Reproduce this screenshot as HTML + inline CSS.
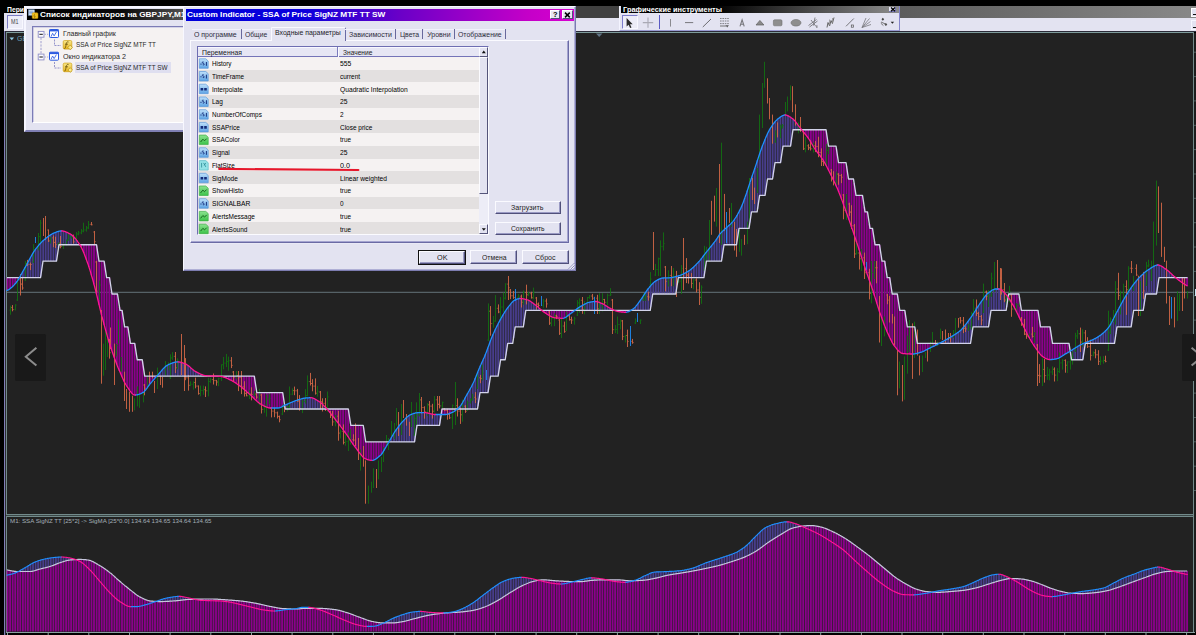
<!DOCTYPE html>
<html><head><meta charset="utf-8">
<style>
*{box-sizing:border-box;margin:0;padding:0}
html,body{width:1196px;height:635px;overflow:hidden;background:#000}
body{position:relative;font-family:"Liberation Sans",sans-serif;font-size:7.6px;color:#222}
.abs{position:absolute}
.t{position:absolute;white-space:nowrap;line-height:1;transform-origin:0 0}
#chart{position:absolute;left:0;top:0;width:1196px;height:635px}
.lav{background:#e3e3f1}
.btn{position:absolute;background:#e3e3f1;border:1px solid;border-color:#fafaff #55557a #55557a #fafaff;box-shadow:0.5px 0.5px 0 #9c9cc4 inset}
.row{position:absolute;left:0;width:281px;height:12.72px}
.row.a{background:#f5f2f2}.row.b{background:#e3e0e0}
</style></head><body>
<!-- chart background -->
<div class="abs" style="left:7px;top:33px;width:1187px;height:481.5px;background:#222222"></div>
<div class="abs" style="left:7px;top:517px;width:1187px;height:115px;background:#222222"></div>
<!-- frame lines -->
<div class="abs" style="left:3.8px;top:31px;width:1.6px;height:604px;background:#7f7fb6"></div>
<div class="abs" style="left:5.4px;top:31px;width:.8px;height:604px;background:#2a2a32"></div>
<div class="abs" style="left:6.2px;top:32px;width:1px;height:601px;background:#728a8a"></div>
<div class="abs" style="left:6px;top:32.4px;width:1188px;height:1px;background:#7e9c9c"></div>
<div class="abs" style="left:6px;top:31.2px;width:1190px;height:1px;background:#2c2c3a"></div>
<div class="abs" style="left:6px;top:514.3px;width:1189px;height:.9px;background:#728a8a"></div>
<div class="abs" style="left:6px;top:515.2px;width:1189px;height:1px;background:#3a4646"></div>
<div class="abs" style="left:6px;top:516.2px;width:1189px;height:.9px;background:#728a8a"></div>
<div class="abs" style="left:6px;top:631.6px;width:1189px;height:1px;background:#8aa0a0"></div>
<div class="abs" style="left:1193.2px;top:32px;width:1px;height:600px;background:#728a8a"></div>
<div class="abs" style="left:1194.2px;top:33px;width:1.8px;height:599px;background:#1c1c1c"></div>
<svg id="chart" viewBox="0 0 1196 635">
<line x1="7" y1="292.3" x2="1193" y2="292.3" stroke="#65747a" stroke-width="1"/>
<path d="M20.3 276.1V277.6M22.9 271.5V277.6M25.4 267V277.6M27.9 262.4V277.6M30.5 257.5V277.6M33 253V277.6M35.6 249.2V277.6M38.1 246V277.6M40.6 243.1V276.4M43.2 240.6V261.1M45.7 238.4V261.1M48.3 236.5V261.1M50.8 234.7V261.1M53.4 233.3V261.1M55.9 232.3V261.1M58.4 231.4V248.3M61 230.9V244.7M63.5 231.1V244.7M66.1 232V244.7M68.6 233.2V244.7M71.1 234.6V244.7M73.7 236.8V244.7M76.2 239.7V244.7M78.8 243.2V244.7M157.6 375.2V376.1M160.1 372.4V376.1M162.7 369.4V376.1M165.2 366.8V376.1M167.7 365V376.1M170.3 363.9V376.1M172.8 362.8V376.1M175.4 362.1V376.1M177.9 361.9V376.1M180.5 362.2V376.1M183 363V376.1M185.5 364V376.1M188.1 365.6V376.1M190.6 367.7V376.1M193.2 369.9V376.1M195.7 371.6V376.1M198.2 373V376.1M200.8 374.2V376.1M203.3 375.2V376.1M205.9 375.6V376.1M287.2 404.1V409M289.8 403V409M292.3 401.9V409M294.8 401V409M297.4 400.1V409M299.9 399.3V409M302.5 398.6V409M305 398.1V409M307.6 397.8V409M310.1 397.7V409M312.6 398V409M315.2 399.2V409M317.7 400.7V409M320.3 402.4V409M322.8 404.7V409M325.4 407.2V409M391.4 437.5V441.9M394 433.1V441.9M396.5 429.3V441.9M399.1 425.8V441.9M401.6 422.7V441.9M404.2 420V441.9M406.7 417.4V441.9M409.2 415.4V441.9M411.8 414.2V441.9M414.3 413.3V441.9M416.9 412.7V426.3M419.4 412.7V425.4M421.9 412.7V425.4M424.5 412.7V425.4M427 412.9V425.4M429.6 413.5V425.4M432.1 414.1V425.4M434.7 414.5V425.4M437.2 414.5V425.4M439.7 414.5V423.6M460.1 406.3V409M462.6 402.6V409M465.2 397.8V409M467.7 393.3V409M470.2 388.8V409M472.8 383.9V409M475.3 378.1V409M477.9 371.7V406.3M480.4 365.8V392.6M483 360.1V392.6M485.5 354.2V392.6M488 347.5V392.1M490.6 340.6V376.1M493.1 334.3V376.1M495.7 328.8V376.1M498.2 323.7V375.2M500.7 318.9V359.7M503.3 314.5V359.7M505.8 310.4V355.4M508.4 306.9V343.3M510.9 303.7V343.3M513.5 301V338.1M516 299.6V326.9M518.5 298.7V326.9M521.1 298.5V326.9M523.6 298.9V324.5M526.2 299.5V310.4M528.7 300.3V310.4M531.3 301.9V310.4M533.8 303.8V310.4M536.3 305.7V310.4M538.9 307.9V310.4M577 308.8V310.4M579.5 307.1V310.4M582.1 305.6V310.4M584.6 304.2V310.4M587.2 303V310.4M589.7 302.1V310.4M592.3 301.7V310.4M594.8 301.5V310.4M597.3 301.7V310.4M599.9 302.6V310.4M602.4 303.7V310.4M605 305V310.4M607.5 306.7V310.4M610.1 308.3V310.4M612.6 309.5V310.4M632.9 309V310.4M635.5 306.7V310.4M638 303.5V310.4M640.6 300.1V310.4M643.1 296.3V310.4M645.6 292.3V310.4M648.2 288.8V310.4M650.7 285.7V306.8M653.3 282.9V294M655.8 280.9V294M658.4 279.5V294M660.9 278.4V294M663.4 278V294M666 277.9V294M668.5 277.8V294M671.1 277.7V294M673.6 277.2V294M676.1 276.6V291.5M678.7 275.8V277.6M681.2 274.8V277.6M683.8 273.7V277.6M686.3 272.4V277.6M688.9 270.9V277.6M691.4 268.9V277.6M693.9 266.7V277.6M696.5 264.2V277.6M699 261.5V277.6M701.6 258.4V277.6M704.1 255V276M706.6 251.8V261.1M709.2 248.7V261.1M711.7 245.6V261.1M714.3 242.3V261.1M716.8 238.8V261.1M719.4 234.8V261.1M721.9 231.9V258.3M724.4 229.5V244.7M727 227.2V244.7M729.5 225V244.7M732.1 222.4V244.7M734.6 219.2V244.7M737.2 215.1V240.2M739.7 210.4V228.3M742.2 204.8V228.3M744.8 198.1V228.3M747.3 190.8V228.3M749.9 182.9V222.4M752.4 175.4V211.8M754.9 168V211.8M757.5 160.3V209.1M760 152.6V195.4M762.6 145.6V195.4M765.1 139.2V194.4M767.7 133.4V179M770.2 128.7V179M772.7 124.8V177.2M775.3 121.4V162.6M777.8 119V162.6M780.4 117V162.6M782.9 115.5V146.7M785.5 115V146.1M788 115.8V146.1M790.5 117.3V145.6M793.1 119.1V129.7M795.6 121.8V129.7M798.2 125.3V129.7M800.7 128.6V129.7M940.5 342.7V343.3M943.1 341.4V343.3M945.6 340V343.3M948.1 338.5V343.3M950.7 337V343.3M953.2 335.5V343.3M955.8 333.9V343.3M958.3 332.2V343.3M960.8 330.1V343.3M963.4 327.4V343.3M965.9 324.3V343.3M968.5 320.8V343.3M971 317.3V339.7M973.6 313.5V326.9M976.1 309.5V326.9M978.6 305.5V326.9M981.2 301.8V326.9M983.7 298.2V326.9M986.3 295V326.9M988.8 292.7V324.6M991.4 290.7V310.4M993.9 289.3V310.4M996.4 289V310.4M999 289V310.4M1001.5 290V310.4M1004.1 292.4V310.4M1006.6 295.1V306.9M1072.7 349.5V359.7M1075.2 347.9V359.7M1077.8 346.4V359.7M1080.3 344.9V359.7M1082.9 343.7V359M1085.4 342.6V343.3M1087.9 341.7V343.3M1090.5 340.7V343.3M1093 339.6V343.3M1095.6 338.3V343.3M1098.1 336.8V343.3M1100.7 335.1V343.3M1103.2 333V343.3M1105.7 330.6V343.3M1108.3 327.8V343.3M1110.8 323.9V343.3M1113.4 319V343.3M1115.9 313.9V333.9M1118.5 309.2V326.9M1121 304.5V326.9M1123.5 299.8V326.9M1126.1 295.4V326.9M1128.6 291.5V326.9M1131.2 287.7V326.2M1133.7 284.2V310.4M1136.2 281V310.4M1138.8 278.2V310.4M1141.3 275.6V310.4M1143.9 273.2V305.8M1146.4 271.1V294M1149 269.3V294M1151.5 267.7V294M1154 266.1V294M1156.6 265.1V293.2M1159.1 265.2V277.6M1161.7 266.3V277.6M1164.2 268.1V277.6M1166.8 269.9V277.6M1169.3 271.9V277.6M1171.8 274.3V277.6M1174.4 276.6V277.6" stroke="#483d8b" stroke-width="1.86" fill="none"/>
<path d="M7.6 290.2V277.6M10.1 288.6V277.6M12.7 286.4V277.6M15.2 283.7V277.6M17.8 280.3V277.6M81.3 247.3V244.7M83.9 253V244.7M86.4 259.7V244.7M88.9 266.9V244.7M91.5 275.3V244.7M94 284.4V244.7M96.6 294.3V245.4M99.1 304.9V261.1M101.7 315.3V261.1M104.2 324.9V262M106.7 334V277.6M109.3 342.6V277.6M111.8 350.4V292.8M114.4 357.7V294M116.9 364.6V294M119.4 370.8V306.9M122 376.7V310.4M124.5 382.2V326.4M127.1 386.5V326.9M129.6 390.2V338.2M132.2 393.4V343.3M134.7 395V343.6M137.2 394.8V359.7M139.8 394V359.7M142.3 392.9V360.8M144.9 390.9V376.1M147.4 387.5V376.1M150 384.1V376.1M152.5 381.1V376.1M155 378.1V376.1M223.7 377.1V376.1M226.2 378V376.1M228.8 379.2V376.1M231.3 380.4V376.1M233.8 381.8V376.1M236.4 383.5V376.1M238.9 385.2V376.1M241.5 387.1V376.1M244 389.2V376.1M246.5 391.5V376.1M249.1 393.8V376.1M251.6 396V376.1M254.2 398.5V376.1M256.7 401V392M259.3 403.1V392.6M261.8 404.7V392.6M264.3 406.1V392.6M266.9 407.2V392.6M269.4 407.9V392.6M272 408V392.6M274.5 408V392.6M277.1 408V392.6M279.6 407.7V392.6M282.1 406.6V392.6M327.9 410V409M330.4 413.1V409M333 416.3V409M335.5 419.6V409M338.1 422.9V409M340.6 426.3V409M343.1 429.7V409M345.7 433.2V409M348.2 436.9V409M350.8 440.7V425.2M353.3 444.5V425.4M355.9 447.9V425.4M358.4 451.3V425.4M360.9 454.7V425.4M363.5 457.4V427.5M366 459V441.9M368.6 459.9V441.9M371.1 460.4V441.9M373.6 460.1V441.9M376.2 458.8V441.9M378.7 456.9V441.9M381.3 454.5V441.9M383.8 450.7V441.9M386.4 446.3V441.9M442.3 414.5V409M444.8 414.5V409M447.4 414.2V409M449.9 413.4V409M452.4 412.3V409M455 410.9V409M544 312.1V310.4M546.5 313.8V310.4M549 315.4V310.4M551.6 316.8V310.4M554.1 317.7V310.4M556.7 318V310.4M559.2 318.2V310.4M561.8 318.3V310.4M564.3 318V310.4M566.8 316.5V310.4M569.4 314.4V310.4M571.9 312.7V310.4M617.7 311.4V310.4M620.2 311.9V310.4M622.8 312.2V310.4M625.3 312.3V310.4M627.8 311.9V310.4M803.2 131.6V129.7M805.8 134.7V129.7M808.3 138.2V129.7M810.9 142.2V129.7M813.4 146.5V129.7M816 150.4V129.7M818.5 153.8V129.7M821 157.1V129.7M823.6 160.9V129.7M826.1 165.4V130.8M828.7 170.4V146.1M831.2 175.4V146.1M833.8 180.6V146.1M836.3 186.1V148.3M838.8 192V162.6M841.4 198.6V162.6M843.9 205.6V162.6M846.5 212.6V165.8M849 219.8V179M851.5 227.1V179M854.1 234.5V183M856.6 242.1V195.4M859.2 249.8V195.4M861.7 257.7V195.4M864.3 265.5V207M866.8 273V211.8M869.3 280.2V224M871.9 287.6V228.3M874.4 295.4V241M877 303.6V244.7M879.5 311.5V245M882 318.7V261.1M884.6 325.5V261.1M887.1 331.7V277.1M889.7 337.3V277.7M892.2 342.4V294M894.8 346.4V294M897.3 349.4V294.3M899.8 352V310.4M902.4 353.4V310.4M904.9 353.7V311.5M907.5 353.9V326.9M910 354V326.9M912.6 354V326.9M915.1 353.8V329M917.6 353.2V343.3M920.2 352.4V343.3M922.7 351.5V343.3M925.3 350.4V343.3M927.8 349.1V343.3M930.3 347.8V343.3M932.9 346.6V343.3M935.4 345.4V343.3M938 344.1V343.3M1009.1 298.6V294M1011.7 302.8V294M1014.2 307.2V294M1016.8 312.1V294M1019.3 317.4V297M1021.9 322.6V310.4M1024.4 328.1V310.4M1026.9 333.4V310.4M1029.5 338.1V310.4M1032 342.4V310.4M1034.6 346.4V310.4M1037.1 350V310.4M1039.7 353.4V321.4M1042.2 356.2V326.9M1044.7 357.8V326.9M1047.3 359V326.9M1049.8 359.6V326.9M1052.4 359.5V342.4M1054.9 359.1V343.3M1057.4 358.6V343.3M1060 357.3V343.3M1062.5 355.8V343.3M1065.1 354.1V343.3M1067.6 352.7V343.3M1176.9 278.7V277.6M1179.5 280.7V277.6M1182 282.5V277.6M1184.5 284.3V277.6M1187.1 285.8V277.6" stroke="#8b008b" stroke-width="1.86" fill="none"/>
<path d="M10.5 305.7V314.7M9.4 310.1h.8M10.8 307.6h.8M15.5 304.2V310.5M14.4 309.6h.8M15.8 305.1h.8M17.5 278.8V301.0M16.4 300.0h.8M17.8 279.8h.8M25.5 260.9V281.0M24.4 280.0h.8M25.8 263.3h.8M33.5 244.1V263.0M32.4 262.0h.8M33.8 247.8h.8M38.5 233.0V250.4M37.4 247.8h.8M38.8 236.7h.8M40.5 219.9V243.0M39.4 236.7h.8M40.8 223.0h.8M50.5 237.2V243.6M49.4 240.9h.8M50.8 237.9h.8M58.5 242.6V246.6M57.4 244.6h.8M58.8 243.1h.8M63.5 243.2V249.0M62.4 246.5h.8M63.8 244.2h.8M66.5 239.5V245.7M65.4 244.2h.8M66.8 240.2h.8M68.5 232.0V240.7M67.4 240.2h.8M68.8 237.1h.8M71.5 236.2V238.7M70.4 237.1h.8M71.8 236.7h.8M76.5 232.0V239.0M75.4 238.0h.8M76.8 234.0h.8M78.5 231.0V235.3M77.4 234.0h.8M78.8 232.9h.8M81.5 229.1V234.2M80.4 232.9h.8M81.8 231.1h.8M83.5 222.7V232.3M82.4 231.1h.8M83.8 230.0h.8M86.5 226.0V231.6M85.4 230.0h.8M86.8 227.9h.8M88.5 221.0V229.1M87.4 227.9h.8M88.8 224.3h.8M99.5 280.5V300.0M98.4 291.1h.8M99.8 285.0h.8M116.5 344.1V356.4M115.4 352.8h.8M116.8 345.6h.8M170.5 354.3V379.0M169.4 378.0h.8M170.8 357.9h.8M172.5 352.1V359.9M171.4 357.9h.8M172.8 356.3h.8M177.5 358.3V369.4M176.4 367.8h.8M177.8 360.2h.8M190.5 381.3V386.1M189.4 385.3h.8M190.8 384.2h.8M193.5 381.3V389.7M192.4 384.2h.8M193.8 382.5h.8M200.5 385.6V396.3M199.4 393.5h.8M200.8 390.5h.8M203.5 385.6V394.8M202.4 390.5h.8M203.8 389.7h.8M208.5 377.7V396.4M207.4 390.8h.8M208.8 381.6h.8M210.5 377.9V382.9M209.4 381.6h.8M210.8 379.5h.8M218.5 377.6V386.2M217.4 382.0h.8M218.8 378.6h.8M221.5 364.3V381.0M220.4 378.6h.8M221.8 364.8h.8M223.5 356.9V369.4M222.4 364.8h.8M223.8 363.1h.8M226.5 353.9V367.1M225.4 363.1h.8M226.8 361.7h.8M228.5 356.6V370.7M227.4 361.7h.8M228.8 360.8h.8M236.5 371.0V379.4M235.4 377.1h.8M236.8 375.4h.8M249.5 389.8V399.0M248.4 395.8h.8M249.8 393.9h.8M254.5 390.8V396.3M253.4 394.4h.8M254.8 394.0h.8M259.5 388.8V405.2M258.4 397.1h.8M259.8 393.5h.8M264.5 404.5V412.8M263.4 409.3h.8M264.8 406.8h.8M266.5 394.5V416.6M265.4 406.8h.8M266.8 399.0h.8M269.5 394.0V404.2M268.4 399.0h.8M269.8 398.3h.8M282.5 404.8V415.0M281.4 414.0h.8M282.8 406.7h.8M287.5 405.8V411.4M286.4 407.1h.8M287.8 406.5h.8M289.5 386.5V409.0M288.4 406.5h.8M289.8 394.2h.8M292.5 388.3V395.0M291.4 394.2h.8M292.8 390.6h.8M302.5 399.2V413.1M301.4 408.5h.8M302.8 401.5h.8M305.5 389.2V403.6M304.4 401.5h.8M305.8 395.6h.8M307.5 375.4V396.4M306.4 395.6h.8M307.8 381.6h.8M317.5 385.9V396.7M316.4 393.2h.8M317.8 391.7h.8M327.5 391.5V411.9M326.4 407.4h.8M327.8 396.9h.8M335.5 414.9V426.3M334.4 421.9h.8M335.8 416.2h.8M340.5 429.5V438.5M339.4 433.1h.8M340.8 431.3h.8M345.5 434.0V445.7M344.4 442.4h.8M345.8 441.7h.8M348.5 432.4V451.0M347.4 441.7h.8M348.8 439.9h.8M350.5 429.1V444.6M349.4 439.9h.8M350.8 439.7h.8M414.5 413.1V436.0M413.4 435.0h.8M414.8 418.3h.8M416.5 402.3V424.7M415.4 418.3h.8M416.8 415.2h.8M419.5 393.0V416.4M418.4 415.2h.8M419.8 399.9h.8M427.5 403.1V415.9M426.4 411.8h.8M427.8 404.8h.8M434.5 396.0V412.5M433.4 411.2h.8M434.8 399.8h.8M442.5 401.6V408.2M441.4 405.9h.8M442.8 402.5h.8M452.5 404.4V429.0M451.4 417.8h.8M452.8 405.6h.8M462.5 399.6V421.7M461.4 414.8h.8M462.8 406.2h.8M467.5 400.6V411.0M466.4 410.0h.8M467.8 402.7h.8M470.5 398.2V403.5M469.4 402.7h.8M470.8 400.0h.8M472.5 393.8V400.7M471.4 400.0h.8M472.8 397.3h.8M477.5 372.9V389.0M476.4 388.0h.8M477.8 377.8h.8M482.5 364.7V380.6M481.4 378.6h.8M482.8 373.2h.8M488.5 303.4V341.0M487.4 340.0h.8M488.8 311.2h.8M493.5 316.0V327.7M492.4 323.6h.8M493.8 321.1h.8M495.5 295.1V321.8M494.4 321.1h.8M495.8 308.3h.8M500.5 297.1V319.1M499.4 312.0h.8M500.8 307.0h.8M503.5 292.6V311.8M502.4 307.0h.8M503.8 298.2h.8M505.5 283.2V299.6M504.4 298.2h.8M505.8 284.1h.8M518.5 294.1V298.7M517.4 297.5h.8M518.8 296.2h.8M523.5 290.5V304.7M522.4 302.2h.8M523.8 292.6h.8M528.5 292.0V296.1M527.4 294.8h.8M528.8 293.7h.8M533.5 287.6V299.2M532.4 297.8h.8M533.8 292.8h.8M543.5 299.0V307.8M542.4 305.5h.8M543.8 301.0h.8M551.5 315.6V326.4M550.4 323.1h.8M551.8 318.4h.8M554.5 313.4V326.2M553.4 318.4h.8M554.8 315.9h.8M561.5 319.0V338.1M560.4 333.3h.8M561.8 326.0h.8M566.5 311.7V331.0M565.4 330.0h.8M566.8 316.0h.8M574.5 316.8V324.6M573.4 320.1h.8M574.8 318.8h.8M577.5 300.1V316.0M576.4 315.0h.8M577.8 302.9h.8M579.5 298.3V312.8M578.4 302.9h.8M579.8 300.3h.8M584.5 301.0V314.3M583.4 309.8h.8M584.8 309.5h.8M587.5 296.9V304.0M586.4 303.0h.8M587.8 297.5h.8M589.5 295.0V298.9M588.4 297.5h.8M589.8 296.0h.8M599.5 293.2V314.0M598.4 308.8h.8M599.8 306.0h.8M602.5 293.2V311.5M601.4 306.0h.8M602.8 299.5h.8M607.5 293.7V305.4M606.4 302.3h.8M607.8 295.3h.8M610.5 288.1V296.0M609.4 295.3h.8M610.8 294.7h.8M615.5 325.0V333.1M614.4 329.7h.8M615.8 329.6h.8M617.5 316.5V334.0M616.4 329.6h.8M617.8 324.5h.8M620.5 319.5V329.4M619.4 324.5h.8M620.8 320.9h.8M625.5 334.9V342.5M624.4 336.6h.8M625.8 335.5h.8M635.5 318.4V324.0M634.4 323.0h.8M635.8 320.9h.8M640.5 319.4V324.0M639.4 320.9h.8M640.8 320.1h.8M643.5 293.5V301.0M642.4 300.0h.8M643.8 297.0h.8M645.5 293.6V301.0M644.4 297.0h.8M645.8 296.7h.8M650.5 272.1V286.0M649.4 285.0h.8M650.8 279.1h.8M655.5 263.9V276.0M654.4 275.0h.8M655.8 269.6h.8M658.5 257.6V276.0M657.4 269.6h.8M658.8 258.8h.8M660.5 240.4V276.0M659.4 258.8h.8M660.8 246.7h.8M663.5 232.4V250.5M662.4 246.7h.8M663.8 243.7h.8M668.5 270.3V286.5M667.4 281.4h.8M668.8 275.4h.8M673.5 268.1V286.3M672.4 277.2h.8M673.8 276.3h.8M678.5 279.2V283.2M677.4 281.3h.8M678.8 281.1h.8M681.5 265.1V294.0M680.4 281.1h.8M681.8 268.5h.8M693.5 279.0V289.3M692.4 283.4h.8M693.8 280.0h.8M701.5 285.3V303.8M700.4 297.3h.8M701.8 287.2h.8M704.5 245.8V271.0M703.4 270.0h.8M704.8 255.0h.8M775.5 130.3V142.7M774.4 142.0h.8M775.8 134.2h.8M780.5 124.5V138.3M779.4 134.2h.8M780.8 126.9h.8M782.5 124.0V128.7M781.4 126.9h.8M782.8 125.7h.8M798.5 122.2V133.3M797.4 125.7h.8M798.8 124.5h.8M805.5 137.1V152.3M804.4 148.8h.8M805.8 145.8h.8M813.5 142.7V152.6M812.4 148.8h.8M813.8 145.8h.8M826.5 143.9V165.3M825.4 162.1h.8M826.8 150.6h.8M828.5 145.3V154.4M827.4 150.6h.8M828.8 148.6h.8M836.5 171.5V184.9M835.4 181.9h.8M836.8 174.1h.8M846.5 194.0V220.0M845.4 210.3h.8M846.8 204.0h.8M856.5 240.2V254.6M855.4 253.9h.8M856.8 253.0h.8M861.5 248.8V271.0M860.4 258.8h.8M861.8 257.8h.8M871.5 261.0V303.3M870.4 293.5h.8M871.8 272.4h.8M874.5 261.0V278.9M873.4 272.4h.8M874.8 267.8h.8M968.5 324.1V330.9M967.4 328.9h.8M968.8 326.3h.8M971.5 311.8V329.7M970.4 326.3h.8M971.8 313.4h.8M973.5 299.0V314.9M972.4 313.4h.8M973.8 308.2h.8M983.5 283.6V313.0M982.4 312.0h.8M983.8 291.8h.8M988.5 290.1V307.0M987.4 296.1h.8M988.8 295.7h.8M991.5 272.7V296.8M990.4 295.7h.8M991.8 278.2h.8M1006.5 294.9V306.0M1005.4 300.0h.8M1006.8 297.2h.8M1009.5 285.8V302.2M1008.4 297.2h.8M1009.8 291.4h.8M1014.5 308.4V310.2M1013.4 309.0h.8M1014.8 308.9h.8M1016.5 303.1V311.7M1015.4 308.9h.8M1016.8 304.5h.8M1019.5 295.5V306.8M1018.4 304.5h.8M1019.8 298.2h.8M1029.5 333.6V336.9M1028.4 336.2h.8M1029.8 334.1h.8M1034.5 332.1V343.0M1033.4 336.4h.8M1034.8 333.3h.8M1042.5 358.2V386.0M1041.4 376.0h.8M1042.8 369.4h.8M1047.5 366.9V379.8M1046.4 375.6h.8M1047.8 375.1h.8M1049.5 368.7V380.4M1048.4 375.1h.8M1049.8 372.0h.8M1052.5 366.4V374.9M1051.4 372.0h.8M1052.8 369.2h.8M1057.5 368.1V381.2M1056.4 375.1h.8M1057.8 371.4h.8M1059.5 352.4V373.0M1058.4 371.4h.8M1059.8 362.9h.8M1062.5 359.2V369.6M1061.4 362.9h.8M1062.8 360.4h.8M1067.5 361.2V373.0M1066.4 365.2h.8M1067.8 361.9h.8M1070.5 357.1V369.6M1069.4 361.9h.8M1070.8 359.6h.8M1072.5 351.5V364.6M1071.4 359.6h.8M1072.8 357.1h.8M1075.5 332.8V352.0M1074.4 351.0h.8M1075.8 335.9h.8M1077.5 330.0V338.9M1076.4 335.9h.8M1077.8 333.8h.8M1082.5 329.3V347.2M1081.4 342.1h.8M1082.8 332.9h.8M1093.5 351.3V356.3M1092.4 355.4h.8M1093.8 352.8h.8M1100.5 356.3V365.0M1099.4 361.4h.8M1100.8 361.1h.8M1103.5 356.2V363.7M1102.4 361.1h.8M1103.8 360.4h.8M1108.5 310.7V351.0M1107.4 350.0h.8M1108.8 332.8h.8M1110.5 317.4V334.2M1109.4 332.8h.8M1110.8 319.1h.8M1113.5 310.0V321.8M1112.4 319.1h.8M1113.8 316.9h.8M1115.5 281.1V324.5M1114.4 316.9h.8M1115.8 289.0h.8M1120.5 290.6V314.5M1119.4 295.5h.8M1120.8 293.0h.8M1123.5 283.7V298.3M1122.4 293.0h.8M1123.8 286.6h.8M1128.5 266.2V293.2M1127.4 289.7h.8M1128.8 268.2h.8M1146.5 261.8V286.0M1145.4 285.0h.8M1146.8 265.9h.8M1148.5 259.7V267.2M1147.4 265.9h.8M1148.8 264.9h.8M759.5 114.6V160.0M762.5 83.0V128.0M764.5 61.8V87.8M785.5 102.0V116.0M787.5 96.5V111.4M790.5 85.4V100.4M1153.5 221.6V267.0M1156.5 180.6V245.6M1177.5 291.0V321.0M1179.5 293.4V311.0M1187.5 291.0V298.5M1133.5 275.8V291.0M1140.5 281.0V316.0M1151.5 260.7V281.0M360.5 449.4V470.6M368.5 485.6V503.7M371.5 481.7V492.7M373.5 468.3V488.0M378.5 460.4V479.3M381.5 457.0V472.0M383.5 447.0V462.0M386.5 435.0V444.6M388.5 438.0V450.0M391.5 421.0V436.0M394.5 423.0V439.0M396.5 408.0V425.7M401.5 404.0V435.0M411.5 402.0V427.0M881.5 317.0V346.0M884.5 316.5V336.4M899.5 361.5V388.4M904.5 356.3V399.7M907.5 335.5V373.7M909.5 320.0V352.0M914.5 321.7V358.0M922.5 355.5V372.0M925.5 352.0V358.0M930.5 341.6V352.0M932.5 332.0V346.0M937.5 341.6V346.0M940.5 328.6V339.0M953.5 330.0V338.0M955.5 318.0V333.0M706.5 246.8V262.0M709.5 220.0V262.0M716.5 188.0V226.6M721.5 142.7V244.9M731.5 203.0V227.0M739.5 230.0V251.8M741.5 239.0V255.6M747.5 221.6V244.2M749.5 178.0V227.9M757.5 168.0V193.0M103.5 343.6V375.7M105.5 330.0V370.0M107.5 333.0V357.0M118.5 319.5V343.6M121.5 357.0V371.7M134.5 398.4V410.4M137.5 386.4V406.4M139.5 394.4V407.8M143.5 391.7V402.4M147.5 375.7V389.0M157.5 367.6V389.0M165.5 361.0V375.7M168.5 362.3V370.3M994.5 262.0V292.0M455.5 382.0V425.0" stroke="#117511" stroke-width="0.85" fill="none"/><path d="M12.5 305.1V311.3M11.4 307.6h.8M12.8 309.6h.8M20.5 274.0V295.5M19.4 279.8h.8M20.8 284.1h.8M22.5 277.9V289.8M21.4 284.1h.8M22.8 288.0h.8M27.5 259.9V265.9M26.4 263.3h.8M27.8 264.3h.8M30.5 262.6V270.1M29.4 264.3h.8M30.8 264.5h.8M48.5 229.4V242.0M47.4 230.0h.8M48.8 240.9h.8M53.5 235.5V247.2M52.4 237.9h.8M53.8 242.4h.8M55.5 236.7V248.0M54.4 242.4h.8M55.8 244.6h.8M60.5 236.0V248.3M59.4 243.1h.8M60.8 246.5h.8M73.5 234.6V243.6M72.4 236.7h.8M73.8 241.8h.8M91.5 222.0V225.4M90.4 224.3h.8M91.8 224.8h.8M94.5 231.0V244.7M93.4 232.0h.8M94.8 241.6h.8M96.5 261.0V293.7M95.4 262.0h.8M96.8 291.1h.8M109.5 339.0V358.6M108.4 340.0h.8M109.8 352.8h.8M144.5 384.0V395.3M143.4 385.0h.8M144.8 388.2h.8M175.5 352.0V373.0M174.4 356.3h.8M175.8 367.8h.8M185.5 358.1V380.2M184.4 360.2h.8M185.8 377.8h.8M188.5 374.9V390.6M187.4 377.8h.8M188.8 385.3h.8M195.5 377.6V388.3M194.4 382.5h.8M195.8 386.1h.8M198.5 385.4V394.7M197.4 386.1h.8M198.8 393.5h.8M205.5 386.4V397.0M204.4 389.7h.8M205.8 390.8h.8M213.5 373.5V384.5M212.4 379.5h.8M213.8 380.6h.8M216.5 379.9V385.7M215.4 380.6h.8M216.8 382.0h.8M231.5 357.1V368.1M230.4 360.8h.8M231.8 365.4h.8M233.5 371.0V381.0M232.4 372.0h.8M233.8 377.1h.8M238.5 371.0V391.1M237.4 375.4h.8M238.8 377.4h.8M241.5 371.0V394.1M240.4 377.4h.8M241.8 386.9h.8M244.5 381.2V396.6M243.4 386.9h.8M244.8 393.3h.8M246.5 391.4V396.3M245.4 393.3h.8M246.8 395.8h.8M251.5 387.3V400.4M250.4 393.9h.8M251.8 394.4h.8M256.5 393.3V398.8M255.4 394.0h.8M256.8 397.1h.8M261.5 394.0V413.5M260.4 395.0h.8M261.8 409.3h.8M271.5 407.0V417.4M270.4 408.0h.8M271.8 411.1h.8M274.5 407.8V417.2M273.4 411.1h.8M274.8 412.8h.8M277.5 411.6V418.5M276.4 412.8h.8M277.8 416.4h.8M279.5 415.6V422.3M278.4 416.4h.8M279.8 419.7h.8M284.5 403.3V412.2M283.4 406.7h.8M284.8 407.1h.8M294.5 386.6V395.2M293.4 390.6h.8M294.8 390.8h.8M297.5 388.9V401.7M296.4 390.8h.8M297.8 401.0h.8M299.5 395.1V410.7M298.4 401.0h.8M299.8 408.5h.8M310.5 372.9V385.5M309.4 381.6h.8M310.8 383.5h.8M312.5 379.2V391.3M311.4 383.5h.8M312.8 386.1h.8M315.5 378.4V394.6M314.4 386.1h.8M315.8 393.2h.8M320.5 391.0V409.3M319.4 392.0h.8M320.8 401.8h.8M322.5 398.3V411.5M321.4 401.8h.8M322.8 403.3h.8M325.5 398.1V410.9M324.4 403.3h.8M325.8 407.4h.8M330.5 411.0V418.0M329.4 412.0h.8M330.8 415.6h.8M332.5 411.0V425.8M331.4 415.6h.8M332.8 421.9h.8M338.5 411.0V440.7M337.4 416.2h.8M338.8 433.1h.8M343.5 424.4V444.4M342.4 431.3h.8M343.8 442.4h.8M353.5 434.3V441.4M352.4 439.7h.8M353.8 440.1h.8M421.5 397.0V413.5M420.4 399.9h.8M421.8 407.6h.8M424.5 406.3V418.7M423.4 407.6h.8M424.8 411.8h.8M429.5 401.0V412.5M428.4 404.8h.8M429.8 406.1h.8M432.5 403.8V418.6M431.4 406.1h.8M432.8 411.2h.8M437.5 396.0V410.9M436.4 399.8h.8M437.8 404.3h.8M439.5 396.0V408.4M438.4 404.3h.8M439.8 405.9h.8M444.5 408.0V411.1M443.4 409.0h.8M444.8 410.4h.8M447.5 408.8V419.7M446.4 410.4h.8M447.8 414.4h.8M449.5 412.4V419.1M448.4 414.4h.8M449.8 417.8h.8M457.5 398.3V416.5M456.4 405.6h.8M457.8 411.1h.8M460.5 407.5V423.9M459.4 411.1h.8M460.8 414.8h.8M465.5 405.2V412.9M464.4 406.2h.8M465.8 411.3h.8M475.5 392.1V403.1M474.4 397.3h.8M475.8 399.0h.8M480.5 374.9V383.2M479.4 377.8h.8M480.8 378.6h.8M490.5 306.1V335.7M489.4 311.2h.8M490.8 323.6h.8M498.5 304.4V313.2M497.4 308.3h.8M498.8 312.0h.8M508.5 276.0V300.0M507.4 284.1h.8M508.8 287.7h.8M510.5 289.0V299.2M509.4 290.0h.8M510.8 295.8h.8M513.5 291.0V298.9M512.4 295.8h.8M513.8 297.5h.8M521.5 294.6V307.5M520.4 296.2h.8M521.8 302.2h.8M526.5 284.7V304.4M525.4 292.6h.8M526.8 294.8h.8M531.5 291.8V298.6M530.4 293.7h.8M531.8 297.8h.8M536.5 297.0V309.6M535.4 298.0h.8M536.8 304.1h.8M538.5 302.5V307.7M537.4 304.1h.8M538.8 305.5h.8M546.5 298.5V307.7M545.4 301.0h.8M546.8 303.9h.8M549.5 311.0V324.9M548.4 312.0h.8M549.8 323.1h.8M556.5 314.7V319.1M555.4 315.9h.8M556.8 316.7h.8M559.5 319.0V334.9M558.4 320.0h.8M559.8 333.3h.8M564.5 321.6V332.8M563.4 326.0h.8M564.8 331.6h.8M569.5 314.4V320.6M568.4 316.0h.8M569.8 319.7h.8M571.5 316.7V323.9M570.4 319.7h.8M571.8 320.1h.8M582.5 297.0V313.8M581.4 300.3h.8M582.8 309.8h.8M592.5 293.9V299.9M591.4 296.0h.8M592.8 298.2h.8M597.5 294.8V314.0M596.4 298.2h.8M597.8 308.8h.8M604.5 298.9V304.0M603.4 299.5h.8M604.8 302.3h.8M612.5 299.0V334.0M611.4 300.0h.8M612.8 329.7h.8M622.5 320.0V340.1M621.4 320.9h.8M622.8 336.6h.8M627.5 329.6V347.0M626.4 335.5h.8M627.8 341.4h.8M632.5 338.9V343.8M631.4 341.4h.8M632.8 342.6h.8M648.5 291.8V300.6M647.4 296.7h.8M648.8 297.0h.8M665.5 266.0V291.3M664.4 267.0h.8M665.8 281.4h.8M671.5 266.0V286.2M670.4 275.4h.8M671.8 277.2h.8M676.5 270.9V297.0M675.4 276.3h.8M676.8 281.3h.8M686.5 258.1V283.1M685.4 268.5h.8M686.8 275.1h.8M688.5 272.8V283.6M687.4 275.1h.8M688.8 277.5h.8M691.5 273.1V288.1M690.4 277.5h.8M691.8 283.4h.8M696.5 278.3V292.5M695.4 280.0h.8M696.8 290.0h.8M699.5 282.2V305.0M698.4 290.0h.8M699.8 297.3h.8M803.5 131.0V150.0M802.4 132.0h.8M803.8 148.8h.8M808.5 144.2V150.1M807.4 145.8h.8M808.8 147.8h.8M810.5 140.5V150.5M809.4 147.8h.8M810.8 148.8h.8M815.5 141.1V152.1M814.4 145.8h.8M815.8 146.4h.8M818.5 136.8V157.2M817.4 146.4h.8M818.8 152.5h.8M821.5 148.3V166.0M820.4 152.5h.8M821.8 161.6h.8M823.5 159.8V166.0M822.4 161.6h.8M823.8 162.1h.8M831.5 169.0V181.5M830.4 170.0h.8M831.8 178.8h.8M833.5 171.2V185.4M832.4 178.8h.8M833.8 181.9h.8M838.5 173.1V184.8M837.4 174.1h.8M838.8 175.4h.8M841.5 174.0V183.1M840.4 175.4h.8M841.8 177.2h.8M843.5 194.0V219.3M842.4 195.0h.8M843.8 210.3h.8M849.5 202.7V215.8M848.4 204.0h.8M849.8 212.1h.8M851.5 205.2V229.0M850.4 212.1h.8M851.8 225.8h.8M854.5 224.0V258.0M853.4 225.8h.8M854.8 253.9h.8M859.5 251.5V269.5M858.4 253.0h.8M859.8 258.8h.8M864.5 252.6V279.0M863.4 257.8h.8M864.8 272.7h.8M869.5 268.8V299.4M868.4 272.7h.8M869.8 293.5h.8M876.5 261.0V283.3M875.4 267.8h.8M876.8 267.8h.8M887.5 294.0V304.2M886.4 295.0h.8M887.8 300.1h.8M960.5 317.0V323.5M959.4 318.0h.8M960.8 320.8h.8M963.5 317.0V333.1M962.4 320.8h.8M963.8 328.2h.8M965.5 326.2V332.0M964.4 328.2h.8M965.8 328.9h.8M976.5 299.5V316.0M975.4 308.2h.8M976.8 313.3h.8M978.5 311.9V320.2M977.4 313.3h.8M978.8 316.5h.8M981.5 315.0V325.1M980.4 316.5h.8M981.8 320.0h.8M986.5 290.6V300.2M985.4 291.8h.8M986.8 296.1h.8M1001.5 268.4V294.6M1000.4 278.2h.8M1001.8 289.7h.8M1004.5 283.0V302.2M1003.4 289.7h.8M1004.8 300.0h.8M1011.5 294.1V316.8M1010.4 295.0h.8M1011.8 309.0h.8M1021.5 317.0V325.8M1020.4 318.0h.8M1021.8 324.8h.8M1024.5 318.9V335.1M1023.4 324.8h.8M1024.8 334.1h.8M1026.5 333.4V338.8M1025.4 334.1h.8M1026.8 336.2h.8M1032.5 326.9V337.6M1031.4 334.1h.8M1032.8 336.4h.8M1037.5 344.0V386.0M1036.4 345.0h.8M1037.8 375.4h.8M1039.5 364.1V383.0M1038.4 375.4h.8M1039.8 376.0h.8M1044.5 358.8V382.6M1043.4 369.4h.8M1044.8 375.6h.8M1054.5 367.4V381.5M1053.4 369.2h.8M1054.8 375.1h.8M1065.5 359.4V372.7M1064.4 360.4h.8M1065.8 365.2h.8M1080.5 327.6V352.0M1079.4 333.8h.8M1080.8 342.1h.8M1085.5 330.1V343.9M1084.4 332.9h.8M1085.8 341.9h.8M1087.5 337.2V348.0M1086.4 341.9h.8M1087.8 346.7h.8M1090.5 339.7V360.5M1089.4 346.7h.8M1090.8 355.4h.8M1095.5 349.2V358.3M1094.4 352.8h.8M1095.8 354.8h.8M1098.5 350.2V365.0M1097.4 354.8h.8M1098.8 361.4h.8M1105.5 355.7V362.3M1104.4 360.4h.8M1105.8 361.4h.8M1118.5 272.8V299.9M1117.4 289.0h.8M1118.8 295.5h.8M1126.5 280.3V314.9M1125.4 286.6h.8M1126.8 289.7h.8M1131.5 261.0V273.1M1130.4 268.2h.8M1131.8 268.4h.8M1136.5 264.3V275.9M1135.4 268.4h.8M1136.8 275.0h.8M1143.5 271.9V298.9M1142.4 275.0h.8M1143.8 290.9h.8M767.5 78.3V103.5M769.5 98.0V119.3M772.5 114.6V143.7M777.5 122.4V137.4M792.5 86.2V112.2M795.5 104.3V125.6M800.5 117.0V131.9M1158.5 186.4V233.0M1161.5 202.7V256.9M1164.5 246.8V262.0M1166.5 260.7V303.5M1169.5 296.0V325.0M1174.5 297.2V327.4M1182.5 278.0V311.0M1184.5 277.0V298.5M1138.5 275.8V316.0M355.5 423.4V446.0M358.5 438.0V460.0M363.5 446.0V466.7M365.5 460.4V503.7M376.5 469.0V488.0M398.5 412.0V436.0M403.5 400.0V418.0M406.5 414.0V425.7M409.5 421.8V436.0M879.5 296.0V342.5M889.5 296.0V322.5M892.5 314.0V323.5M894.5 316.5V345.0M897.5 350.0V395.3M902.5 365.0V401.4M912.5 323.4V378.9M917.5 329.5V355.5M919.5 355.5V375.4M927.5 348.5V361.5M935.5 340.0V346.0M942.5 331.0V340.0M945.5 329.5V342.5M948.5 333.0V340.0M950.5 333.0V342.5M958.5 318.0V327.7M711.5 200.8V234.8M714.5 195.7V221.6M719.5 164.0V243.0M724.5 193.9V231.0M729.5 208.0V222.8M734.5 222.0V250.5M736.5 229.0V256.8M744.5 234.8V244.9M752.5 178.0V200.0M754.5 187.6V204.0M101.5 310.0V383.7M110.5 327.5V349.0M114.5 343.6V385.0M124.5 371.7V401.0M126.5 389.0V409.0M129.5 391.7V411.8M132.5 395.7V411.8M149.5 371.7V383.7M152.5 371.7V378.3M154.5 381.0V393.0M160.5 375.7V385.0M162.5 377.0V387.7M43.5 218.0V236.0M45.5 216.0V240.0M997.5 260.0V290.0M1000.5 268.0V300.0M181.5 334.0V375.0M184.5 345.0V391.0M653.5 232.0V270.0M683.5 238.0V290.0" stroke="#de6c48" stroke-width="0.85" fill="none"/><path d="M1171.5 297.0V318.6M726.5 212.0V243.0M515.5 289.0V301.0M541.5 296.0V306.0M594.5 296.8V314.0M630.5 326.0V346.0M637.5 313.0V322.0M866.5 262.0V270.0M35.5 237.0V243.0M486.5 370.0V380.0" stroke="#1e90ff" stroke-width="0.85" fill="none"/>
<polyline points="7,277.6 40.5,277.6 43,261.1 56.5,261.1 59,244.7 96.5,244.7 99,261.1 104.1,261.1 106.6,277.6 109.5,277.6 112,294 117.5,294 120,310.4 122.1,310.4 124.6,326.9 127.9,326.9 130.4,343.3 134.7,343.3 137.2,359.7 142.2,359.7 144.7,376.1 254.3,376.1 256.8,392.6 282.7,392.6 285.2,409 348.3,409 350.8,425.4 363.2,425.4 365.7,441.9 414.5,441.9 417,425.4 439.5,425.4 442,409 477.5,409 480,392.6 488,392.6 490.5,376.1 498.1,376.1 500.6,359.7 505.2,359.7 507.7,343.3 512.7,343.3 515.2,326.9 523.3,326.9 525.8,310.4 650.2,310.4 652.7,294 675.8,294 678.3,277.6 703.9,277.6 706.4,261.1 721.5,261.1 724,244.7 736.5,244.7 739,228.3 749,228.3 751.5,211.8 757.1,211.8 759.6,195.4 765,195.4 767.5,179 772.5,179 775,162.6 780.5,162.6 783,146.1 790.5,146.1 793,129.7 826,129.7 828.5,146.1 836,146.1 838.5,162.6 846,162.6 848.5,179 853.5,179 856,195.4 862.5,195.4 865,211.8 867.5,211.8 870,228.3 872.5,228.3 875,244.7 879.5,244.7 882,261.1 884.7,261.1 887.2,277.6 889.7,277.6 892.2,294 897.3,294 899.8,310.4 904.8,310.4 907.3,326.9 914.8,326.9 917.3,343.3 970.5,343.3 973,326.9 988.5,326.9 991,310.4 1006.1,310.4 1008.6,294 1018.9,294 1021.4,310.4 1038,310.4 1040.5,326.9 1050,326.9 1052.5,343.3 1069,343.3 1071.5,359.7 1082.8,359.7 1085.3,343.3 1114.5,343.3 1117,326.9 1131.1,326.9 1133.6,310.4 1143.2,310.4 1145.7,294 1156.5,294 1159,277.6 1187.6,277.6" fill="none" stroke="#d2d3ea" stroke-width="1.35" stroke-linejoin="round"/>
<path d="M7 290.5L7.6 290.2L8.2 289.9L8.8 289.6L9.4 289.2L10 288.7L10.6 288.2L11.2 287.7L11.8 287.2L12.4 286.7L13 286.1L13.6 285.5L14.2 284.9L14.8 284.2L15.4 283.5L16 282.8L16.6 282L17.2 281.2L17.8 280.3L18.4 279.3L19 278.3L19.6 277.3L20.2 276.3L20.8 275.2L21.4 274.1L22 273L22.6 271.9L23.2 270.9L23.8 269.8L24.4 268.7L25 267.7L25.6 266.7L26.2 265.6L26.8 264.5L27.4 263.4L28 262.2L28.6 261.1L29.2 259.9L29.8 258.8L30.4 257.7L31 256.6L31.6 255.5L32.2 254.4L32.8 253.4L33.4 252.4L34 251.4L34.6 250.6L35.2 249.7L35.8 248.9L36.4 248.1L37 247.4L37.6 246.6L38.2 245.9L38.8 245.2L39.4 244.5L40 243.8L40.6 243.2L41.2 242.5L41.8 241.9L42.4 241.3L43 240.7L43.6 240.2L44.2 239.7L44.8 239.2L45.4 238.7L46 238.2L46.6 237.7L47.2 237.3L47.8 236.8L48.4 236.4L49 235.9L49.6 235.5L50.2 235.1L50.8 234.7L51.4 234.4L52 234L52.6 233.7L53.2 233.4L53.8 233.1L54.4 232.8L55 232.6L55.6 232.4L56.2 232.2L56.8 231.9L57.4 231.7L58 231.5L58.6 231.4L59.2 231.2L59.8 231.1L60.4 231L61 230.9L61.6 230.9M135.4 395L136 394.9L136.6 394.9L137.2 394.8L137.8 394.6L138.4 394.5L139 394.3L139.6 394L140.2 393.8L140.8 393.6L141.4 393.3L142 393L142.6 392.7L143.2 392.4L143.8 392L144.4 391.4L145 390.7L145.6 390L146.2 389.2L146.8 388.4L147.4 387.5L148 386.6L148.6 385.8L149.2 385L149.8 384.2L150.4 383.5L151 382.8L151.6 382.1L152.2 381.4L152.8 380.7L153.4 380L154 379.3L154.6 378.6L155.2 377.9L155.8 377.2L156.4 376.5L157 375.9L157.6 375.2L158.2 374.6L158.8 373.9L159.4 373.2L160 372.5L160.6 371.8L161.2 371.1L161.8 370.4L162.4 369.7L163 369L163.6 368.4L164.2 367.8L164.8 367.2L165.4 366.6L166 366.1L166.6 365.7L167.2 365.3L167.8 365L168.4 364.7L169 364.4L169.6 364.2L170.2 363.9L170.8 363.6L171.4 363.4L172 363.2L172.6 362.9L173.2 362.7L173.8 362.5L174.4 362.4L175 362.2L175.6 362.1L176.2 362L176.8 361.9L177.4 361.9L178 361.9M271 408L271.6 408L272.2 408L272.8 408L273.4 408L274 408L274.6 408L275.2 408L275.8 408L276.4 408L277 408L277.6 408L278.2 408L278.8 407.9L279.4 407.8L280 407.6L280.6 407.4L281.2 407.1L281.8 406.8L282.4 406.4L283 406.1L283.6 405.8L284.2 405.4L284.8 405.1L285.4 404.8L286 404.6L286.6 404.3L287.2 404.1L287.8 403.8L288.4 403.6L289 403.3L289.6 403L290.2 402.8L290.8 402.5L291.4 402.3L292 402.1L292.6 401.8L293.2 401.6L293.8 401.4L294.4 401.1L295 400.9L295.6 400.7L296.2 400.5L296.8 400.3L297.4 400.1L298 399.9L298.6 399.7L299.2 399.5L299.8 399.3L300.4 399.2L301 399L301.6 398.8L302.2 398.6L302.8 398.5L303.4 398.4L304 398.2L304.6 398.1L305.2 398.1L305.8 398L306.4 397.9L307 397.9L307.6 397.8L308.2 397.8L308.8 397.8L309.4 397.7L310 397.7L310.6 397.7M371.8 460.4L372.4 460.4L373 460.3L373.6 460.1L374.2 459.9L374.8 459.6L375.4 459.3L376 458.9L376.6 458.5L377.2 458.1L377.8 457.6L378.4 457.1L379 456.6L379.6 456.1L380.2 455.6L380.8 455L381.4 454.3L382 453.5L382.6 452.7L383.2 451.7L383.8 450.7L384.4 449.7L385 448.7L385.6 447.6L386.2 446.5L386.8 445.5L387.4 444.5L388 443.5L388.6 442.5L389.2 441.5L389.8 440.4L390.4 439.3L391 438.3L391.6 437.2L392.2 436.1L392.8 435.1L393.4 434L394 433L394.6 432.1L395.2 431.2L395.8 430.3L396.4 429.5L397 428.6L397.6 427.8L398.2 427L398.8 426.2L399.4 425.4L400 424.6L400.6 423.9L401.2 423.2L401.8 422.5L402.4 421.8L403 421.2L403.6 420.5L404.2 419.9L404.8 419.3L405.4 418.6L406 418L406.6 417.5L407.2 416.9L407.8 416.4L408.4 415.9L409 415.5L409.6 415.2L410.2 414.9L410.8 414.6L411.4 414.4L412 414.1L412.6 413.9L413.2 413.7L413.8 413.4L414.4 413.3L415 413.1L415.6 412.9L416.2 412.8L416.8 412.8L417.4 412.7L418 412.7L418.6 412.7L419.2 412.7L419.8 412.7L420.4 412.7L421 412.7L421.6 412.7L422.2 412.7L422.8 412.7L423.4 412.7L424 412.7L424.6 412.7M435.4 414.5L436 414.5L436.6 414.5L437.2 414.5L437.8 414.5L438.4 414.5L439 414.5L439.6 414.5L440.2 414.5L440.8 414.5L441.4 414.5L442 414.5L442.6 414.5L443.2 414.5L443.8 414.5L444.4 414.5L445 414.5L445.6 414.5L446.2 414.4L446.8 414.3L447.4 414.2L448 414L448.6 413.8L449.2 413.6L449.8 413.4L450.4 413.2L451 412.9L451.6 412.6L452.2 412.4L452.8 412.1L453.4 411.8L454 411.5L454.6 411.1L455.2 410.7L455.8 410.3L456.4 409.8L457 409.3L457.6 408.8L458.2 408.2L458.8 407.7L459.4 407L460 406.4L460.6 405.7L461.2 404.9L461.8 403.9L462.4 403L463 401.9L463.6 400.8L464.2 399.7L464.8 398.5L465.4 397.4L466 396.3L466.6 395.2L467.2 394.1L467.8 393.1L468.4 392L469 391L469.6 389.9L470.2 388.9L470.8 387.8L471.4 386.7L472 385.5L472.6 384.3L473.2 383.1L473.8 381.8L474.4 380.4L475 378.9L475.6 377.4L476.2 375.9L476.8 374.4L477.4 372.9L478 371.4L478.6 369.9L479.2 368.5L479.8 367.2L480.4 365.8L481 364.5L481.6 363.1L482.2 361.8L482.8 360.5L483.4 359.1L484 357.8L484.6 356.4L485.2 354.9L485.8 353.4L486.4 351.9L487 350.3L487.6 348.6L488.2 347L488.8 345.4L489.4 343.7L490 342.1L490.6 340.5L491.2 339L491.8 337.4L492.4 336L493 334.6L493.6 333.3L494.2 331.9L494.8 330.6L495.4 329.3L496 328.1L496.6 326.8L497.2 325.6L497.8 324.5L498.4 323.3L499 322.1L499.6 321L500.2 319.9L500.8 318.9L501.4 317.8L502 316.7L502.6 315.7L503.2 314.6L503.8 313.6L504.4 312.6L505 311.7L505.6 310.8L506.2 309.9L506.8 309L507.4 308.2L508 307.4L508.6 306.6L509.2 305.8L509.8 305.1L510.4 304.3L511 303.6L511.6 302.9L512.2 302.2L512.8 301.6L513.4 301L514 300.6L514.6 300.2L515.2 299.9L515.8 299.6L516.4 299.4L517 299.1L517.6 298.9L518.2 298.8L518.8 298.6L519.4 298.5L520 298.5M562.6 318.3L563.2 318.3L563.8 318.2L564.4 318L565 317.7L565.6 317.4L566.2 316.9L566.8 316.5L567.4 316L568 315.5L568.6 315L569.2 314.6L569.8 314.1L570.4 313.7L571 313.3L571.6 312.9L572.2 312.4L572.8 312L573.4 311.5L574 311.1L574.6 310.6L575.2 310.1L575.8 309.7L576.4 309.2L577 308.8L577.6 308.4L578.2 307.9L578.8 307.5L579.4 307.1L580 306.8L580.6 306.4L581.2 306.1L581.8 305.8L582.4 305.4L583 305.1L583.6 304.8L584.2 304.4L584.8 304.1L585.4 303.8L586 303.5L586.6 303.2L587.2 303L587.8 302.7L588.4 302.5L589 302.3L589.6 302.2L590.2 302.1L590.8 302L591.4 301.9L592 301.8L592.6 301.7L593.2 301.6L593.8 301.6L594.4 301.5L595 301.5L595.6 301.5M625.6 312.3L626.2 312.3L626.8 312.2L627.4 312L628 311.8L628.6 311.6L629.2 311.3L629.8 311L630.4 310.6L631 310.3L631.6 309.9L632.2 309.5L632.8 309.1L633.4 308.7L634 308.2L634.6 307.7L635.2 307.1L635.8 306.4L636.4 305.6L637 304.9L637.6 304.1L638.2 303.3L638.8 302.4L639.4 301.6L640 300.8L640.6 300L641.2 299.2L641.8 298.3L642.4 297.4L643 296.5L643.6 295.5L644.2 294.6L644.8 293.6L645.4 292.7L646 291.8L646.6 290.9L647.2 290L647.8 289.2L648.4 288.5L649 287.8L649.6 287L650.2 286.3L650.8 285.6L651.4 284.9L652 284.2L652.6 283.6L653.2 283L653.8 282.4L654.4 281.9L655 281.5L655.6 281.1L656.2 280.7L656.8 280.4L657.4 280L658 279.7L658.6 279.4L659.2 279.1L659.8 278.8L660.4 278.6L661 278.4L661.6 278.2L662.2 278.1L662.8 278L663.4 278L664 277.9L664.6 277.9L665.2 277.9L665.8 277.9L666.4 277.9L667 277.8L667.6 277.8L668.2 277.8L668.8 277.8L669.4 277.8L670 277.7L670.6 277.7L671.2 277.7L671.8 277.6L672.4 277.5L673 277.4L673.6 277.2L674.2 277.1L674.8 276.9L675.4 276.8L676 276.6L676.6 276.4L677.2 276.2L677.8 276.1L678.4 275.9L679 275.7L679.6 275.5L680.2 275.3L680.8 275L681.4 274.8L682 274.5L682.6 274.3L683.2 274L683.8 273.7L684.4 273.4L685 273.1L685.6 272.8L686.2 272.4L686.8 272.1L687.4 271.8L688 271.4L688.6 271L689.2 270.6L689.8 270.2L690.4 269.7L691 269.3L691.6 268.8L692.2 268.3L692.8 267.7L693.4 267.2L694 266.6L694.6 266L695.2 265.5L695.8 264.9L696.4 264.2L697 263.6L697.6 263L698.2 262.4L698.8 261.7L699.4 261.1L700 260.3L700.6 259.6L701.2 258.8L701.8 258.1L702.4 257.3L703 256.5L703.6 255.7L704.2 254.9L704.8 254.1L705.4 253.4L706 252.6L706.6 251.9L707.2 251.1L707.8 250.4L708.4 249.6L709 248.9L709.6 248.2L710.2 247.4L710.8 246.7L711.4 246L712 245.2L712.6 244.5L713.2 243.7L713.8 242.9L714.4 242.2L715 241.4L715.6 240.6L716.2 239.7L716.8 238.8L717.4 237.9L718 236.9L718.6 236L719.2 235.1L719.8 234.2L720.4 233.5L721 232.9L721.6 232.2L722.2 231.6L722.8 231.1L723.4 230.5L724 230L724.6 229.4L725.2 228.8L725.8 228.2L726.4 227.7L727 227.2L727.6 226.7L728.2 226.1L728.8 225.6L729.4 225.1L730 224.5L730.6 224L731.2 223.4L731.8 222.7L732.4 222.1L733 221.4L733.6 220.6L734.2 219.8L734.8 218.9L735.4 218L736 217.1L736.6 216.1L737.2 215.1L737.8 214L738.4 212.9L739 211.8L739.6 210.6L740.2 209.4L740.8 208.2L741.4 206.8L742 205.4L742.6 203.9L743.2 202.4L743.8 200.8L744.4 199.1L745 197.5L745.6 195.8L746.2 194.1L746.8 192.4L747.4 190.5L748 188.7L748.6 186.8L749.2 185L749.8 183.1L750.4 181.3L751 179.5L751.6 177.7L752.2 176L752.8 174.2L753.4 172.5L754 170.7L754.6 169L755.2 167.2L755.8 165.4L756.4 163.6L757 161.8L757.6 160L758.2 158.1L758.8 156.3L759.4 154.5L760 152.7L760.6 151L761.2 149.3L761.8 147.6L762.4 146L763 144.5L763.6 143L764.2 141.5L764.8 140L765.4 138.6L766 137.1L766.6 135.7L767.2 134.4L767.8 133.1L768.4 131.9L769 130.7L769.6 129.7L770.2 128.7L770.8 127.7L771.4 126.8L772 125.9L772.6 125L773.2 124.1L773.8 123.3L774.4 122.5L775 121.8L775.6 121.1L776.2 120.4L776.8 119.9L777.4 119.3L778 118.8L778.6 118.4L779.2 117.9L779.8 117.4L780.4 117L781 116.6L781.6 116.2L782.2 115.8L782.8 115.5L783.4 115.3L784 115.1L784.6 115L785.2 115M912.4 354L913 354L913.6 354L914.2 353.9L914.8 353.8L915.4 353.7L916 353.6L916.6 353.5L917.2 353.3L917.8 353.1L918.4 353L919 352.8L919.6 352.6L920.2 352.4L920.8 352.3L921.4 352.1L922 351.8L922.6 351.6L923.2 351.3L923.8 351.1L924.4 350.8L925 350.5L925.6 350.2L926.2 349.9L926.8 349.6L927.4 349.3L928 349L928.6 348.7L929.2 348.4L929.8 348.1L930.4 347.8L931 347.5L931.6 347.2L932.2 346.9L932.8 346.7L933.4 346.4L934 346.1L934.6 345.8L935.2 345.5L935.8 345.2L936.4 344.9L937 344.6L937.6 344.3L938.2 343.9L938.8 343.6L939.4 343.3L940 343L940.6 342.7L941.2 342.4L941.8 342L942.4 341.7L943 341.4L943.6 341.1L944.2 340.7L944.8 340.4L945.4 340.1L946 339.7L946.6 339.4L947.2 339.1L947.8 338.7L948.4 338.4L949 338L949.6 337.6L950.2 337.3L950.8 336.9L951.4 336.6L952 336.2L952.6 335.9L953.2 335.5L953.8 335.1L954.4 334.8L955 334.4L955.6 334L956.2 333.6L956.8 333.2L957.4 332.8L958 332.4L958.6 331.9L959.2 331.5L959.8 331L960.4 330.5L961 330L961.6 329.4L962.2 328.8L962.8 328.1L963.4 327.4L964 326.7L964.6 326L965.2 325.2L965.8 324.4L966.4 323.6L967 322.8L967.6 322L968.2 321.2L968.8 320.3L969.4 319.5L970 318.7L970.6 317.9L971.2 317L971.8 316.2L972.4 315.3L973 314.3L973.6 313.4L974.2 312.5L974.8 311.5L975.4 310.6L976 309.6L976.6 308.7L977.2 307.7L977.8 306.8L978.4 305.9L979 305L979.6 304.1L980.2 303.2L980.8 302.4L981.4 301.5L982 300.7L982.6 299.8L983.2 299L983.8 298.1L984.4 297.3L985 296.5L985.6 295.7L986.2 295L986.8 294.4L987.4 293.8L988 293.3L988.6 292.8L989.2 292.3L989.8 291.9L990.4 291.4L991 291L991.6 290.5L992.2 290.2L992.8 289.8L993.4 289.5L994 289.3L994.6 289.1L995.2 289L995.8 289L996.4 289L997 289L997.6 289L998.2 289L998.8 289M1049.8 359.6L1050.4 359.6L1051 359.6L1051.6 359.5L1052.2 359.5L1052.8 359.4L1053.4 359.4L1054 359.3L1054.6 359.2L1055.2 359.1L1055.8 359L1056.4 358.9L1057 358.7L1057.6 358.5L1058.2 358.3L1058.8 358L1059.4 357.7L1060 357.3L1060.6 357L1061.2 356.6L1061.8 356.2L1062.4 355.9L1063 355.5L1063.6 355.1L1064.2 354.7L1064.8 354.3L1065.4 353.9L1066 353.6L1066.6 353.3L1067.2 352.9L1067.8 352.6L1068.4 352.2L1069 351.8L1069.6 351.5L1070.2 351.1L1070.8 350.7L1071.4 350.3L1072 350L1072.6 349.6L1073.2 349.2L1073.8 348.8L1074.4 348.4L1075 348.1L1075.6 347.7L1076.2 347.3L1076.8 347L1077.4 346.6L1078 346.2L1078.6 345.9L1079.2 345.6L1079.8 345.2L1080.4 344.9L1081 344.6L1081.6 344.3L1082.2 344L1082.8 343.7L1083.4 343.5L1084 343.2L1084.6 343L1085.2 342.7L1085.8 342.5L1086.4 342.3L1087 342L1087.6 341.8L1088.2 341.6L1088.8 341.3L1089.4 341.1L1090 340.9L1090.6 340.6L1091.2 340.4L1091.8 340.1L1092.4 339.9L1093 339.6L1093.6 339.3L1094.2 339L1094.8 338.7L1095.4 338.4L1096 338.1L1096.6 337.7L1097.2 337.4L1097.8 337L1098.4 336.6L1099 336.2L1099.6 335.8L1100.2 335.4L1100.8 335L1101.4 334.5L1102 334L1102.6 333.5L1103.2 333L1103.8 332.5L1104.4 331.9L1105 331.4L1105.6 330.8L1106.2 330.2L1106.8 329.5L1107.4 328.9L1108 328.2L1108.6 327.4L1109.2 326.6L1109.8 325.7L1110.4 324.7L1111 323.6L1111.6 322.5L1112.2 321.3L1112.8 320.2L1113.4 319L1114 317.7L1114.6 316.5L1115.2 315.3L1115.8 314.1L1116.4 313L1117 311.8L1117.6 310.8L1118.2 309.7L1118.8 308.6L1119.4 307.4L1120 306.3L1120.6 305.2L1121.2 304.1L1121.8 303L1122.4 301.9L1123 300.8L1123.6 299.7L1124.2 298.6L1124.8 297.6L1125.4 296.6L1126 295.6L1126.6 294.6L1127.2 293.7L1127.8 292.8L1128.4 291.8L1129 290.9L1129.6 290L1130.2 289.1L1130.8 288.2L1131.4 287.4L1132 286.5L1132.6 285.7L1133.2 284.9L1133.8 284.1L1134.4 283.3L1135 282.5L1135.6 281.8L1136.2 281L1136.8 280.3L1137.4 279.7L1138 279L1138.6 278.4L1139.2 277.7L1139.8 277.1L1140.4 276.5L1141 275.9L1141.6 275.3L1142.2 274.8L1142.8 274.2L1143.4 273.7L1144 273.1L1144.6 272.6L1145.2 272.1L1145.8 271.6L1146.4 271.1L1147 270.7L1147.6 270.3L1148.2 269.8L1148.8 269.4L1149.4 269.1L1150 268.7L1150.6 268.3L1151.2 267.9L1151.8 267.5L1152.4 267.1L1153 266.8L1153.6 266.4L1154.2 266.1L1154.8 265.8L1155.4 265.5L1156 265.3L1156.6 265.1L1157.2 265L1157.8 265" stroke="#1e90ff" fill="none" stroke-width="1.3" stroke-linejoin="round" stroke-linecap="round"/>
<path d="M61.6 230.9L62.2 230.9L62.8 231L63.4 231.1L64 231.3L64.6 231.4L65.2 231.6L65.8 231.9L66.4 232.1L67 232.4L67.6 232.7L68.2 233L68.8 233.3L69.4 233.6L70 233.9L70.6 234.2L71.2 234.6L71.8 235.1L72.4 235.6L73 236.1L73.6 236.7L74.2 237.3L74.8 238L75.4 238.7L76 239.4L76.6 240.2L77.2 240.9L77.8 241.8L78.4 242.6L79 243.5L79.6 244.4L80.2 245.3L80.8 246.3L81.4 247.5L82 248.7L82.6 250L83.2 251.4L83.8 252.8L84.4 254.3L85 255.9L85.6 257.5L86.2 259.1L86.8 260.8L87.4 262.4L88 264.1L88.6 265.9L89.2 267.7L89.8 269.6L90.4 271.6L91 273.6L91.6 275.7L92.2 277.8L92.8 279.9L93.4 282.1L94 284.3L94.6 286.5L95.2 288.8L95.8 291.1L96.4 293.6L97 296L97.6 298.5L98.2 301.1L98.8 303.6L99.4 306.1L100 308.6L100.6 311.1L101.2 313.5L101.8 315.9L102.4 318.1L103 320.4L103.6 322.6L104.2 324.9L104.8 327.1L105.4 329.3L106 331.4L106.6 333.5L107.2 335.6L107.8 337.7L108.4 339.7L109 341.7L109.6 343.6L110.2 345.5L110.8 347.4L111.4 349.2L112 351L112.6 352.7L113.2 354.5L113.8 356.2L114.4 357.8L115 359.5L115.6 361.1L116.2 362.7L116.8 364.3L117.4 365.9L118 367.4L118.6 368.8L119.2 370.2L119.8 371.6L120.4 373L121 374.4L121.6 375.8L122.2 377.2L122.8 378.6L123.4 379.9L124 381.1L124.6 382.3L125.2 383.4L125.8 384.5L126.4 385.5L127 386.4L127.6 387.3L128.2 388.2L128.8 389L129.4 389.9L130 390.8L130.6 391.6L131.2 392.4L131.8 393.1L132.4 393.7L133 394.2L133.6 394.6L134.2 394.9L134.8 395L135.4 395M178 361.9L178.6 361.9L179.2 362L179.8 362.1L180.4 362.2L181 362.4L181.6 362.6L182.2 362.7L182.8 363L183.4 363.2L184 363.4L184.6 363.6L185.2 363.9L185.8 364.1L186.4 364.4L187 364.8L187.6 365.2L188.2 365.6L188.8 366.1L189.4 366.6L190 367.1L190.6 367.7L191.2 368.2L191.8 368.7L192.4 369.3L193 369.7L193.6 370.2L194.2 370.7L194.8 371.1L195.4 371.4L196 371.7L196.6 372.1L197.2 372.4L197.8 372.7L198.4 373L199 373.3L199.6 373.7L200.2 374L200.8 374.2L201.4 374.5L202 374.7L202.6 375L203.2 375.1L203.8 375.3L204.4 375.5L205 375.6L205.6 375.6L206.2 375.7L206.8 375.7L207.4 375.8L208 375.8L208.6 375.8L209.2 375.9L209.8 375.9L210.4 375.9L211 375.9L211.6 376L212.2 376L212.8 376L213.4 376L214 376L214.6 376.1L215.2 376.1L215.8 376.1L216.4 376.1L217 376.2L217.6 376.2L218.2 376.2L218.8 376.3L219.4 376.3L220 376.4L220.6 376.4L221.2 376.5L221.8 376.6L222.4 376.7L223 376.9L223.6 377.1L224.2 377.3L224.8 377.5L225.4 377.7L226 378L226.6 378.2L227.2 378.5L227.8 378.7L228.4 379L229 379.3L229.6 379.6L230.2 379.9L230.8 380.1L231.4 380.4L232 380.7L232.6 381.1L233.2 381.4L233.8 381.8L234.4 382.1L235 382.5L235.6 382.9L236.2 383.3L236.8 383.7L237.4 384.2L238 384.6L238.6 385L239.2 385.4L239.8 385.9L240.4 386.3L241 386.8L241.6 387.2L242.2 387.7L242.8 388.2L243.4 388.7L244 389.2L244.6 389.7L245.2 390.3L245.8 390.8L246.4 391.3L247 391.9L247.6 392.4L248.2 392.9L248.8 393.5L249.4 394L250 394.6L250.6 395.1L251.2 395.6L251.8 396.2L252.4 396.8L253 397.4L253.6 398L254.2 398.6L254.8 399.2L255.4 399.8L256 400.3L256.6 400.9L257.2 401.5L257.8 402L258.4 402.5L259 403L259.6 403.4L260.2 403.8L260.8 404.1L261.4 404.4L262 404.8L262.6 405.1L263.2 405.5L263.8 405.8L264.4 406.1L265 406.4L265.6 406.7L266.2 407L266.8 407.2L267.4 407.4L268 407.6L268.6 407.8L269.2 407.9L269.8 408L270.4 408L271 408M310.6 397.7L311.2 397.7L311.8 397.8L312.4 397.9L313 398.1L313.6 398.4L314.2 398.6L314.8 398.9L315.4 399.3L316 399.6L316.6 400L317.2 400.3L317.8 400.7L318.4 401.1L319 401.4L319.6 401.9L320.2 402.3L320.8 402.8L321.4 403.3L322 403.9L322.6 404.5L323.2 405L323.8 405.6L324.4 406.3L325 406.9L325.6 407.5L326.2 408.1L326.8 408.8L327.4 409.4L328 410.1L328.6 410.8L329.2 411.5L329.8 412.3L330.4 413L331 413.8L331.6 414.6L332.2 415.3L332.8 416.1L333.4 416.9L334 417.7L334.6 418.5L335.2 419.2L335.8 420L336.4 420.8L337 421.5L337.6 422.3L338.2 423.1L338.8 423.9L339.4 424.7L340 425.5L340.6 426.3L341.2 427.1L341.8 427.9L342.4 428.7L343 429.5L343.6 430.3L344.2 431.2L344.8 432L345.4 432.8L346 433.6L346.6 434.5L347.2 435.4L347.8 436.2L348.4 437.1L349 438L349.6 439L350.2 439.9L350.8 440.8L351.4 441.7L352 442.6L352.6 443.5L353.2 444.3L353.8 445.2L354.4 446L355 446.8L355.6 447.6L356.2 448.4L356.8 449.2L357.4 450L358 450.8L358.6 451.6L359.2 452.4L359.8 453.2L360.4 454L361 454.7L361.6 455.5L362.2 456.1L362.8 456.8L363.4 457.4L364 457.9L364.6 458.3L365.2 458.7L365.8 459L366.4 459.2L367 459.4L367.6 459.6L368.2 459.8L368.8 459.9L369.4 460.1L370 460.2L370.6 460.3L371.2 460.4L371.8 460.4M424.6 412.7L425.2 412.7L425.8 412.7L426.4 412.8L427 412.9L427.6 413L428.2 413.1L428.8 413.3L429.4 413.4L430 413.6L430.6 413.8L431.2 413.9L431.8 414.1L432.4 414.2L433 414.3L433.6 414.4L434.2 414.5L434.8 414.5L435.4 414.5M520 298.5L520.6 298.5L521.2 298.5L521.8 298.6L522.4 298.7L523 298.8L523.6 298.9L524.2 299L524.8 299.2L525.4 299.3L526 299.5L526.6 299.6L527.2 299.8L527.8 300L528.4 300.2L529 300.5L529.6 300.8L530.2 301.2L530.8 301.5L531.4 302L532 302.4L532.6 302.9L533.2 303.3L533.8 303.8L534.4 304.3L535 304.7L535.6 305.1L536.2 305.6L536.8 306.1L537.4 306.6L538 307.1L538.6 307.6L539.2 308.2L539.8 308.7L540.4 309.2L541 309.7L541.6 310.3L542.2 310.8L542.8 311.2L543.4 311.7L544 312.1L544.6 312.5L545.2 312.9L545.8 313.3L546.4 313.7L547 314.1L547.6 314.5L548.2 314.8L548.8 315.2L549.4 315.6L550 315.9L550.6 316.3L551.2 316.6L551.8 316.9L552.4 317.1L553 317.3L553.6 317.5L554.2 317.7L554.8 317.8L555.4 317.8L556 317.9L556.6 318L557.2 318L557.8 318.1L558.4 318.1L559 318.2L559.6 318.2L560.2 318.2L560.8 318.3L561.4 318.3L562 318.3L562.6 318.3M595.6 301.5L596.2 301.5L596.8 301.6L597.4 301.7L598 301.9L598.6 302.1L599.2 302.3L599.8 302.6L600.4 302.8L601 303.1L601.6 303.4L602.2 303.6L602.8 303.9L603.4 304.2L604 304.5L604.6 304.8L605.2 305.2L605.8 305.6L606.4 306L607 306.4L607.6 306.8L608.2 307.2L608.8 307.6L609.4 307.9L610 308.2L610.6 308.5L611.2 308.8L611.8 309.1L612.4 309.4L613 309.7L613.6 310L614.2 310.3L614.8 310.5L615.4 310.8L616 311L616.6 311.2L617.2 311.3L617.8 311.5L618.4 311.6L619 311.7L619.6 311.8L620.2 311.8L620.8 311.9L621.4 312L622 312.1L622.6 312.1L623.2 312.2L623.8 312.2L624.4 312.3L625 312.3L625.6 312.3M785.2 115L785.8 115.1L786.4 115.2L787 115.4L787.6 115.6L788.2 115.9L788.8 116.2L789.4 116.6L790 116.9L790.6 117.3L791.2 117.8L791.8 118.2L792.4 118.6L793 119.1L793.6 119.6L794.2 120.2L794.8 120.8L795.4 121.5L796 122.3L796.6 123.1L797.2 123.9L797.8 124.8L798.4 125.6L799 126.4L799.6 127.2L800.2 127.9L800.8 128.7L801.4 129.4L802 130.1L802.6 130.8L803.2 131.6L803.8 132.3L804.4 133L805 133.8L805.6 134.5L806.2 135.3L806.8 136.1L807.4 136.9L808 137.7L808.6 138.6L809.2 139.5L809.8 140.4L810.4 141.4L811 142.4L811.6 143.5L812.2 144.5L812.8 145.5L813.4 146.5L814 147.5L814.6 148.4L815.2 149.3L815.8 150.2L816.4 151L817 151.8L817.6 152.6L818.2 153.4L818.8 154.1L819.4 154.9L820 155.7L820.6 156.5L821.2 157.3L821.8 158.2L822.4 159.1L823 160L823.6 161L824.2 162L824.8 163L825.4 164.1L826 165.2L826.6 166.3L827.2 167.5L827.8 168.6L828.4 169.8L829 171L829.6 172.2L830.2 173.4L830.8 174.6L831.4 175.8L832 177L832.6 178.2L833.2 179.5L833.8 180.7L834.4 182L835 183.2L835.6 184.5L836.2 185.9L836.8 187.2L837.4 188.6L838 190L838.6 191.4L839.2 192.9L839.8 194.5L840.4 196L841 197.6L841.6 199.2L842.2 200.9L842.8 202.5L843.4 204.2L844 205.9L844.6 207.5L845.2 209.2L845.8 210.8L846.4 212.5L847 214.1L847.6 215.8L848.2 217.5L848.8 219.2L849.4 220.9L850 222.6L850.6 224.3L851.2 226.1L851.8 227.8L852.4 229.6L853 231.3L853.6 233.1L854.2 234.8L854.8 236.6L855.4 238.4L856 240.2L856.6 242L857.2 243.8L857.8 245.6L858.4 247.4L859 249.3L859.6 251.1L860.2 253L860.8 254.8L861.4 256.7L862 258.5L862.6 260.4L863.2 262.2L863.8 264.1L864.4 265.9L865 267.7L865.6 269.5L866.2 271.2L866.8 273L867.4 274.7L868 276.4L868.6 278.1L869.2 279.8L869.8 281.5L870.4 283.2L871 285L871.6 286.7L872.2 288.5L872.8 290.3L873.4 292.1L874 294L874.6 295.9L875.2 297.9L875.8 299.8L876.4 301.8L877 303.7L877.6 305.6L878.2 307.5L878.8 309.4L879.4 311.2L880 312.9L880.6 314.6L881.2 316.3L881.8 318L882.4 319.7L883 321.3L883.6 322.9L884.2 324.5L884.8 326.1L885.4 327.6L886 329.1L886.6 330.5L887.2 331.9L887.8 333.2L888.4 334.5L889 335.8L889.6 337.1L890.2 338.4L890.8 339.6L891.4 340.8L892 342L892.6 343.1L893.2 344.1L893.8 345.1L894.4 345.9L895 346.7L895.6 347.4L896.2 348.1L896.8 348.9L897.4 349.6L898 350.2L898.6 350.9L899.2 351.5L899.8 352L900.4 352.5L901 352.9L901.6 353.2L902.2 353.4L902.8 353.5L903.4 353.6L904 353.6L904.6 353.7L905.2 353.7L905.8 353.8L906.4 353.8L907 353.8L907.6 353.9L908.2 353.9L908.8 353.9L909.4 353.9L910 354L910.6 354L911.2 354L911.8 354L912.4 354M998.8 289L999.4 289L1000 289.2L1000.6 289.4L1001.2 289.8L1001.8 290.3L1002.4 290.8L1003 291.3L1003.6 291.9L1004.2 292.6L1004.8 293.2L1005.4 293.8L1006 294.4L1006.6 295.1L1007.2 295.8L1007.8 296.6L1008.4 297.5L1009 298.4L1009.6 299.3L1010.2 300.3L1010.8 301.3L1011.4 302.3L1012 303.3L1012.6 304.3L1013.2 305.3L1013.8 306.4L1014.4 307.5L1015 308.6L1015.6 309.8L1016.2 311L1016.8 312.2L1017.4 313.4L1018 314.6L1018.6 315.9L1019.2 317.1L1019.8 318.4L1020.4 319.6L1021 320.8L1021.6 322.1L1022.2 323.3L1022.8 324.6L1023.4 325.9L1024 327.2L1024.6 328.5L1025.2 329.8L1025.8 331.1L1026.4 332.3L1027 333.5L1027.6 334.7L1028.2 335.8L1028.8 336.9L1029.4 337.9L1030 339L1030.6 340L1031.2 341.1L1031.8 342.1L1032.4 343L1033 344L1033.6 344.9L1034.2 345.8L1034.8 346.7L1035.4 347.6L1036 348.4L1036.6 349.3L1037.2 350.1L1037.8 350.9L1038.4 351.8L1039 352.6L1039.6 353.4L1040.2 354.1L1040.8 354.8L1041.4 355.5L1042 356L1042.6 356.5L1043.2 356.9L1043.8 357.3L1044.4 357.6L1045 358L1045.6 358.3L1046.2 358.6L1046.8 358.8L1047.4 359.1L1048 359.3L1048.6 359.4L1049.2 359.5L1049.8 359.6M1157.8 265L1158.4 265L1159 265.1L1159.6 265.3L1160.2 265.6L1160.8 265.8L1161.4 266.2L1162 266.5L1162.6 266.9L1163.2 267.3L1163.8 267.8L1164.4 268.2L1165 268.6L1165.6 269.1L1166.2 269.5L1166.8 269.9L1167.4 270.3L1168 270.8L1168.6 271.3L1169.2 271.8L1169.8 272.4L1170.4 272.9L1171 273.5L1171.6 274L1172.2 274.6L1172.8 275.2L1173.4 275.7L1174 276.3L1174.6 276.8L1175.2 277.3L1175.8 277.8L1176.4 278.3L1177 278.8L1177.6 279.3L1178.2 279.7L1178.8 280.2L1179.4 280.6L1180 281.1L1180.6 281.5L1181.2 282L1181.8 282.4L1182.4 282.8L1183 283.2L1183.6 283.6L1184.2 284L1184.8 284.4L1185.4 284.8L1186 285.2L1186.6 285.5L1187.2 285.8" stroke="#ff1493" fill="none" stroke-width="1.3" stroke-linejoin="round" stroke-linecap="round"/>
<path d="M7.6 631.4V570M10.1 631.4V570.6M12.7 631.4V571.1M15.2 631.4V571.4M17.8 631.4V571.5M20.3 631.4V571.5M22.9 631.4V571.5M25.4 631.4V571.5M27.9 631.4V571.5M30.5 631.4V571.5M33 631.4V571.1M35.6 631.4V570.4M38.1 631.4V569.5M40.6 631.4V568.8M43.2 631.4V568.2M45.7 631.4V567.6M48.3 631.4V567M50.8 631.4V566.2M53.4 631.4V565.3M55.9 631.4V564.2M58.4 631.4V563.2M61 631.4V562.4M63.5 631.4V561.5M66.1 631.4V560.8M68.6 631.4V560.2M71.1 631.4V559.9M73.7 631.4V559.7M76.2 631.4V559.5M78.8 631.4V559.4M81.3 631.4V559.4M83.9 631.4V559.6M86.4 631.4V559.8M88.9 631.4V560.2M91.5 631.4V561M94 631.4V562.2M96.6 631.4V563.7M99.1 631.4V565.2M101.7 631.4V566.7M104.2 631.4V568.4M106.7 631.4V570.2M109.3 631.4V572.1M111.8 631.4V574.2M114.4 631.4V576.4M116.9 631.4V578.8M119.4 631.4V581M122 631.4V583.2M124.5 631.4V585.3M127.1 631.4V587.4M129.6 631.4V589.4M132.2 631.4V591.4M134.7 631.4V593.4M137.2 631.4V595.3M139.8 631.4V596.9M142.3 631.4V598.2M144.9 631.4V599.4M147.4 631.4V600.3M150 631.4V600.9M152.5 631.4V601.2M155 631.4V601.4M157.6 631.4V601.5M160.1 631.4V601.6M162.7 631.4V601.6M165.2 631.4V601.5M167.7 631.4V601.3M170.3 631.4V601.2M172.8 631.4V601M175.4 631.4V600.8M177.9 631.4V600.6M180.5 631.4V600.3M183 631.4V600M185.5 631.4V599.7M188.1 631.4V599.4M190.6 631.4V599.3M193.2 631.4V599.2M195.7 631.4V599.2M198.2 631.4V599.1M200.8 631.4V599.1M203.3 631.4V599M205.9 631.4V599M208.4 631.4V599M211 631.4V599M213.5 631.4V599M216 631.4V599.2M218.6 631.4V599.3M221.1 631.4V599.5M223.7 631.4V599.7M226.2 631.4V599.8M228.8 631.4V600M231.3 631.4V600.2M233.8 631.4V600.4M236.4 631.4V600.6M238.9 631.4V600.8M241.5 631.4V601.1M244 631.4V601.4M246.5 631.4V601.7M249.1 631.4V602.1M251.6 631.4V602.6M254.2 631.4V603M256.7 631.4V603.5M259.3 631.4V604M261.8 631.4V604.6M264.3 631.4V605.2M266.9 631.4V605.8M269.4 631.4V606.3M272 631.4V606.8M274.5 631.4V607.3M277.1 631.4V607.8M279.6 631.4V608.2M282.1 631.4V608.5M284.7 631.4V608.7M287.2 631.4V608.8M289.8 631.4V608.9M292.3 631.4V609M294.8 631.4V609M297.4 631.4V608.9M299.9 631.4V608.7M302.5 631.4V608.5M305 631.4V608.4M307.6 631.4V608.4M310.1 631.4V608.4M312.6 631.4V608.4M315.2 631.4V608.4M317.7 631.4V608.4M320.3 631.4V608.4M322.8 631.4V608.5M325.4 631.4V608.6M327.9 631.4V608.8M330.4 631.4V609.1M333 631.4V609.4M335.5 631.4V609.7M338.1 631.4V610.1M340.6 631.4V610.8M343.1 631.4V611.5M345.7 631.4V612.3M348.2 631.4V613.1M350.8 631.4V613.9M353.3 631.4V614.9M355.9 631.4V615.9M358.4 631.4V616.8M360.9 631.4V617.7M363.5 631.4V618.7M366 631.4V619.6M368.6 631.4V620.5M371.1 631.4V621.2M373.6 631.4V621.8M376.2 631.4V622.2M378.7 631.4V622.6M381.3 631.4V622.9M383.8 631.4V622.9M386.4 631.4V622.9M388.9 631.4V622.9M391.4 631.4V622.9M394 631.4V622.9M396.5 631.4V622.6M399.1 631.4V622.3M401.6 631.4V621.8M404.2 631.4V621.4M406.7 631.4V620.8M409.2 631.4V620.1M411.8 631.4V619.4M414.3 631.4V618.7M416.9 631.4V618M419.4 631.4V617.4M421.9 631.4V616.7M424.5 631.4V616.1M427 631.4V615.6M429.6 631.4V615.1M432.1 631.4V614.6M434.7 631.4V614.3M437.2 631.4V613.9M439.7 631.4V613.6M442.3 631.4V613.3M444.8 631.4V613.1M447.4 631.4V612.9M449.9 631.4V612.7M452.4 631.4V612.5M455 631.4V612.4M457.5 631.4V612.2M460.1 631.4V612M462.6 631.4V611.8M465.2 631.4V611.5M467.7 631.4V611.2M470.2 631.4V610.9M472.8 631.4V610.4M475.3 631.4V609.9M477.9 631.4V609.2M480.4 631.4V608.5M483 631.4V607.6M485.5 631.4V606.6M488 631.4V605.6M490.6 631.4V604.4M493.1 631.4V603M495.7 631.4V601.6M498.2 631.4V600.2M500.7 631.4V598.7M503.3 631.4V597M505.8 631.4V595.4M508.4 631.4V593.7M510.9 631.4V592.2M513.5 631.4V590.6M516 631.4V589.1M518.5 631.4V587.6M521.1 631.4V586.2M523.6 631.4V585M526.2 631.4V583.9M528.7 631.4V582.9M531.3 631.4V582M533.8 631.4V581.3M536.3 631.4V580.7M538.9 631.4V580.2M541.4 631.4V579.9M544 631.4V579.8M546.5 631.4V579.9M549 631.4V580.2M551.6 631.4V580.4M554.1 631.4V580.7M556.7 631.4V580.8M559.2 631.4V581M561.8 631.4V581.1M564.3 631.4V581.3M566.8 631.4V581.4M569.4 631.4V581.5M571.9 631.4V581.5M574.5 631.4V581.6M577 631.4V581.6M579.5 631.4V581.6M582.1 631.4V581.6M584.6 631.4V581.3M587.2 631.4V581M589.7 631.4V580.6M592.3 631.4V580.3M594.8 631.4V580.2M597.3 631.4V580M599.9 631.4V579.9M602.4 631.4V579.8M605 631.4V579.8M607.5 631.4V579.8M610.1 631.4V579.8M612.6 631.4V579.8M615.1 631.4V579.8M617.7 631.4V579.8M620.2 631.4V579.9M622.8 631.4V580.2M625.3 631.4V580.5M627.8 631.4V580.7M630.4 631.4V580.8M632.9 631.4V580.8M635.5 631.4V580.7M638 631.4V580.6M640.6 631.4V580.4M643.1 631.4V580.3M645.6 631.4V580M648.2 631.4V579.6M650.7 631.4V579.1M653.3 631.4V578.6M655.8 631.4V578.1M658.4 631.4V577.5M660.9 631.4V576.9M663.4 631.4V576.2M666 631.4V575.6M668.5 631.4V575.1M671.1 631.4V574.6M673.6 631.4V574.2M676.1 631.4V573.8M678.7 631.4V573.4M681.2 631.4V573M683.8 631.4V572.6M686.3 631.4V572.2M688.9 631.4V571.7M691.4 631.4V571.3M693.9 631.4V570.8M696.5 631.4V570.3M699 631.4V569.8M701.6 631.4V569.3M704.1 631.4V568.8M706.6 631.4V568.2M709.2 631.4V567.7M711.7 631.4V567.2M714.3 631.4V566.6M716.8 631.4V566M719.4 631.4V565.3M721.9 631.4V564.6M724.4 631.4V563.9M727 631.4V563.1M729.5 631.4V562.3M732.1 631.4V561.5M734.6 631.4V560.7M737.2 631.4V559.9M739.7 631.4V559M742.2 631.4V558M744.8 631.4V557M747.3 631.4V555.8M749.9 631.4V554.5M752.4 631.4V553.2M754.9 631.4V551.8M757.5 631.4V550.2M760 631.4V548.4M762.6 631.4V546.5M765.1 631.4V544.6M767.7 631.4V542.8M770.2 631.4V541.1M772.7 631.4V539.5M775.3 631.4V537.8M777.8 631.4V536.2M780.4 631.4V534.7M782.9 631.4V533.2M785.5 631.4V531.6M788 631.4V530.1M790.5 631.4V528.9M793.1 631.4V528M795.6 631.4V527.3M798.2 631.4V526.8M800.7 631.4V526.3M803.2 631.4V526M805.8 631.4V525.8M808.3 631.4V525.7M810.9 631.4V525.6M813.4 631.4V525.7M816 631.4V526M818.5 631.4V526.5M821 631.4V527.1M823.6 631.4V527.8M826.1 631.4V528.7M828.7 631.4V529.8M831.2 631.4V530.9M833.8 631.4V532.1M836.3 631.4V533.4M838.8 631.4V534.7M841.4 631.4V536.2M843.9 631.4V537.7M846.5 631.4V539.3M849 631.4V540.9M851.5 631.4V542.7M854.1 631.4V544.5M856.6 631.4V546.4M859.2 631.4V548.3M861.7 631.4V550.1M864.3 631.4V552M866.8 631.4V553.9M869.3 631.4V555.9M871.9 631.4V557.9M874.4 631.4V560M877 631.4V562.2M879.5 631.4V564.3M882 631.4V566.4M884.6 631.4V568.6M887.1 631.4V570.8M889.7 631.4V572.9M892.2 631.4V575M894.8 631.4V576.9M897.3 631.4V578.7M899.8 631.4V580.4M902.4 631.4V581.9M904.9 631.4V583.4M907.5 631.4V584.8M910 631.4V586.2M912.6 631.4V587.6M915.1 631.4V588.7M917.6 631.4V589.5M920.2 631.4V590.3M922.7 631.4V591M925.3 631.4V591.4M927.8 631.4V591.7M930.3 631.4V591.9M932.9 631.4V592.1M935.4 631.4V592.2M938 631.4V592.3M940.5 631.4V592.3M943.1 631.4V592.1M945.6 631.4V592M948.1 631.4V591.7M950.7 631.4V591.5M953.2 631.4V591.3M955.8 631.4V591.1M958.3 631.4V590.9M960.8 631.4V590.6M963.4 631.4V590.3M965.9 631.4V590M968.5 631.4V589.5M971 631.4V589M973.6 631.4V588.4M976.1 631.4V587.8M978.6 631.4V587.2M981.2 631.4V586.4M983.7 631.4V585.6M986.3 631.4V584.8M988.8 631.4V584M991.4 631.4V583.2M993.9 631.4V582.4M996.4 631.4V581.6M999 631.4V580.9M1001.5 631.4V580.3M1004.1 631.4V579.6M1006.6 631.4V579.1M1009.1 631.4V578.6M1011.7 631.4V578.5M1014.2 631.4V578.6M1016.8 631.4V578.7M1019.3 631.4V578.8M1021.9 631.4V579M1024.4 631.4V579.4M1026.9 631.4V579.9M1029.5 631.4V580.5M1032 631.4V581.2M1034.6 631.4V581.9M1037.1 631.4V582.8M1039.7 631.4V583.8M1042.2 631.4V584.8M1044.7 631.4V585.8M1047.3 631.4V586.9M1049.8 631.4V587.9M1052.4 631.4V588.8M1054.9 631.4V589.6M1057.4 631.4V590.4M1060 631.4V591.1M1062.5 631.4V591.7M1065.1 631.4V592.3M1067.6 631.4V592.8M1070.2 631.4V593.2M1072.7 631.4V593.4M1075.2 631.4V593.5M1077.8 631.4V593.5M1080.3 631.4V593.6M1082.9 631.4V593.6M1085.4 631.4V593.5M1087.9 631.4V593.3M1090.5 631.4V593.1M1093 631.4V592.9M1095.6 631.4V592.6M1098.1 631.4V592.3M1100.7 631.4V591.9M1103.2 631.4V591.5M1105.7 631.4V591M1108.3 631.4V590.4M1110.8 631.4V589.7M1113.4 631.4V588.9M1115.9 631.4V588.1M1118.5 631.4V587.2M1121 631.4V586.3M1123.5 631.4V585.4M1126.1 631.4V584.4M1128.6 631.4V583.5M1131.2 631.4V582.5M1133.7 631.4V581.6M1136.2 631.4V580.7M1138.8 631.4V579.8M1141.3 631.4V578.9M1143.9 631.4V578M1146.4 631.4V577M1149 631.4V576.1M1151.5 631.4V575.1M1154 631.4V574.3M1156.6 631.4V573.6M1159.1 631.4V572.9M1161.7 631.4V572.3M1164.2 631.4V571.8M1166.8 631.4V571.5M1169.3 631.4V571.3M1171.8 631.4V571.2M1174.4 631.4V571M1176.9 631.4V571M1179.5 631.4V571M1182 631.4V571M1184.5 631.4V571M1187.1 631.4V571" stroke="#8b008b" stroke-width="1.86" fill="none"/>
<path d="M20.3 571.5V570.4M22.9 571.5V568.9M25.4 571.5V567.5M27.9 571.5V565.9M30.5 571.5V564.4M33 571.1V562.9M35.6 570.4V561.8M38.1 569.5V560.9M40.6 568.8V560.1M43.2 568.2V559.4M45.7 567.6V558.8M48.3 567V558.4M50.8 566.2V557.9M53.4 565.3V557.6M55.9 564.2V557.3M58.4 563.2V557.1M61 562.4V557M63.5 561.5V557.1M66.1 560.8V557.4M68.6 560.2V557.8M71.1 559.9V558.2M73.7 559.7V558.9M157.6 601.5V600.9M160.1 601.6V600M162.7 601.6V599.1M165.2 601.5V598.4M167.7 601.3V597.8M170.3 601.2V597.4M172.8 601V597M175.4 600.8V596.6M177.9 600.6V596.3M180.5 600.3V596.4M183 600V596.7M185.5 599.7V597.3M188.1 599.4V597.8M190.6 599.3V598.3M297.4 608.9V608.3M299.9 608.7V607.7M302.5 608.5V607.4M305 608.4V607.4M307.6 608.4V607.4M310.1 608.4V607.5M312.6 608.4V607.8M386.4 622.9V621.7M388.9 622.9V620.4M391.4 622.9V619M394 622.9V617.9M396.5 622.6V616.9M399.1 622.3V615.9M401.6 621.8V615M404.2 621.4V614.2M406.7 620.8V613.4M409.2 620.1V612.7M411.8 619.4V612.2M414.3 618.7V611.8M416.9 618V611.6M419.4 617.4V611.4M421.9 616.7V611.5M424.5 616.1V611.7M427 615.6V612M429.6 615.1V612.3M432.1 614.6V612.5M434.7 614.3V612.6M437.2 613.9V612.8M439.7 613.6V612.9M442.3 613.3V612.9M449.9 612.7V612.4M452.4 612.5V612M455 612.4V611.5M457.5 612.2V610.7M460.1 612V609.7M462.6 611.8V608.6M465.2 611.5V607.4M467.7 611.2V606M470.2 610.9V604.5M472.8 610.4V602.9M475.3 609.9V601.2M477.9 609.2V599.3M480.4 608.5V597.3M483 607.6V595.3M485.5 606.6V593.4M488 605.6V591.4M490.6 604.4V589.5M493.1 603V587.7M495.7 601.6V585.9M498.2 600.2V584.2M500.7 598.7V582.6M503.3 597V581.4M505.8 595.4V580.4M508.4 593.7V579.5M510.9 592.2V578.7M513.5 590.6V578.2M516 589.1V577.8M518.5 587.6V577.5M521.1 586.2V577.3M523.6 585V577.4M526.2 583.9V577.7M528.7 582.9V578.1M531.3 582V578.6M533.8 581.3V579.1M536.3 580.7V579.7M577 581.6V580.8M579.5 581.6V580.1M582.1 581.6V579.5M584.6 581.3V578.9M587.2 581V578.3M589.7 580.6V577.9M592.3 580.3V577.8M594.8 580.2V578M597.3 580V578.3M599.9 579.9V578.6M602.4 579.8V579M605 579.8V579.4M635.5 580.7V580.2M638 580.6V579.1M640.6 580.4V577.9M643.1 580.3V576.6M645.6 580V575.4M648.2 579.6V574.3M650.7 579.1V573.1M653.3 578.6V572.3M655.8 578.1V571.9M658.4 577.5V571.8M660.9 576.9V571.7M663.4 576.2V571.7M666 575.6V571.6M668.5 575.1V571.5M671.1 574.6V571.3M673.6 574.2V571.2M676.1 573.8V571M678.7 573.4V570.8M681.2 573V570.6M683.8 572.6V570.2M686.3 572.2V569.7M688.9 571.7V569.1M691.4 571.3V568.4M693.9 570.8V567.7M696.5 570.3V566.8M699 569.8V565.7M701.6 569.3V564.6M704.1 568.8V563.5M706.6 568.2V562.6M709.2 567.7V561.7M711.7 567.2V560.9M714.3 566.6V560.1M716.8 566V559.2M719.4 565.3V558.4M721.9 564.6V557.6M724.4 563.9V556.8M727 563.1V555.9M729.5 562.3V555M732.1 561.5V554.1M734.6 560.7V553.1M737.2 559.9V551.9M739.7 559V550.4M742.2 558V548.8M744.8 557V546.9M747.3 555.8V544.9M749.9 554.5V542.3M752.4 553.2V539.6M754.9 551.8V537M757.5 550.2V534.6M760 548.4V532M762.6 546.5V529.7M765.1 544.6V527.9M767.7 542.8V526.6M770.2 541.1V525.5M772.7 539.5V524.6M775.3 537.8V523.9M777.8 536.2V523.3M780.4 534.7V522.7M782.9 533.2V522.2M785.5 531.6V521.9M788 530.1V521.8M790.5 528.9V522.3M793.1 528V523M795.6 527.3V523.8M798.2 526.8V524.6M800.7 526.3V525.7M935.4 592.2V591.4M938 592.3V590.9M940.5 592.3V590.5M943.1 592.1V590.1M945.6 592V589.8M948.1 591.7V589.4M950.7 591.5V589.1M953.2 591.3V588.6M955.8 591.1V588.2M958.3 590.9V587.7M960.8 590.6V587.2M963.4 590.3V586.6M965.9 590V585.8M968.5 589.5V584.7M971 589V583.6M973.6 588.4V582.4M976.1 587.8V581.3M978.6 587.2V580M981.2 586.4V578.9M983.7 585.6V577.8M986.3 584.8V576.9M988.8 584V576M991.4 583.2V575.2M993.9 582.4V574.7M996.4 581.6V574.3M999 580.9V574.2M1001.5 580.3V574.6M1004.1 579.6V575.6M1006.6 579.1V576.6M1009.1 578.6V577.7M1075.2 593.5V592.6M1077.8 593.5V592.1M1080.3 593.6V591.7M1082.9 593.6V591.3M1085.4 593.5V591M1087.9 593.3V590.6M1090.5 593.1V590.3M1093 592.9V590M1095.6 592.6V589.5M1098.1 592.3V589.1M1100.7 591.9V588.6M1103.2 591.5V588M1105.7 591V587.2M1108.3 590.4V586M1110.8 589.7V584.5M1113.4 588.9V583.1M1115.9 588.1V581.8M1118.5 587.2V580.5M1121 586.3V579.2M1123.5 585.4V578M1126.1 584.4V577M1128.6 583.5V576M1131.2 582.5V575.1M1133.7 581.6V574.2M1136.2 580.7V573.2M1138.8 579.8V572.2M1141.3 578.9V571.2M1143.9 578V570.3M1146.4 577V569.6M1149 576.1V568.9M1151.5 575.1V568.3M1154 574.3V567.8M1156.6 573.6V567.2M1159.1 572.9V567.1M1161.7 572.3V567.5M1164.2 571.8V568.2M1166.8 571.5V569M1169.3 571.3V569.7M1171.8 571.2V570.6" stroke="#483d8b" stroke-width="1.86" fill="none"/>
<polyline points="7,569.9 7.6,570 8.2,570.2 8.8,570.3 9.4,570.4 10,570.5 10.6,570.7 11.2,570.8 11.8,570.9 12.4,571 13,571.1 13.6,571.2 14.2,571.3 14.8,571.3 15.4,571.4 16,571.5 16.6,571.5 17.2,571.5 17.8,571.5 18.4,571.5 19,571.5 19.6,571.5 20.2,571.5 20.8,571.5 21.4,571.5 22,571.5 22.6,571.5 23.2,571.5 23.8,571.5 24.4,571.5 25,571.5 25.6,571.5 26.2,571.5 26.8,571.5 27.4,571.5 28,571.5 28.6,571.5 29.2,571.5 29.8,571.5 30.4,571.5 31,571.5 31.6,571.4 32.2,571.3 32.8,571.2 33.4,571 34,570.9 34.6,570.7 35.2,570.5 35.8,570.3 36.4,570.1 37,569.9 37.6,569.7 38.2,569.5 38.8,569.3 39.4,569.2 40,569 40.6,568.9 41.2,568.7 41.8,568.6 42.4,568.4 43,568.3 43.6,568.1 44.2,568 44.8,567.9 45.4,567.7 46,567.6 46.6,567.4 47.2,567.3 47.8,567.1 48.4,567 49,566.8 49.6,566.6 50.2,566.4 50.8,566.2 51.4,566 52,565.8 52.6,565.6 53.2,565.4 53.8,565.1 54.4,564.9 55,564.6 55.6,564.4 56.2,564.1 56.8,563.9 57.4,563.6 58,563.4 58.6,563.2 59.2,563 59.8,562.8 60.4,562.6 61,562.4 61.6,562.2 62.2,562 62.8,561.8 63.4,561.6 64,561.4 64.6,561.2 65.2,561 65.8,560.8 66.4,560.7 67,560.5 67.6,560.4 68.2,560.3 68.8,560.2 69.4,560.1 70,560 70.6,559.9 71.2,559.9 71.8,559.8 72.4,559.8 73,559.7 73.6,559.7 74.2,559.6 74.8,559.6 75.4,559.6 76,559.5 76.6,559.5 77.2,559.5 77.8,559.4 78.4,559.4 79,559.4 79.6,559.4 80.2,559.4 80.8,559.4 81.4,559.4 82,559.5 82.6,559.5 83.2,559.5 83.8,559.6 84.4,559.6 85,559.7 85.6,559.7 86.2,559.8 86.8,559.9 87.4,560 88,560 88.6,560.1 89.2,560.3 89.8,560.4 90.4,560.6 91,560.8 91.6,561.1 92.2,561.3 92.8,561.6 93.4,561.9 94,562.2 94.6,562.6 95.2,562.9 95.8,563.2 96.4,563.6 97,563.9 97.6,564.3 98.2,564.7 98.8,565 99.4,565.4 100,565.7 100.6,566 101.2,566.4 101.8,566.8 102.4,567.2 103,567.6 103.6,568 104.2,568.4 104.8,568.8 105.4,569.2 106,569.7 106.6,570.1 107.2,570.5 107.8,571 108.4,571.5 109,571.9 109.6,572.4 110.2,572.9 110.8,573.3 111.4,573.8 112,574.3 112.6,574.9 113.2,575.4 113.8,575.9 114.4,576.5 115,577 115.6,577.6 116.2,578.1 116.8,578.7 117.4,579.2 118,579.7 118.6,580.3 119.2,580.8 119.8,581.3 120.4,581.8 121,582.3 121.6,582.9 122.2,583.4 122.8,583.9 123.4,584.4 124,584.9 124.6,585.4 125.2,585.9 125.8,586.3 126.4,586.8 127,587.3 127.6,587.8 128.2,588.3 128.8,588.8 129.4,589.2 130,589.7 130.6,590.2 131.2,590.6 131.8,591.1 132.4,591.6 133,592.1 133.6,592.5 134.2,593 134.8,593.5 135.4,594 136,594.4 136.6,594.9 137.2,595.3 137.8,595.7 138.4,596.1 139,596.5 139.6,596.8 140.2,597.1 140.8,597.4 141.4,597.7 142,598 142.6,598.3 143.2,598.6 143.8,598.9 144.4,599.2 145,599.4 145.6,599.7 146.2,599.9 146.8,600.1 147.4,600.3 148,600.5 148.6,600.7 149.2,600.8 149.8,600.9 150.4,601 151,601.1 151.6,601.1 152.2,601.2 152.8,601.2 153.4,601.3 154,601.3 154.6,601.4 155.2,601.4 155.8,601.4 156.4,601.5 157,601.5 157.6,601.5 158.2,601.6 158.8,601.6 159.4,601.6 160,601.6 160.6,601.6 161.2,601.6 161.8,601.6 162.4,601.6 163,601.6 163.6,601.5 164.2,601.5 164.8,601.5 165.4,601.5 166,601.4 166.6,601.4 167.2,601.4 167.8,601.3 168.4,601.3 169,601.3 169.6,601.2 170.2,601.2 170.8,601.1 171.4,601.1 172,601.1 172.6,601 173.2,601 173.8,600.9 174.4,600.9 175,600.8 175.6,600.8 176.2,600.8 176.8,600.7 177.4,600.6 178,600.6 178.6,600.5 179.2,600.5 179.8,600.4 180.4,600.3 181,600.2 181.6,600.2 182.2,600.1 182.8,600 183.4,599.9 184,599.9 184.6,599.8 185.2,599.7 185.8,599.6 186.4,599.6 187,599.5 187.6,599.5 188.2,599.4 188.8,599.4 189.4,599.3 190,599.3 190.6,599.3 191.2,599.3 191.8,599.3 192.4,599.3 193,599.2 193.6,599.2 194.2,599.2 194.8,599.2 195.4,599.2 196,599.2 196.6,599.2 197.2,599.1 197.8,599.1 198.4,599.1 199,599.1 199.6,599.1 200.2,599.1 200.8,599.1 201.4,599.1 202,599.1 202.6,599.1 203.2,599 203.8,599 204.4,599 205,599 205.6,599 206.2,599 206.8,599 207.4,599 208,599 208.6,599 209.2,599 209.8,599 210.4,599 211,599 211.6,599 212.2,599 212.8,599 213.4,599 214,599.1 214.6,599.1 215.2,599.1 215.8,599.1 216.4,599.2 217,599.2 217.6,599.2 218.2,599.3 218.8,599.3 219.4,599.4 220,599.4 220.6,599.4 221.2,599.5 221.8,599.5 222.4,599.6 223,599.6 223.6,599.7 224.2,599.7 224.8,599.7 225.4,599.8 226,599.8 226.6,599.9 227.2,599.9 227.8,599.9 228.4,600 229,600 229.6,600.1 230.2,600.1 230.8,600.1 231.4,600.2 232,600.2 232.6,600.3 233.2,600.3 233.8,600.4 234.4,600.4 235,600.5 235.6,600.5 236.2,600.6 236.8,600.6 237.4,600.7 238,600.7 238.6,600.8 239.2,600.8 239.8,600.9 240.4,601 241,601 241.6,601.1 242.2,601.2 242.8,601.2 243.4,601.3 244,601.4 244.6,601.5 245.2,601.5 245.8,601.6 246.4,601.7 247,601.8 247.6,601.9 248.2,602 248.8,602.1 249.4,602.2 250,602.3 250.6,602.4 251.2,602.5 251.8,602.6 252.4,602.7 253,602.8 253.6,602.9 254.2,603 254.8,603.1 255.4,603.2 256,603.3 256.6,603.4 257.2,603.6 257.8,603.7 258.4,603.8 259,603.9 259.6,604.1 260.2,604.2 260.8,604.3 261.4,604.5 262,604.6 262.6,604.8 263.2,604.9 263.8,605 264.4,605.2 265,605.3 265.6,605.5 266.2,605.6 266.8,605.7 267.4,605.9 268,606 268.6,606.1 269.2,606.3 269.8,606.4 270.4,606.5 271,606.6 271.6,606.7 272.2,606.8 272.8,607 273.4,607.1 274,607.2 274.6,607.3 275.2,607.4 275.8,607.5 276.4,607.7 277,607.8 277.6,607.9 278.2,608 278.8,608.1 279.4,608.2 280,608.3 280.6,608.3 281.2,608.4 281.8,608.5 282.4,608.5 283,608.6 283.6,608.6 284.2,608.6 284.8,608.7 285.4,608.7 286,608.7 286.6,608.8 287.2,608.8 287.8,608.8 288.4,608.8 289,608.9 289.6,608.9 290.2,608.9 290.8,608.9 291.4,609 292,609 292.6,609 293.2,609 293.8,609 294.4,609 295,609 295.6,609 296.2,609 296.8,608.9 297.4,608.9 298,608.9 298.6,608.8 299.2,608.8 299.8,608.7 300.4,608.7 301,608.6 301.6,608.6 302.2,608.5 302.8,608.5 303.4,608.4 304,608.4 304.6,608.4 305.2,608.4 305.8,608.4 306.4,608.4 307,608.4 307.6,608.4 308.2,608.4 308.8,608.4 309.4,608.4 310,608.4 310.6,608.4 311.2,608.4 311.8,608.4 312.4,608.4 313,608.4 313.6,608.4 314.2,608.4 314.8,608.4 315.4,608.4 316,608.4 316.6,608.4 317.2,608.4 317.8,608.4 318.4,608.4 319,608.4 319.6,608.4 320.2,608.4 320.8,608.4 321.4,608.4 322,608.4 322.6,608.4 323.2,608.5 323.8,608.5 324.4,608.5 325,608.6 325.6,608.6 326.2,608.7 326.8,608.7 327.4,608.8 328,608.8 328.6,608.9 329.2,608.9 329.8,609 330.4,609.1 331,609.1 331.6,609.2 332.2,609.3 332.8,609.3 333.4,609.4 334,609.5 334.6,609.6 335.2,609.6 335.8,609.7 336.4,609.8 337,609.9 337.6,610 338.2,610.2 338.8,610.3 339.4,610.4 340,610.6 340.6,610.8 341.2,610.9 341.8,611.1 342.4,611.3 343,611.4 343.6,611.6 344.2,611.8 344.8,612 345.4,612.2 346,612.4 346.6,612.6 347.2,612.7 347.8,612.9 348.4,613.1 349,613.3 349.6,613.5 350.2,613.7 350.8,613.9 351.4,614.2 352,614.4 352.6,614.6 353.2,614.8 353.8,615.1 354.4,615.3 355,615.5 355.6,615.8 356.2,616 356.8,616.2 357.4,616.5 358,616.7 358.6,616.9 359.2,617.1 359.8,617.3 360.4,617.5 361,617.8 361.6,618 362.2,618.2 362.8,618.4 363.4,618.6 364,618.9 364.6,619.1 365.2,619.3 365.8,619.5 366.4,619.8 367,620 367.6,620.2 368.2,620.4 368.8,620.6 369.4,620.8 370,620.9 370.6,621.1 371.2,621.3 371.8,621.4 372.4,621.5 373,621.6 373.6,621.7 374.2,621.9 374.8,622 375.4,622.1 376,622.2 376.6,622.3 377.2,622.4 377.8,622.5 378.4,622.6 379,622.6 379.6,622.7 380.2,622.8 380.8,622.8 381.4,622.9 382,622.9 382.6,622.9 383.2,622.9 383.8,622.9 384.4,622.9 385,622.9 385.6,622.9 386.2,622.9 386.8,622.9 387.4,622.9 388,622.9 388.6,622.9 389.2,622.9 389.8,622.9 390.4,622.9 391,622.9 391.6,622.9 392.2,622.9 392.8,622.9 393.4,622.9 394,622.9 394.6,622.8 395.2,622.8 395.8,622.7 396.4,622.7 397,622.6 397.6,622.5 398.2,622.4 398.8,622.3 399.4,622.2 400,622.1 400.6,622 401.2,621.9 401.8,621.8 402.4,621.7 403,621.6 403.6,621.5 404.2,621.4 404.8,621.2 405.4,621.1 406,621 406.6,620.8 407.2,620.6 407.8,620.5 408.4,620.3 409,620.2 409.6,620 410.2,619.8 410.8,619.6 411.4,619.5 412,619.3 412.6,619.1 413.2,619 413.8,618.8 414.4,618.7 415,618.5 415.6,618.4 416.2,618.2 416.8,618.1 417.4,617.9 418,617.8 418.6,617.6 419.2,617.4 419.8,617.3 420.4,617.1 421,617 421.6,616.8 422.2,616.7 422.8,616.5 423.4,616.4 424,616.2 424.6,616.1 425.2,616 425.8,615.8 426.4,615.7 427,615.6 427.6,615.4 428.2,615.3 428.8,615.2 429.4,615.1 430,615 430.6,614.9 431.2,614.8 431.8,614.7 432.4,614.6 433,614.5 433.6,614.4 434.2,614.3 434.8,614.2 435.4,614.2 436,614.1 436.6,614 437.2,613.9 437.8,613.8 438.4,613.8 439,613.7 439.6,613.6 440.2,613.5 440.8,613.5 441.4,613.4 442,613.3 442.6,613.3 443.2,613.2 443.8,613.2 444.4,613.1 445,613 445.6,613 446.2,612.9 446.8,612.9 447.4,612.8 448,612.8 448.6,612.8 449.2,612.7 449.8,612.7 450.4,612.7 451,612.6 451.6,612.6 452.2,612.5 452.8,612.5 453.4,612.5 454,612.4 454.6,612.4 455.2,612.4 455.8,612.3 456.4,612.3 457,612.3 457.6,612.2 458.2,612.2 458.8,612.1 459.4,612.1 460,612.1 460.6,612 461.2,611.9 461.8,611.9 462.4,611.8 463,611.8 463.6,611.7 464.2,611.6 464.8,611.6 465.4,611.5 466,611.4 466.6,611.4 467.2,611.3 467.8,611.2 468.4,611.1 469,611 469.6,611 470.2,610.9 470.8,610.8 471.4,610.7 472,610.6 472.6,610.5 473.2,610.4 473.8,610.2 474.4,610.1 475,610 475.6,609.8 476.2,609.7 476.8,609.5 477.4,609.4 478,609.2 478.6,609 479.2,608.8 479.8,608.7 480.4,608.5 481,608.3 481.6,608.1 482.2,607.8 482.8,607.6 483.4,607.4 484,607.2 484.6,607 485.2,606.8 485.8,606.5 486.4,606.3 487,606 487.6,605.8 488.2,605.5 488.8,605.2 489.4,604.9 490,604.7 490.6,604.4 491.2,604 491.8,603.7 492.4,603.4 493,603.1 493.6,602.8 494.2,602.4 494.8,602.1 495.4,601.8 496,601.4 496.6,601.1 497.2,600.8 497.8,600.4 498.4,600.1 499,599.7 499.6,599.4 500.2,599 500.8,598.6 501.4,598.3 502,597.9 502.6,597.5 503.2,597.1 503.8,596.7 504.4,596.3 505,595.9 505.6,595.5 506.2,595.1 506.8,594.8 507.4,594.4 508,594 508.6,593.6 509.2,593.2 509.8,592.8 510.4,592.5 511,592.1 511.6,591.8 512.2,591.4 512.8,591 513.4,590.7 514,590.3 514.6,589.9 515.2,589.6 515.8,589.2 516.4,588.8 517,588.5 517.6,588.1 518.2,587.8 518.8,587.5 519.4,587.1 520,586.8 520.6,586.5 521.2,586.2 521.8,585.9 522.4,585.6 523,585.3 523.6,585 524.2,584.8 524.8,584.5 525.4,584.2 526,584 526.6,583.7 527.2,583.5 527.8,583.2 528.4,583 529,582.7 529.6,582.5 530.2,582.3 530.8,582.1 531.4,581.9 532,581.8 532.6,581.6 533.2,581.5 533.8,581.3 534.4,581.2 535,581 535.6,580.9 536.2,580.7 536.8,580.6 537.4,580.5 538,580.4 538.6,580.2 539.2,580.1 539.8,580 540.4,580 541,579.9 541.6,579.9 542.2,579.8 542.8,579.8 543.4,579.8 544,579.8 544.6,579.8 545.2,579.9 545.8,579.9 546.4,579.9 547,580 547.6,580 548.2,580.1 548.8,580.1 549.4,580.2 550,580.3 550.6,580.3 551.2,580.4 551.8,580.4 552.4,580.5 553,580.6 553.6,580.6 554.2,580.7 554.8,580.7 555.4,580.8 556,580.8 556.6,580.8 557.2,580.9 557.8,580.9 558.4,580.9 559,581 559.6,581 560.2,581.1 560.8,581.1 561.4,581.1 562,581.2 562.6,581.2 563.2,581.2 563.8,581.3 564.4,581.3 565,581.3 565.6,581.3 566.2,581.4 566.8,581.4 567.4,581.4 568,581.4 568.6,581.4 569.2,581.5 569.8,581.5 570.4,581.5 571,581.5 571.6,581.5 572.2,581.5 572.8,581.5 573.4,581.5 574,581.5 574.6,581.6 575.2,581.6 575.8,581.6 576.4,581.6 577,581.6 577.6,581.6 578.2,581.6 578.8,581.6 579.4,581.6 580,581.6 580.6,581.6 581.2,581.6 581.8,581.6 582.4,581.6 583,581.5 583.6,581.5 584.2,581.4 584.8,581.3 585.4,581.2 586,581.1 586.6,581.1 587.2,581 587.8,580.9 588.4,580.8 589,580.7 589.6,580.6 590.2,580.5 590.8,580.5 591.4,580.4 592,580.3 592.6,580.3 593.2,580.3 593.8,580.2 594.4,580.2 595,580.2 595.6,580.1 596.2,580.1 596.8,580.1 597.4,580 598,580 598.6,580 599.2,579.9 599.8,579.9 600.4,579.9 601,579.9 601.6,579.9 602.2,579.8 602.8,579.8 603.4,579.8 604,579.8 604.6,579.8 605.2,579.8 605.8,579.8 606.4,579.8 607,579.8 607.6,579.8 608.2,579.8 608.8,579.8 609.4,579.8 610,579.8 610.6,579.8 611.2,579.8 611.8,579.8 612.4,579.8 613,579.8 613.6,579.8 614.2,579.8 614.8,579.8 615.4,579.8 616,579.8 616.6,579.8 617.2,579.8 617.8,579.8 618.4,579.8 619,579.8 619.6,579.9 620.2,579.9 620.8,580 621.4,580 622,580.1 622.6,580.2 623.2,580.2 623.8,580.3 624.4,580.4 625,580.4 625.6,580.5 626.2,580.6 626.8,580.6 627.4,580.7 628,580.7 628.6,580.8 629.2,580.8 629.8,580.8 630.4,580.8 631,580.8 631.6,580.8 632.2,580.8 632.8,580.8 633.4,580.8 634,580.7 634.6,580.7 635.2,580.7 635.8,580.7 636.4,580.6 637,580.6 637.6,580.6 638.2,580.6 638.8,580.5 639.4,580.5 640,580.5 640.6,580.4 641.2,580.4 641.8,580.4 642.4,580.3 643,580.3 643.6,580.2 644.2,580.2 644.8,580.1 645.4,580 646,580 646.6,579.9 647.2,579.8 647.8,579.7 648.4,579.6 649,579.5 649.6,579.4 650.2,579.3 650.8,579.1 651.4,579 652,578.9 652.6,578.8 653.2,578.7 653.8,578.5 654.4,578.4 655,578.3 655.6,578.2 656.2,578.1 656.8,577.9 657.4,577.8 658,577.6 658.6,577.5 659.2,577.3 659.8,577.2 660.4,577 661,576.9 661.6,576.7 662.2,576.5 662.8,576.4 663.4,576.2 664,576.1 664.6,575.9 665.2,575.8 665.8,575.6 666.4,575.5 667,575.4 667.6,575.2 668.2,575.1 668.8,575 669.4,574.9 670,574.8 670.6,574.7 671.2,574.6 671.8,574.5 672.4,574.4 673,574.3 673.6,574.2 674.2,574.1 674.8,574 675.4,573.9 676,573.8 676.6,573.7 677.2,573.6 677.8,573.6 678.4,573.5 679,573.4 679.6,573.3 680.2,573.2 680.8,573.1 681.4,573 682,572.9 682.6,572.8 683.2,572.7 683.8,572.6 684.4,572.5 685,572.4 685.6,572.3 686.2,572.2 686.8,572.1 687.4,572 688,571.9 688.6,571.8 689.2,571.7 689.8,571.6 690.4,571.5 691,571.4 691.6,571.3 692.2,571.1 692.8,571 693.4,570.9 694,570.8 694.6,570.7 695.2,570.6 695.8,570.5 696.4,570.4 697,570.2 697.6,570.1 698.2,570 698.8,569.9 699.4,569.8 700,569.6 700.6,569.5 701.2,569.4 701.8,569.3 702.4,569.1 703,569 703.6,568.9 704.2,568.8 704.8,568.6 705.4,568.5 706,568.4 706.6,568.2 707.2,568.1 707.8,568 708.4,567.9 709,567.7 709.6,567.6 710.2,567.5 710.8,567.4 711.4,567.2 712,567.1 712.6,567 713.2,566.8 713.8,566.7 714.4,566.6 715,566.4 715.6,566.3 716.2,566.1 716.8,566 717.4,565.9 718,565.7 718.6,565.5 719.2,565.4 719.8,565.2 720.4,565.1 721,564.9 721.6,564.7 722.2,564.6 722.8,564.4 723.4,564.2 724,564 724.6,563.8 725.2,563.7 725.8,563.5 726.4,563.3 727,563.1 727.6,562.9 728.2,562.7 728.8,562.5 729.4,562.3 730,562.2 730.6,562 731.2,561.8 731.8,561.6 732.4,561.4 733,561.2 733.6,561 734.2,560.8 734.8,560.6 735.4,560.4 736,560.2 736.6,560 737.2,559.8 737.8,559.6 738.4,559.4 739,559.2 739.6,559 740.2,558.8 740.8,558.6 741.4,558.3 742,558.1 742.6,557.9 743.2,557.6 743.8,557.4 744.4,557.1 745,556.9 745.6,556.6 746.2,556.3 746.8,556 747.4,555.8 748,555.5 748.6,555.2 749.2,554.9 749.8,554.6 750.4,554.3 751,554 751.6,553.6 752.2,553.3 752.8,553 753.4,552.7 754,552.3 754.6,552 755.2,551.6 755.8,551.3 756.4,550.9 757,550.5 757.6,550.1 758.2,549.7 758.8,549.3 759.4,548.9 760,548.5 760.6,548 761.2,547.6 761.8,547.1 762.4,546.7 763,546.2 763.6,545.8 764.2,545.3 764.8,544.9 765.4,544.4 766,544 766.6,543.6 767.2,543.1 767.8,542.7 768.4,542.3 769,541.9 769.6,541.5 770.2,541.1 770.8,540.7 771.4,540.3 772,539.9 772.6,539.6 773.2,539.2 773.8,538.8 774.4,538.4 775,538 775.6,537.6 776.2,537.3 776.8,536.9 777.4,536.5 778,536.1 778.6,535.8 779.2,535.4 779.8,535.1 780.4,534.7 781,534.4 781.6,534 782.2,533.6 782.8,533.3 783.4,532.9 784,532.5 784.6,532.1 785.2,531.8 785.8,531.4 786.4,531 787,530.7 787.6,530.3 788.2,530 788.8,529.7 789.4,529.4 790,529.1 790.6,528.8 791.2,528.6 791.8,528.4 792.4,528.2 793,528 793.6,527.8 794.2,527.7 794.8,527.5 795.4,527.4 796,527.3 796.6,527.1 797.2,527 797.8,526.9 798.4,526.7 799,526.6 799.6,526.5 800.2,526.4 800.8,526.3 801.4,526.2 802,526.1 802.6,526.1 803.2,526 803.8,525.9 804.4,525.9 805,525.8 805.6,525.8 806.2,525.8 806.8,525.7 807.4,525.7 808,525.7 808.6,525.7 809.2,525.6 809.8,525.6 810.4,525.6 811,525.6 811.6,525.6 812.2,525.6 812.8,525.6 813.4,525.7 814,525.7 814.6,525.8 815.2,525.9 815.8,526 816.4,526.1 817,526.2 817.6,526.3 818.2,526.4 818.8,526.6 819.4,526.7 820,526.8 820.6,527 821.2,527.1 821.8,527.2 822.4,527.4 823,527.6 823.6,527.8 824.2,528 824.8,528.2 825.4,528.4 826,528.6 826.6,528.9 827.2,529.1 827.8,529.4 828.4,529.7 829,529.9 829.6,530.2 830.2,530.5 830.8,530.7 831.4,531 832,531.3 832.6,531.6 833.2,531.9 833.8,532.1 834.4,532.4 835,532.7 835.6,533 836.2,533.3 836.8,533.6 837.4,533.9 838,534.3 838.6,534.6 839.2,534.9 839.8,535.3 840.4,535.6 841,535.9 841.6,536.3 842.2,536.6 842.8,537 843.4,537.4 844,537.7 844.6,538.1 845.2,538.5 845.8,538.8 846.4,539.2 847,539.6 847.6,540 848.2,540.4 848.8,540.8 849.4,541.2 850,541.6 850.6,542 851.2,542.5 851.8,542.9 852.4,543.3 853,543.7 853.6,544.2 854.2,544.6 854.8,545.1 855.4,545.5 856,545.9 856.6,546.4 857.2,546.8 857.8,547.3 858.4,547.7 859,548.1 859.6,548.6 860.2,549 860.8,549.5 861.4,549.9 862,550.3 862.6,550.8 863.2,551.2 863.8,551.7 864.4,552.1 865,552.6 865.6,553 866.2,553.5 866.8,553.9 867.4,554.4 868,554.9 868.6,555.3 869.2,555.8 869.8,556.3 870.4,556.7 871,557.2 871.6,557.7 872.2,558.2 872.8,558.7 873.4,559.2 874,559.7 874.6,560.2 875.2,560.7 875.8,561.2 876.4,561.7 877,562.2 877.6,562.7 878.2,563.2 878.8,563.7 879.4,564.2 880,564.7 880.6,565.2 881.2,565.7 881.8,566.2 882.4,566.7 883,567.2 883.6,567.7 884.2,568.3 884.8,568.8 885.4,569.3 886,569.8 886.6,570.3 887.2,570.8 887.8,571.3 888.4,571.8 889,572.3 889.6,572.8 890.2,573.3 890.8,573.8 891.4,574.3 892,574.8 892.6,575.3 893.2,575.7 893.8,576.2 894.4,576.6 895,577.1 895.6,577.5 896.2,577.9 896.8,578.4 897.4,578.8 898,579.2 898.6,579.6 899.2,579.9 899.8,580.3 900.4,580.7 901,581.1 901.6,581.4 902.2,581.8 902.8,582.2 903.4,582.5 904,582.9 904.6,583.2 905.2,583.6 905.8,583.9 906.4,584.2 907,584.6 907.6,584.9 908.2,585.2 908.8,585.6 909.4,585.9 910,586.2 910.6,586.6 911.2,586.9 911.8,587.2 912.4,587.5 913,587.8 913.6,588.1 914.2,588.3 914.8,588.6 915.4,588.8 916,589 916.6,589.2 917.2,589.4 917.8,589.6 918.4,589.8 919,590 919.6,590.1 920.2,590.3 920.8,590.5 921.4,590.6 922,590.8 922.6,590.9 923.2,591.1 923.8,591.2 924.4,591.3 925,591.4 925.6,591.5 926.2,591.5 926.8,591.6 927.4,591.6 928,591.7 928.6,591.8 929.2,591.8 929.8,591.9 930.4,591.9 931,592 931.6,592 932.2,592.1 932.8,592.1 933.4,592.1 934,592.2 934.6,592.2 935.2,592.2 935.8,592.2 936.4,592.3 937,592.3 937.6,592.3 938.2,592.3 938.8,592.3 939.4,592.3 940,592.3 940.6,592.3 941.2,592.2 941.8,592.2 942.4,592.2 943,592.1 943.6,592.1 944.2,592.1 944.8,592 945.4,592 946,591.9 946.6,591.9 947.2,591.8 947.8,591.8 948.4,591.7 949,591.7 949.6,591.6 950.2,591.6 950.8,591.5 951.4,591.5 952,591.4 952.6,591.4 953.2,591.3 953.8,591.3 954.4,591.2 955,591.2 955.6,591.1 956.2,591.1 956.8,591 957.4,591 958,590.9 958.6,590.9 959.2,590.8 959.8,590.7 960.4,590.7 961,590.6 961.6,590.6 962.2,590.5 962.8,590.4 963.4,590.3 964,590.3 964.6,590.2 965.2,590.1 965.8,590 966.4,589.9 967,589.8 967.6,589.7 968.2,589.6 968.8,589.5 969.4,589.3 970,589.2 970.6,589.1 971.2,589 971.8,588.8 972.4,588.7 973,588.6 973.6,588.4 974.2,588.3 974.8,588.2 975.4,588 976,587.9 976.6,587.7 977.2,587.6 977.8,587.4 978.4,587.3 979,587.1 979.6,586.9 980.2,586.7 980.8,586.5 981.4,586.4 982,586.2 982.6,586 983.2,585.8 983.8,585.6 984.4,585.4 985,585.2 985.6,585 986.2,584.8 986.8,584.6 987.4,584.4 988,584.2 988.6,584.1 989.2,583.9 989.8,583.7 990.4,583.5 991,583.3 991.6,583.1 992.2,582.9 992.8,582.7 993.4,582.6 994,582.4 994.6,582.2 995.2,582 995.8,581.8 996.4,581.6 997,581.4 997.6,581.3 998.2,581.1 998.8,580.9 999.4,580.8 1000,580.6 1000.6,580.5 1001.2,580.3 1001.8,580.2 1002.4,580 1003,579.9 1003.6,579.8 1004.2,579.6 1004.8,579.5 1005.4,579.3 1006,579.2 1006.6,579.1 1007.2,578.9 1007.8,578.8 1008.4,578.7 1009,578.7 1009.6,578.6 1010.2,578.5 1010.8,578.5 1011.4,578.5 1012,578.5 1012.6,578.5 1013.2,578.5 1013.8,578.5 1014.4,578.6 1015,578.6 1015.6,578.6 1016.2,578.6 1016.8,578.7 1017.4,578.7 1018,578.7 1018.6,578.8 1019.2,578.8 1019.8,578.9 1020.4,578.9 1021,579 1021.6,579 1022.2,579.1 1022.8,579.1 1023.4,579.2 1024,579.3 1024.6,579.4 1025.2,579.5 1025.8,579.7 1026.4,579.8 1027,579.9 1027.6,580.1 1028.2,580.2 1028.8,580.3 1029.4,580.5 1030,580.6 1030.6,580.8 1031.2,580.9 1031.8,581.1 1032.4,581.3 1033,581.4 1033.6,581.6 1034.2,581.8 1034.8,582 1035.4,582.2 1036,582.4 1036.6,582.7 1037.2,582.9 1037.8,583.1 1038.4,583.3 1039,583.6 1039.6,583.8 1040.2,584 1040.8,584.2 1041.4,584.5 1042,584.7 1042.6,584.9 1043.2,585.2 1043.8,585.4 1044.4,585.7 1045,585.9 1045.6,586.2 1046.2,586.4 1046.8,586.7 1047.4,586.9 1048,587.2 1048.6,587.4 1049.2,587.6 1049.8,587.9 1050.4,588.1 1051,588.3 1051.6,588.5 1052.2,588.7 1052.8,588.9 1053.4,589.1 1054,589.3 1054.6,589.5 1055.2,589.7 1055.8,589.9 1056.4,590.1 1057,590.3 1057.6,590.5 1058.2,590.7 1058.8,590.8 1059.4,591 1060,591.1 1060.6,591.3 1061.2,591.4 1061.8,591.6 1062.4,591.7 1063,591.8 1063.6,592 1064.2,592.1 1064.8,592.2 1065.4,592.4 1066,592.5 1066.6,592.6 1067.2,592.7 1067.8,592.9 1068.4,593 1069,593 1069.6,593.1 1070.2,593.2 1070.8,593.2 1071.4,593.3 1072,593.3 1072.6,593.3 1073.2,593.4 1073.8,593.4 1074.4,593.4 1075,593.5 1075.6,593.5 1076.2,593.5 1076.8,593.5 1077.4,593.5 1078,593.6 1078.6,593.6 1079.2,593.6 1079.8,593.6 1080.4,593.6 1081,593.6 1081.6,593.6 1082.2,593.6 1082.8,593.6 1083.4,593.6 1084,593.6 1084.6,593.5 1085.2,593.5 1085.8,593.5 1086.4,593.4 1087,593.4 1087.6,593.4 1088.2,593.3 1088.8,593.3 1089.4,593.2 1090,593.2 1090.6,593.1 1091.2,593.1 1091.8,593 1092.4,592.9 1093,592.9 1093.6,592.8 1094.2,592.8 1094.8,592.7 1095.4,592.7 1096,592.6 1096.6,592.5 1097.2,592.4 1097.8,592.4 1098.4,592.3 1099,592.2 1099.6,592.1 1100.2,592 1100.8,591.9 1101.4,591.8 1102,591.7 1102.6,591.6 1103.2,591.5 1103.8,591.4 1104.4,591.3 1105,591.1 1105.6,591 1106.2,590.9 1106.8,590.8 1107.4,590.6 1108,590.5 1108.6,590.4 1109.2,590.2 1109.8,590 1110.4,589.9 1111,589.7 1111.6,589.5 1112.2,589.3 1112.8,589.1 1113.4,588.9 1114,588.7 1114.6,588.5 1115.2,588.3 1115.8,588.1 1116.4,587.9 1117,587.7 1117.6,587.5 1118.2,587.3 1118.8,587.1 1119.4,586.9 1120,586.7 1120.6,586.5 1121.2,586.2 1121.8,586 1122.4,585.8 1123,585.6 1123.6,585.4 1124.2,585.1 1124.8,584.9 1125.4,584.7 1126,584.5 1126.6,584.2 1127.2,584 1127.8,583.8 1128.4,583.6 1129,583.3 1129.6,583.1 1130.2,582.9 1130.8,582.7 1131.4,582.4 1132,582.2 1132.6,582 1133.2,581.8 1133.8,581.6 1134.4,581.4 1135,581.1 1135.6,580.9 1136.2,580.7 1136.8,580.5 1137.4,580.3 1138,580 1138.6,579.8 1139.2,579.6 1139.8,579.4 1140.4,579.2 1141,579 1141.6,578.8 1142.2,578.5 1142.8,578.3 1143.4,578.1 1144,577.9 1144.6,577.7 1145.2,577.5 1145.8,577.3 1146.4,577 1147,576.8 1147.6,576.6 1148.2,576.4 1148.8,576.1 1149.4,575.9 1150,575.7 1150.6,575.5 1151.2,575.3 1151.8,575 1152.4,574.8 1153,574.6 1153.6,574.4 1154.2,574.2 1154.8,574.1 1155.4,573.9 1156,573.7 1156.6,573.6 1157.2,573.4 1157.8,573.3 1158.4,573.1 1159,573 1159.6,572.8 1160.2,572.7 1160.8,572.5 1161.4,572.4 1162,572.3 1162.6,572.1 1163.2,572 1163.8,571.9 1164.4,571.8 1165,571.7 1165.6,571.6 1166.2,571.6 1166.8,571.5 1167.4,571.5 1168,571.4 1168.6,571.4 1169.2,571.3 1169.8,571.3 1170.4,571.2 1171,571.2 1171.6,571.2 1172.2,571.1 1172.8,571.1 1173.4,571.1 1174,571.1 1174.6,571 1175.2,571 1175.8,571 1176.4,571 1177,571 1177.6,571 1178.2,571 1178.8,571 1179.4,571 1180,571 1180.6,571 1181.2,571 1181.8,571 1182.4,571 1183,571 1183.6,571 1184.2,571 1184.8,571 1185.4,571 1186,571 1186.6,571 1187.2,571" fill="none" stroke="#c6c7dc" stroke-width="1.2" stroke-linejoin="round"/>
<path d="M7 575.1L7.6 575L8.2 574.9L8.8 574.8L9.4 574.6L10 574.5L10.6 574.4L11.2 574.2L11.8 574L12.4 573.9L13 573.7L13.6 573.5L14.2 573.3L14.8 573.1L15.4 572.9L16 572.6L16.6 572.4L17.2 572.1L17.8 571.8L18.4 571.5L19 571.2L19.6 570.8L20.2 570.5L20.8 570.1L21.4 569.8L22 569.4L22.6 569.1L23.2 568.7L23.8 568.4L24.4 568L25 567.7L25.6 567.4L26.2 567L26.8 566.7L27.4 566.3L28 565.9L28.6 565.5L29.2 565.2L29.8 564.8L30.4 564.4L31 564L31.6 563.7L32.2 563.4L32.8 563L33.4 562.7L34 562.4L34.6 562.2L35.2 561.9L35.8 561.7L36.4 561.5L37 561.3L37.6 561L38.2 560.8L38.8 560.6L39.4 560.5L40 560.3L40.6 560.1L41.2 559.9L41.8 559.8L42.4 559.6L43 559.5L43.6 559.3L44.2 559.2L44.8 559L45.4 558.9L46 558.8L46.6 558.7L47.2 558.6L47.8 558.4L48.4 558.3L49 558.2L49.6 558.1L50.2 558L50.8 557.9L51.4 557.8L52 557.7L52.6 557.7L53.2 557.6L53.8 557.5L54.4 557.5L55 557.4L55.6 557.3L56.2 557.3L56.8 557.2L57.4 557.2L58 557.1L58.6 557.1L59.2 557.1L59.8 557L60.4 557L61 557L61.6 557M130.6 606.6L131.2 606.6L131.8 606.6L132.4 606.6L133 606.6L133.6 606.6L134.2 606.6L134.8 606.6L135.4 606.6L136 606.6L136.6 606.6L137.2 606.6L137.8 606.6L138.4 606.5L139 606.4L139.6 606.3L140.2 606.2L140.8 606L141.4 605.9L142 605.7L142.6 605.6L143.2 605.4L143.8 605.3L144.4 605.1L145 604.9L145.6 604.8L146.2 604.6L146.8 604.5L147.4 604.3L148 604.1L148.6 603.9L149.2 603.7L149.8 603.5L150.4 603.3L151 603.1L151.6 602.9L152.2 602.7L152.8 602.5L153.4 602.3L154 602.1L154.6 601.9L155.2 601.7L155.8 601.5L156.4 601.3L157 601.1L157.6 600.9L158.2 600.7L158.8 600.4L159.4 600.2L160 600L160.6 599.8L161.2 599.6L161.8 599.4L162.4 599.2L163 599L163.6 598.8L164.2 598.6L164.8 598.5L165.4 598.3L166 598.2L166.6 598.1L167.2 597.9L167.8 597.8L168.4 597.7L169 597.6L169.6 597.5L170.2 597.4L170.8 597.3L171.4 597.2L172 597.1L172.6 597L173.2 596.9L173.8 596.8L174.4 596.7L175 596.7L175.6 596.6L176.2 596.5L176.8 596.5L177.4 596.4L178 596.3L178.6 596.3L179.2 596.3M274.6 611L275.2 611L275.8 611L276.4 610.9L277 610.9L277.6 610.8L278.2 610.7L278.8 610.7L279.4 610.6L280 610.5L280.6 610.4L281.2 610.3L281.8 610.2L282.4 610.1L283 610L283.6 609.9L284.2 609.8L284.8 609.7L285.4 609.7L286 609.6L286.6 609.5L287.2 609.5L287.8 609.4L288.4 609.4L289 609.3L289.6 609.3L290.2 609.2L290.8 609.2L291.4 609.2L292 609.1L292.6 609L293.2 609L293.8 608.9L294.4 608.9L295 608.8L295.6 608.7L296.2 608.6L296.8 608.5L297.4 608.3L298 608.2L298.6 608L299.2 607.9L299.8 607.7L300.4 607.6L301 607.5L301.6 607.4L302.2 607.4L302.8 607.4L303.4 607.4L304 607.4L304.6 607.4L305.2 607.4L305.8 607.4L306.4 607.4L307 607.4L307.6 607.4L308.2 607.4L308.8 607.4M366.4 626.4L367 626.4L367.6 626.4L368.2 626.4L368.8 626.4L369.4 626.4L370 626.4L370.6 626.3L371.2 626.3L371.8 626.3L372.4 626.3L373 626.2L373.6 626.2L374.2 626.2L374.8 626.1L375.4 626L376 625.9L376.6 625.8L377.2 625.6L377.8 625.4L378.4 625.2L379 624.9L379.6 624.7L380.2 624.5L380.8 624.2L381.4 624L382 623.7L382.6 623.5L383.2 623.2L383.8 623L384.4 622.7L385 622.4L385.6 622.1L386.2 621.8L386.8 621.5L387.4 621.2L388 620.8L388.6 620.5L389.2 620.2L389.8 619.9L390.4 619.6L391 619.2L391.6 618.9L392.2 618.7L392.8 618.4L393.4 618.1L394 617.9L394.6 617.6L395.2 617.4L395.8 617.1L396.4 616.9L397 616.7L397.6 616.4L398.2 616.2L398.8 616L399.4 615.8L400 615.6L400.6 615.3L401.2 615.1L401.8 614.9L402.4 614.8L403 614.6L403.6 614.4L404.2 614.2L404.8 614L405.4 613.8L406 613.6L406.6 613.4L407.2 613.3L407.8 613.1L408.4 612.9L409 612.8L409.6 612.6L410.2 612.5L410.8 612.3L411.4 612.2L412 612.1L412.6 612L413.2 612L413.8 611.9L414.4 611.8L415 611.8L415.6 611.7L416.2 611.6L416.8 611.6L417.4 611.5L418 611.5L418.6 611.4L419.2 611.4L419.8 611.4L420.4 611.4M443.2 612.9L443.8 612.9L444.4 612.9L445 612.8L445.6 612.8L446.2 612.8L446.8 612.7L447.4 612.7L448 612.6L448.6 612.5L449.2 612.5L449.8 612.4L450.4 612.3L451 612.2L451.6 612.1L452.2 612L452.8 611.9L453.4 611.8L454 611.7L454.6 611.6L455.2 611.4L455.8 611.2L456.4 611.1L457 610.9L457.6 610.6L458.2 610.4L458.8 610.2L459.4 609.9L460 609.7L460.6 609.4L461.2 609.2L461.8 608.9L462.4 608.7L463 608.4L463.6 608.1L464.2 607.9L464.8 607.6L465.4 607.3L466 607L466.6 606.6L467.2 606.3L467.8 606L468.4 605.6L469 605.3L469.6 604.9L470.2 604.6L470.8 604.2L471.4 603.8L472 603.4L472.6 603.1L473.2 602.7L473.8 602.3L474.4 601.9L475 601.4L475.6 601L476.2 600.6L476.8 600.1L477.4 599.7L478 599.2L478.6 598.7L479.2 598.2L479.8 597.8L480.4 597.3L481 596.8L481.6 596.4L482.2 595.9L482.8 595.5L483.4 595L484 594.5L484.6 594.1L485.2 593.6L485.8 593.2L486.4 592.7L487 592.2L487.6 591.8L488.2 591.3L488.8 590.9L489.4 590.4L490 590L490.6 589.5L491.2 589.1L491.8 588.6L492.4 588.2L493 587.8L493.6 587.4L494.2 587L494.8 586.5L495.4 586.1L496 585.7L496.6 585.3L497.2 584.9L497.8 584.5L498.4 584.1L499 583.7L499.6 583.3L500.2 582.9L500.8 582.6L501.4 582.3L502 582L502.6 581.7L503.2 581.4L503.8 581.2L504.4 580.9L505 580.7L505.6 580.4L506.2 580.2L506.8 580L507.4 579.8L508 579.6L508.6 579.4L509.2 579.2L509.8 579L510.4 578.9L511 578.7L511.6 578.6L512.2 578.4L512.8 578.3L513.4 578.2L514 578.1L514.6 578L515.2 577.9L515.8 577.9L516.4 577.8L517 577.7L517.6 577.6L518.2 577.5L518.8 577.5L519.4 577.4L520 577.4L520.6 577.3L521.2 577.3L521.8 577.3M560.8 584L561.4 584L562 584L562.6 583.9L563.2 583.9L563.8 583.8L564.4 583.7L565 583.6L565.6 583.5L566.2 583.3L566.8 583.2L567.4 583.1L568 582.9L568.6 582.8L569.2 582.7L569.8 582.5L570.4 582.4L571 582.3L571.6 582.2L572.2 582L572.8 581.9L573.4 581.7L574 581.6L574.6 581.4L575.2 581.3L575.8 581.1L576.4 581L577 580.8L577.6 580.6L578.2 580.5L578.8 580.3L579.4 580.2L580 580L580.6 579.9L581.2 579.8L581.8 579.6L582.4 579.5L583 579.3L583.6 579.2L584.2 579L584.8 578.9L585.4 578.7L586 578.6L586.6 578.4L587.2 578.3L587.8 578.2L588.4 578.1L589 578L589.6 577.9L590.2 577.8L590.8 577.8L591.4 577.8M625 582.3L625.6 582.3L626.2 582.3L626.8 582.2L627.4 582.1L628 582L628.6 581.9L629.2 581.8L629.8 581.7L630.4 581.6L631 581.4L631.6 581.2L632.2 581.1L632.8 580.9L633.4 580.8L634 580.6L634.6 580.4L635.2 580.2L635.8 580.1L636.4 579.8L637 579.6L637.6 579.3L638.2 579.1L638.8 578.8L639.4 578.5L640 578.2L640.6 577.9L641.2 577.5L641.8 577.2L642.4 576.9L643 576.6L643.6 576.3L644.2 576L644.8 575.8L645.4 575.5L646 575.3L646.6 575L647.2 574.7L647.8 574.4L648.4 574.2L649 573.9L649.6 573.6L650.2 573.3L650.8 573.1L651.4 572.9L652 572.6L652.6 572.5L653.2 572.3L653.8 572.2L654.4 572.1L655 572L655.6 572L656.2 571.9L656.8 571.9L657.4 571.9L658 571.8L658.6 571.8L659.2 571.8L659.8 571.8L660.4 571.7L661 571.7L661.6 571.7L662.2 571.7L662.8 571.7L663.4 571.7L664 571.6L664.6 571.6L665.2 571.6L665.8 571.6L666.4 571.6L667 571.5L667.6 571.5L668.2 571.5L668.8 571.5L669.4 571.4L670 571.4L670.6 571.4L671.2 571.3L671.8 571.3L672.4 571.3L673 571.2L673.6 571.2L674.2 571.2L674.8 571.1L675.4 571.1L676 571L676.6 571L677.2 570.9L677.8 570.9L678.4 570.8L679 570.8L679.6 570.7L680.2 570.7L680.8 570.6L681.4 570.5L682 570.5L682.6 570.4L683.2 570.3L683.8 570.2L684.4 570.1L685 569.9L685.6 569.8L686.2 569.7L686.8 569.6L687.4 569.4L688 569.3L688.6 569.2L689.2 569L689.8 568.9L690.4 568.7L691 568.5L691.6 568.4L692.2 568.2L692.8 568.1L693.4 567.9L694 567.7L694.6 567.5L695.2 567.3L695.8 567.1L696.4 566.8L697 566.6L697.6 566.3L698.2 566.1L698.8 565.8L699.4 565.5L700 565.3L700.6 565L701.2 564.7L701.8 564.5L702.4 564.2L703 564L703.6 563.7L704.2 563.5L704.8 563.2L705.4 563L706 562.8L706.6 562.6L707.2 562.4L707.8 562.2L708.4 562L709 561.8L709.6 561.6L710.2 561.4L710.8 561.2L711.4 561L712 560.8L712.6 560.6L713.2 560.4L713.8 560.2L714.4 560L715 559.8L715.6 559.6L716.2 559.4L716.8 559.2L717.4 559.1L718 558.9L718.6 558.7L719.2 558.5L719.8 558.3L720.4 558.1L721 557.9L721.6 557.7L722.2 557.5L722.8 557.3L723.4 557.1L724 556.9L724.6 556.7L725.2 556.5L725.8 556.3L726.4 556.1L727 555.9L727.6 555.7L728.2 555.5L728.8 555.3L729.4 555.1L730 554.9L730.6 554.7L731.2 554.4L731.8 554.2L732.4 554L733 553.8L733.6 553.5L734.2 553.3L734.8 553L735.4 552.7L736 552.5L736.6 552.2L737.2 551.9L737.8 551.5L738.4 551.2L739 550.8L739.6 550.5L740.2 550.1L740.8 549.7L741.4 549.3L742 548.9L742.6 548.5L743.2 548.1L743.8 547.7L744.4 547.2L745 546.8L745.6 546.3L746.2 545.8L746.8 545.3L747.4 544.8L748 544.2L748.6 543.6L749.2 543L749.8 542.4L750.4 541.8L751 541.1L751.6 540.5L752.2 539.8L752.8 539.2L753.4 538.6L754 538L754.6 537.4L755.2 536.8L755.8 536.2L756.4 535.6L757 535.1L757.6 534.5L758.2 533.9L758.8 533.3L759.4 532.7L760 532.1L760.6 531.5L761.2 530.9L761.8 530.4L762.4 529.9L763 529.4L763.6 528.9L764.2 528.5L764.8 528.1L765.4 527.7L766 527.4L766.6 527.1L767.2 526.8L767.8 526.5L768.4 526.2L769 526L769.6 525.7L770.2 525.5L770.8 525.3L771.4 525L772 524.8L772.6 524.6L773.2 524.5L773.8 524.3L774.4 524.1L775 523.9L775.6 523.8L776.2 523.7L776.8 523.5L777.4 523.4L778 523.2L778.6 523.1L779.2 522.9L779.8 522.8L780.4 522.6L781 522.5L781.6 522.4L782.2 522.3L782.8 522.2L783.4 522.1L784 522L784.6 521.9L785.2 521.9L785.8 521.8L786.4 521.8L787 521.8M913.6 594.8L914.2 594.8L914.8 594.8L915.4 594.7L916 594.7L916.6 594.7L917.2 594.6L917.8 594.5L918.4 594.5L919 594.4L919.6 594.3L920.2 594.2L920.8 594.1L921.4 594L922 593.9L922.6 593.8L923.2 593.7L923.8 593.6L924.4 593.5L925 593.5L925.6 593.4L926.2 593.3L926.8 593.2L927.4 593.1L928 593L928.6 592.9L929.2 592.7L929.8 592.6L930.4 592.5L931 592.4L931.6 592.2L932.2 592.1L932.8 592L933.4 591.8L934 591.7L934.6 591.6L935.2 591.5L935.8 591.3L936.4 591.2L937 591.1L937.6 591L938.2 590.9L938.8 590.8L939.4 590.7L940 590.6L940.6 590.5L941.2 590.4L941.8 590.3L942.4 590.2L943 590.1L943.6 590.1L944.2 590L944.8 589.9L945.4 589.8L946 589.7L946.6 589.7L947.2 589.6L947.8 589.5L948.4 589.4L949 589.3L949.6 589.2L950.2 589.1L950.8 589L951.4 588.9L952 588.8L952.6 588.7L953.2 588.6L953.8 588.5L954.4 588.4L955 588.3L955.6 588.2L956.2 588.1L956.8 588L957.4 587.9L958 587.8L958.6 587.7L959.2 587.6L959.8 587.4L960.4 587.3L961 587.2L961.6 587L962.2 586.9L962.8 586.7L963.4 586.6L964 586.4L964.6 586.2L965.2 586L965.8 585.8L966.4 585.6L967 585.4L967.6 585.1L968.2 584.8L968.8 584.6L969.4 584.3L970 584L970.6 583.8L971.2 583.5L971.8 583.2L972.4 582.9L973 582.7L973.6 582.4L974.2 582.1L974.8 581.9L975.4 581.6L976 581.3L976.6 581L977.2 580.7L977.8 580.4L978.4 580.2L979 579.9L979.6 579.6L980.2 579.3L980.8 579L981.4 578.8L982 578.5L982.6 578.3L983.2 578L983.8 577.8L984.4 577.6L985 577.4L985.6 577.1L986.2 576.9L986.8 576.7L987.4 576.5L988 576.2L988.6 576L989.2 575.8L989.8 575.6L990.4 575.5L991 575.3L991.6 575.1L992.2 575L992.8 574.9L993.4 574.8L994 574.7L994.6 574.6L995.2 574.5L995.8 574.4L996.4 574.3L997 574.3L997.6 574.2L998.2 574.2L998.8 574.2M1051.6 596.6L1052.2 596.6L1052.8 596.6L1053.4 596.5L1054 596.5L1054.6 596.4L1055.2 596.3L1055.8 596.3L1056.4 596.2L1057 596.1L1057.6 596L1058.2 595.9L1058.8 595.8L1059.4 595.7L1060 595.5L1060.6 595.4L1061.2 595.3L1061.8 595.3L1062.4 595.2L1063 595L1063.6 594.9L1064.2 594.8L1064.8 594.7L1065.4 594.6L1066 594.5L1066.6 594.3L1067.2 594.2L1067.8 594.1L1068.4 593.9L1069 593.8L1069.6 593.7L1070.2 593.6L1070.8 593.5L1071.4 593.3L1072 593.2L1072.6 593.1L1073.2 593L1073.8 592.9L1074.4 592.8L1075 592.7L1075.6 592.5L1076.2 592.4L1076.8 592.3L1077.4 592.2L1078 592.1L1078.6 592L1079.2 591.9L1079.8 591.8L1080.4 591.7L1081 591.6L1081.6 591.5L1082.2 591.4L1082.8 591.3L1083.4 591.2L1084 591.2L1084.6 591.1L1085.2 591L1085.8 590.9L1086.4 590.8L1087 590.8L1087.6 590.7L1088.2 590.6L1088.8 590.5L1089.4 590.5L1090 590.4L1090.6 590.3L1091.2 590.2L1091.8 590.1L1092.4 590L1093 590L1093.6 589.9L1094.2 589.8L1094.8 589.7L1095.4 589.6L1096 589.5L1096.6 589.4L1097.2 589.3L1097.8 589.2L1098.4 589.1L1099 589L1099.6 588.8L1100.2 588.7L1100.8 588.6L1101.4 588.5L1102 588.3L1102.6 588.2L1103.2 588L1103.8 587.9L1104.4 587.7L1105 587.5L1105.6 587.2L1106.2 587L1106.8 586.7L1107.4 586.4L1108 586.1L1108.6 585.8L1109.2 585.5L1109.8 585.1L1110.4 584.8L1111 584.4L1111.6 584.1L1112.2 583.8L1112.8 583.4L1113.4 583.1L1114 582.8L1114.6 582.5L1115.2 582.2L1115.8 581.9L1116.4 581.6L1117 581.3L1117.6 580.9L1118.2 580.6L1118.8 580.3L1119.4 580L1120 579.7L1120.6 579.4L1121.2 579.1L1121.8 578.8L1122.4 578.5L1123 578.2L1123.6 578L1124.2 577.7L1124.8 577.5L1125.4 577.2L1126 577L1126.6 576.8L1127.2 576.5L1127.8 576.3L1128.4 576.1L1129 575.9L1129.6 575.7L1130.2 575.5L1130.8 575.3L1131.4 575L1132 574.8L1132.6 574.6L1133.2 574.4L1133.8 574.2L1134.4 574L1135 573.7L1135.6 573.5L1136.2 573.3L1136.8 573L1137.4 572.8L1138 572.5L1138.6 572.3L1139.2 572L1139.8 571.8L1140.4 571.6L1141 571.3L1141.6 571.1L1142.2 570.9L1142.8 570.7L1143.4 570.5L1144 570.3L1144.6 570.1L1145.2 569.9L1145.8 569.8L1146.4 569.6L1147 569.4L1147.6 569.3L1148.2 569.1L1148.8 569L1149.4 568.8L1150 568.7L1150.6 568.5L1151.2 568.4L1151.8 568.2L1152.4 568.1L1153 568L1153.6 567.8L1154.2 567.7L1154.8 567.6L1155.4 567.4L1156 567.3L1156.6 567.2L1157.2 567.1L1157.8 567" stroke="#1e90ff" fill="none" stroke-width="1.15" stroke-linejoin="round" stroke-linecap="round"/>
<path d="M61.6 557L62.2 557L62.8 557L63.4 557.1L64 557.1L64.6 557.2L65.2 557.2L65.8 557.3L66.4 557.4L67 557.5L67.6 557.6L68.2 557.7L68.8 557.8L69.4 557.9L70 558L70.6 558.1L71.2 558.2L71.8 558.4L72.4 558.5L73 558.7L73.6 558.9L74.2 559.1L74.8 559.3L75.4 559.5L76 559.7L76.6 560L77.2 560.2L77.8 560.5L78.4 560.7L79 561L79.6 561.3L80.2 561.6L80.8 561.9L81.4 562.3L82 562.7L82.6 563.1L83.2 563.6L83.8 564.1L84.4 564.6L85 565.1L85.6 565.7L86.2 566.3L86.8 566.8L87.4 567.4L88 568L88.6 568.6L89.2 569.2L89.8 569.8L90.4 570.4L91 571L91.6 571.6L92.2 572.3L92.8 573L93.4 573.7L94 574.4L94.6 575.1L95.2 575.8L95.8 576.5L96.4 577.2L97 578L97.6 578.7L98.2 579.4L98.8 580.1L99.4 580.8L100 581.5L100.6 582.2L101.2 582.9L101.8 583.6L102.4 584.3L103 585L103.6 585.7L104.2 586.4L104.8 587.1L105.4 587.8L106 588.5L106.6 589.2L107.2 589.8L107.8 590.5L108.4 591.2L109 591.8L109.6 592.4L110.2 593L110.8 593.6L111.4 594.2L112 594.8L112.6 595.4L113.2 596L113.8 596.5L114.4 597.1L115 597.7L115.6 598.2L116.2 598.7L116.8 599.2L117.4 599.7L118 600.2L118.6 600.7L119.2 601.1L119.8 601.5L120.4 601.9L121 602.2L121.6 602.6L122.2 603L122.8 603.4L123.4 603.8L124 604.2L124.6 604.6L125.2 604.9L125.8 605.2L126.4 605.5L127 605.8L127.6 606.1L128.2 606.3L128.8 606.4L129.4 606.5L130 606.6L130.6 606.6M179.2 596.3L179.8 596.3L180.4 596.4L181 596.4L181.6 596.5L182.2 596.6L182.8 596.7L183.4 596.8L184 597L184.6 597.1L185.2 597.2L185.8 597.3L186.4 597.5L187 597.6L187.6 597.7L188.2 597.8L188.8 598L189.4 598.1L190 598.2L190.6 598.3L191.2 598.5L191.8 598.6L192.4 598.8L193 598.9L193.6 599.1L194.2 599.2L194.8 599.3L195.4 599.5L196 599.6L196.6 599.7L197.2 599.8L197.8 600L198.4 600L199 600.1L199.6 600.2L200.2 600.3L200.8 600.3L201.4 600.3L202 600.4L202.6 600.4L203.2 600.4L203.8 600.5L204.4 600.5L205 600.5L205.6 600.5L206.2 600.5L206.8 600.6L207.4 600.6L208 600.6L208.6 600.6L209.2 600.6L209.8 600.6L210.4 600.7L211 600.7L211.6 600.7L212.2 600.7L212.8 600.7L213.4 600.7L214 600.7L214.6 600.8L215.2 600.8L215.8 600.8L216.4 600.8L217 600.8L217.6 600.8L218.2 600.9L218.8 600.9L219.4 600.9L220 601L220.6 601L221.2 601L221.8 601.1L222.4 601.1L223 601.2L223.6 601.3L224.2 601.3L224.8 601.4L225.4 601.5L226 601.6L226.6 601.6L227.2 601.7L227.8 601.8L228.4 601.9L229 602L229.6 602.1L230.2 602.2L230.8 602.3L231.4 602.4L232 602.5L232.6 602.7L233.2 602.8L233.8 602.9L234.4 603L235 603.2L235.6 603.3L236.2 603.5L236.8 603.6L237.4 603.8L238 603.9L238.6 604.1L239.2 604.2L239.8 604.4L240.4 604.5L241 604.6L241.6 604.8L242.2 604.9L242.8 605.1L243.4 605.2L244 605.4L244.6 605.5L245.2 605.7L245.8 605.8L246.4 605.9L247 606.1L247.6 606.2L248.2 606.4L248.8 606.5L249.4 606.7L250 606.8L250.6 607L251.2 607.1L251.8 607.2L252.4 607.4L253 607.5L253.6 607.7L254.2 607.9L254.8 608L255.4 608.2L256 608.3L256.6 608.5L257.2 608.6L257.8 608.8L258.4 608.9L259 609.1L259.6 609.2L260.2 609.3L260.8 609.5L261.4 609.6L262 609.7L262.6 609.8L263.2 609.9L263.8 610L264.4 610L265 610.1L265.6 610.2L266.2 610.3L266.8 610.4L267.4 610.4L268 610.5L268.6 610.6L269.2 610.7L269.8 610.7L270.4 610.8L271 610.8L271.6 610.9L272.2 610.9L272.8 611L273.4 611L274 611L274.6 611M308.8 607.4L309.4 607.4L310 607.4L310.6 607.5L311.2 607.6L311.8 607.7L312.4 607.8L313 607.9L313.6 608L314.2 608.2L314.8 608.4L315.4 608.5L316 608.7L316.6 608.9L317.2 609.1L317.8 609.2L318.4 609.4L319 609.6L319.6 609.8L320.2 610L320.8 610.1L321.4 610.3L322 610.5L322.6 610.7L323.2 611L323.8 611.2L324.4 611.4L325 611.7L325.6 611.9L326.2 612.1L326.8 612.4L327.4 612.7L328 612.9L328.6 613.2L329.2 613.4L329.8 613.7L330.4 614L331 614.2L331.6 614.5L332.2 614.7L332.8 615L333.4 615.2L334 615.5L334.6 615.8L335.2 616L335.8 616.3L336.4 616.6L337 616.9L337.6 617.1L338.2 617.4L338.8 617.7L339.4 618L340 618.2L340.6 618.5L341.2 618.8L341.8 619.1L342.4 619.3L343 619.6L343.6 619.8L344.2 620.1L344.8 620.3L345.4 620.6L346 620.8L346.6 621L347.2 621.3L347.8 621.5L348.4 621.8L349 622L349.6 622.2L350.2 622.5L350.8 622.7L351.4 622.9L352 623.2L352.6 623.4L353.2 623.6L353.8 623.8L354.4 624L355 624.2L355.6 624.4L356.2 624.5L356.8 624.7L357.4 624.8L358 625L358.6 625.1L359.2 625.2L359.8 625.4L360.4 625.5L361 625.7L361.6 625.8L362.2 625.9L362.8 626L363.4 626.1L364 626.2L364.6 626.3L365.2 626.3L365.8 626.4L366.4 626.4M420.4 611.4L421 611.4L421.6 611.4L422.2 611.5L422.8 611.5L423.4 611.6L424 611.6L424.6 611.7L425.2 611.8L425.8 611.9L426.4 612L427 612L427.6 612.1L428.2 612.2L428.8 612.3L429.4 612.3L430 612.4L430.6 612.4L431.2 612.4L431.8 612.5L432.4 612.5L433 612.5L433.6 612.6L434.2 612.6L434.8 612.6L435.4 612.7L436 612.7L436.6 612.7L437.2 612.8L437.8 612.8L438.4 612.8L439 612.8L439.6 612.8L440.2 612.9L440.8 612.9L441.4 612.9L442 612.9L442.6 612.9L443.2 612.9M521.8 577.3L522.4 577.3L523 577.3L523.6 577.4L524.2 577.4L524.8 577.5L525.4 577.6L526 577.6L526.6 577.7L527.2 577.8L527.8 578L528.4 578.1L529 578.2L529.6 578.3L530.2 578.4L530.8 578.5L531.4 578.6L532 578.7L532.6 578.8L533.2 579L533.8 579.1L534.4 579.2L535 579.4L535.6 579.5L536.2 579.7L536.8 579.8L537.4 580L538 580.1L538.6 580.3L539.2 580.4L539.8 580.6L540.4 580.7L541 580.8L541.6 581L542.2 581.1L542.8 581.3L543.4 581.4L544 581.6L544.6 581.7L545.2 581.9L545.8 582L546.4 582.2L547 582.3L547.6 582.4L548.2 582.5L548.8 582.7L549.4 582.8L550 582.9L550.6 583L551.2 583.1L551.8 583.1L552.4 583.2L553 583.3L553.6 583.4L554.2 583.5L554.8 583.5L555.4 583.6L556 583.7L556.6 583.8L557.2 583.8L557.8 583.9L558.4 583.9L559 583.9L559.6 584L560.2 584L560.8 584M591.4 577.8L592 577.8L592.6 577.8L593.2 577.9L593.8 577.9L594.4 577.9L595 578L595.6 578L596.2 578.1L596.8 578.2L597.4 578.3L598 578.3L598.6 578.4L599.2 578.5L599.8 578.6L600.4 578.7L601 578.8L601.6 578.9L602.2 578.9L602.8 579L603.4 579.1L604 579.2L604.6 579.3L605.2 579.5L605.8 579.6L606.4 579.7L607 579.9L607.6 580L608.2 580.1L608.8 580.3L609.4 580.4L610 580.6L610.6 580.7L611.2 580.8L611.8 581L612.4 581.1L613 581.2L613.6 581.3L614.2 581.4L614.8 581.5L615.4 581.5L616 581.6L616.6 581.7L617.2 581.8L617.8 581.8L618.4 581.9L619 581.9L619.6 582L620.2 582.1L620.8 582.1L621.4 582.2L622 582.2L622.6 582.2L623.2 582.3L623.8 582.3L624.4 582.3L625 582.3M787 521.8L787.6 521.8L788.2 521.9L788.8 521.9L789.4 522L790 522.1L790.6 522.3L791.2 522.4L791.8 522.6L792.4 522.8L793 523L793.6 523.1L794.2 523.3L794.8 523.5L795.4 523.7L796 523.9L796.6 524.1L797.2 524.3L797.8 524.5L798.4 524.7L799 525L799.6 525.2L800.2 525.5L800.8 525.8L801.4 526L802 526.3L802.6 526.6L803.2 526.9L803.8 527.1L804.4 527.4L805 527.7L805.6 528L806.2 528.2L806.8 528.5L807.4 528.8L808 529L808.6 529.3L809.2 529.6L809.8 529.8L810.4 530.1L811 530.4L811.6 530.6L812.2 530.9L812.8 531.2L813.4 531.5L814 531.8L814.6 532L815.2 532.3L815.8 532.6L816.4 532.9L817 533.2L817.6 533.5L818.2 533.8L818.8 534.2L819.4 534.5L820 534.8L820.6 535.2L821.2 535.5L821.8 535.8L822.4 536.2L823 536.5L823.6 536.9L824.2 537.3L824.8 537.6L825.4 538L826 538.4L826.6 538.7L827.2 539.1L827.8 539.5L828.4 539.9L829 540.3L829.6 540.6L830.2 541L830.8 541.4L831.4 541.8L832 542.2L832.6 542.5L833.2 542.9L833.8 543.3L834.4 543.7L835 544.1L835.6 544.5L836.2 544.9L836.8 545.3L837.4 545.7L838 546.1L838.6 546.5L839.2 546.9L839.8 547.3L840.4 547.8L841 548.2L841.6 548.6L842.2 549.1L842.8 549.5L843.4 550L844 550.5L844.6 551L845.2 551.5L845.8 552L846.4 552.5L847 553.1L847.6 553.6L848.2 554.2L848.8 554.7L849.4 555.3L850 555.9L850.6 556.5L851.2 557L851.8 557.6L852.4 558.2L853 558.8L853.6 559.4L854.2 559.9L854.8 560.5L855.4 561L856 561.6L856.6 562.1L857.2 562.7L857.8 563.2L858.4 563.8L859 564.3L859.6 564.9L860.2 565.4L860.8 566L861.4 566.5L862 567L862.6 567.6L863.2 568.1L863.8 568.7L864.4 569.2L865 569.7L865.6 570.3L866.2 570.8L866.8 571.3L867.4 571.8L868 572.4L868.6 572.9L869.2 573.4L869.8 573.9L870.4 574.4L871 575L871.6 575.5L872.2 576L872.8 576.5L873.4 577L874 577.5L874.6 578L875.2 578.5L875.8 579L876.4 579.5L877 580L877.6 580.5L878.2 581L878.8 581.4L879.4 581.9L880 582.3L880.6 582.7L881.2 583.2L881.8 583.6L882.4 584L883 584.5L883.6 584.9L884.2 585.3L884.8 585.7L885.4 586.2L886 586.6L886.6 587L887.2 587.4L887.8 587.8L888.4 588.2L889 588.6L889.6 589L890.2 589.3L890.8 589.7L891.4 590L892 590.4L892.6 590.7L893.2 591L893.8 591.3L894.4 591.6L895 591.9L895.6 592.1L896.2 592.4L896.8 592.6L897.4 592.9L898 593.1L898.6 593.4L899.2 593.6L899.8 593.8L900.4 594L901 594.2L901.6 594.3L902.2 594.5L902.8 594.5L903.4 594.6L904 594.6L904.6 594.6L905.2 594.7L905.8 594.7L906.4 594.7L907 594.7L907.6 594.7L908.2 594.7L908.8 594.8L909.4 594.8L910 594.8L910.6 594.8L911.2 594.8L911.8 594.8L912.4 594.8L913 594.8L913.6 594.8M998.8 574.2L999.4 574.2L1000 574.3L1000.6 574.4L1001.2 574.5L1001.8 574.7L1002.4 574.9L1003 575.1L1003.6 575.4L1004.2 575.6L1004.8 575.9L1005.4 576.1L1006 576.3L1006.6 576.6L1007.2 576.8L1007.8 577.1L1008.4 577.3L1009 577.6L1009.6 577.9L1010.2 578.2L1010.8 578.5L1011.4 578.8L1012 579.1L1012.6 579.4L1013.2 579.7L1013.8 580.1L1014.4 580.4L1015 580.7L1015.6 581.1L1016.2 581.4L1016.8 581.7L1017.4 582.1L1018 582.4L1018.6 582.8L1019.2 583.2L1019.8 583.6L1020.4 584L1021 584.4L1021.6 584.7L1022.2 585.1L1022.8 585.5L1023.4 585.9L1024 586.3L1024.6 586.7L1025.2 587.1L1025.8 587.4L1026.4 587.8L1027 588.2L1027.6 588.5L1028.2 588.9L1028.8 589.2L1029.4 589.6L1030 589.9L1030.6 590.3L1031.2 590.6L1031.8 591L1032.4 591.3L1033 591.6L1033.6 591.9L1034.2 592.2L1034.8 592.5L1035.4 592.8L1036 593.1L1036.6 593.3L1037.2 593.6L1037.8 593.8L1038.4 594.1L1039 594.3L1039.6 594.5L1040.2 594.8L1040.8 595L1041.4 595.2L1042 595.3L1042.6 595.5L1043.2 595.6L1043.8 595.8L1044.4 595.9L1045 596L1045.6 596.1L1046.2 596.1L1046.8 596.2L1047.4 596.3L1048 596.4L1048.6 596.4L1049.2 596.5L1049.8 596.5L1050.4 596.6L1051 596.6L1051.6 596.6M1157.8 567L1158.4 567L1159 567L1159.6 567.1L1160.2 567.2L1160.8 567.3L1161.4 567.4L1162 567.6L1162.6 567.7L1163.2 567.9L1163.8 568.1L1164.4 568.3L1165 568.5L1165.6 568.6L1166.2 568.8L1166.8 569L1167.4 569.1L1168 569.3L1168.6 569.5L1169.2 569.7L1169.8 569.9L1170.4 570.1L1171 570.3L1171.6 570.5L1172.2 570.7L1172.8 570.9L1173.4 571.1L1174 571.3L1174.6 571.5L1175.2 571.7L1175.8 571.9L1176.4 572.1L1177 572.2L1177.6 572.4L1178.2 572.5L1178.8 572.7L1179.4 572.8L1180 573L1180.6 573.1L1181.2 573.3L1181.8 573.4L1182.4 573.5L1183 573.6L1183.6 573.8L1184.2 573.9L1184.8 574L1185.4 574.1L1186 574.2L1186.6 574.3L1187.2 574.5" stroke="#ff1493" fill="none" stroke-width="1.15" stroke-linejoin="round" stroke-linecap="round"/>
<path d="M7.5 632V635M48.2 632V635M88.8 632V635M129.5 632V635M170.1 632V635M210.8 632V635M251.5 632V635M292.1 632V635M332.8 632V635M373.4 632V635M414.1 632V635M454.8 632V635M495.4 632V635M536.1 632V635M576.7 632V635M617.4 632V635M658.1 632V635M698.7 632V635M739.4 632V635M780 632V635M820.7 632V635M861.4 632V635M902 632V635M942.7 632V635M983.3 632V635M1024 632V635M1064.7 632V635M1105.3 632V635M1146 632V635M1186.6 632V635" stroke="#8aa0a0" stroke-width="1"/><path d="M1194 52.2h2M1194 76.6h2M1194 100.9h2M1194 125.3h2M1194 149.6h2M1194 174h2M1194 198.3h2M1194 222.7h2M1194 247h2M1194 271.4h2M1194 295.7h2M1194 320.1h2M1194 344.4h2M1194 368.8h2M1194 393.1h2M1194 417.5h2M1194 441.8h2M1194 466.2h2M1194 490.5h2" stroke="#566868" stroke-width=".9"/>
</svg>
<div class="abs" style="left:4px;top:6px;width:30px;height:7.5px;background:#000"></div>
<div class="abs lav" style="left:4px;top:13.4px;width:30px;height:17.7px"></div>
<div class="abs" style="left:7.3px;top:15px;width:16px;height:14px;background:#ededf8;border:1px solid;border-color:#7c7cc4 #f8f8ff #f8f8ff #7c7cc4"></div>
<span class="t" id="t0" style="left:6.6px;top:6.1px;font-size:8px;color:#fff;font-weight:bold;transform:scaleX(0.849);">Пери</span>
<span class="t" id="t1" style="left:10.5px;top:19.4px;font-size:6.5px;color:#444;transform:scaleX(0.830);">M1</span>
<div class="abs" style="left:576px;top:6px;width:43px;height:11.6px;background:#414141"></div>
<div class="abs lav" style="left:576px;top:17.5px;width:44px;height:13.6px"></div>
<div class="abs" style="left:899px;top:6px;width:297px;height:11.6px;background:linear-gradient(90deg,#5c5c5c,#888888)"></div>
<div class="abs lav" style="left:899px;top:17.5px;width:297px;height:13.6px"></div>
<div class="abs lav" style="left:1190.5px;top:8px;width:6px;height:8.5px;border:1px solid #fff;border-right:0"></div>
<div class="abs" style="left:1192.5px;top:14px;width:4px;height:1.2px;background:#111"></div>
<div class="abs lav" style="left:1191px;top:19.5px;width:6px;height:10px;border:1px solid #f6f6ff;border-right:0"></div>
<div class="abs" style="left:1193px;top:27px;width:4px;height:1.2px;background:#111"></div>
<div class="abs" style="left:618.7px;top:6px;width:281.5px;height:25.3px;background:#e3e3f1;border-left:1.6px solid #f4f4ff;border-right:1.2px solid #8686cc;border-bottom:1px solid #9a9ad2"></div>
<div class="abs" style="left:620.5px;top:6.2px;width:278px;height:7.2px;background:linear-gradient(90deg,#000 0,#050505 36%,#8c8c8c 100%)"></div>
<span class="t" id="t2" style="left:623.2px;top:6.1px;font-size:7.6px;color:#fff;font-weight:bold;transform:scaleX(0.968);">Графические инструменты</span>
<div class="abs" style="left:888.6px;top:6.5px;width:7.6px;height:5.8px;background:#e3e3f1;border-bottom:1px solid #7a7ab8;border-right:1px solid #7a7ab8"></div>
<svg class="abs" style="left:889.6px;top:7px" width="6" height="5" viewBox="0 0 6 5"><path d="M1 .6L5 4.2M5 .6L1 4.2" stroke="#000" stroke-width="1.3"/></svg>
<div class="abs" style="left:622.3px;top:15px;width:15.6px;height:13.9px;background:#ececf7;border:1px solid;border-color:#7c7cca #f8f8ff #f8f8ff #7c7cca"></div>
<div class="abs" style="left:659px;top:15.3px;width:1.1px;height:13.4px;background:#5a5ac4"></div>
<svg class="abs" style="left:618px;top:13px" width="282" height="19" viewBox="618 13 282 19" fill="none">
<path d="M626.6 18v8.6l2-1.9 1.5 3.3 1.4-.6-1.5-3.2h2.7z" fill="#2a2a2a"/>
<path d="M642.8 22.6h10.4M648 17.4v10.4" stroke="#a9a9b4" stroke-width="1.1"/>
<path d="M670.5 19v7.6" stroke="#8a8a90" stroke-width="1"/>
<path d="M685 22.6h8.2" stroke="#77777c" stroke-width="1"/>
<path d="M702.8 27l8.2-8" stroke="#6c6c70" stroke-width="1"/>
<path d="M720 18.5h9M720 21h9M720 23.6h9" stroke="#77777c" stroke-width=".9" stroke-dasharray="1.6 .8"/><path d="M720 26h6" stroke="#666" stroke-width=".9"/><path d="M725.5 25.2h3.4l-1.7 2.2z" fill="#555"/>
<path d="M740 26.4l2.1-6.6 2.1 6.6M740.8 24.3h2.8" stroke="#77777c" stroke-width="1.1"/>
<path d="M756 25l3.9-4.6 4 4.600z" fill="#8a8a8a" stroke="#5e5e5e" stroke-width=".7"/>
<rect x="773.4" y="19.8" width="8.6" height="6" rx="1.2" fill="#8e8e8e" stroke="#707070" stroke-width=".6"/>
<ellipse cx="796" cy="22.8" rx="5" ry="3.3" fill="#8e8e8e" stroke="#707070" stroke-width=".6"/>
<path d="M808.5 25.5l8-6M809.5 27l8-6M811 20l5 6.500M815 17.500l-1.5 8" stroke="#77777c" stroke-width=".9"/><path d="M816 26h1.600M816 27.200h1.600" stroke="#555" stroke-width=".7"/>
<path d="M827 27.500l1-5 1.600 3.500 1.400-5.500 1.400 3 1.600-6" stroke="#666" stroke-width="1"/><path d="M829.500 19.500v6M832.500 18v6" stroke="#888" stroke-width=".7"/>
<path d="M846 26.300l7.800-7.800" stroke="#77777c" stroke-width="1"/><rect x="851.300" y="25" width="2.200" height="2.200" stroke="#555" stroke-width=".7"/>
<path d="M862 27.500l7.500-9M862 27.500l8.500-6M862 27.500l9-3M862 27.500l4-9.500" stroke="#77777c" stroke-width=".8"/>
<path d="M881.500 19.300l1.300-1.500 1.400 1.500-1.400 1.500zM884.500 24.500l1.400-1.400 1.400 1.400-1.400 1.400z" fill="#444"/><path d="M881 22l5.500 2.500M880.800 23.200l2.600 2.400" stroke="#666" stroke-width=".9"/>
<path d="M890.700 21.700h3.400l-1.700 2z" fill="#222"/>
</svg>
<svg class="abs" style="left:8px;top:35px" width="20" height="8" viewBox="0 0 20 8"><path d="M1.500 2.600h4.600L3.800 5.200z" fill="#8fc8e4"/></svg>
<span class="t" id="t3" style="left:16.5px;top:36.1px;font-size:6.6px;color:#6fa0bd;transform:scaleX(1.051);">GBPJPY,M1</span>
<svg class="abs" style="left:594px;top:33px" width="10" height="5" viewBox="0 0 10 5"><path d="M2 .5h6.400L5.200 4z" fill="#607486"/></svg>
<span class="t" id="t4" style="left:9.6px;top:518.9px;font-size:5.9px;color:#a4b0b8;transform:scaleX(1.045);">M1: SSA SigNZ TT [25*2] -&gt; SigMA [25*0.0] 134.64 134.65 134.64 134.65</span>
<div class="abs" style="left:15.2px;top:334px;width:30.8px;height:46.7px;background:#191919;border-radius:1.5px"></div>
<svg class="abs" style="left:15px;top:334px" width="31" height="47" viewBox="15 334 31 47"><path d="M36.400 347.700L25.800 356.800L36.400 365.500" stroke="#8c8c8c" stroke-width="2" fill="none"/></svg>
<div class="abs" style="left:1181.600px;top:334px;width:15px;height:46.700px;background:#191919;border-radius:1.5px 0 0 1.5px"></div>
<svg class="abs" style="left:1181px;top:334px" width="15" height="47" viewBox="1181 334 15 47"><path d="M1191.600 347.700L1202.200 356.800L1191.600 365.500" stroke="#8c8c8c" stroke-width="2" fill="none"/></svg>
<div class="abs" style="left:1194.600px;top:289px;width:1.4px;height:6.600px;background:#c4e4f2"></div>
<div class="abs" style="left:24.4px;top:6.200px;width:170px;height:125.600px;background:#e3e3f1;border:2px solid;border-color:#f6f6ff #8080b4 #8080b4 #f6f6ff"></div>
<div class="abs" style="left:27px;top:8.800px;width:160px;height:11.500px;background:linear-gradient(90deg,#000 0,#0a0a0a 60%,#555 100%)"></div>
<svg class="abs" style="left:27.500px;top:9px" width="11" height="11" viewBox="0 0 11 11"><rect x=".5" y=".8" width="6" height="5.500" fill="#dfe9f6" stroke="#7aa0d0" stroke-width=".5"/><path d="M1.300 2.200h4.200M1.300 3.500h4.200M1.300 4.800h3" stroke="#4a78c0" stroke-width=".6"/><rect x="4.200" y="3.800" width="5.800" height="5.800" rx="1" fill="#f0c020" stroke="#c49000" stroke-width=".5"/><path d="M6.600 5.200l-.8 2h1.400l-.8 2" stroke="#7a5a00" stroke-width=".6" fill="none"/></svg>
<span class="t" id="t5" style="left:40.2px;top:11.2px;font-size:7.8px;color:#fff;font-weight:bold;transform:scaleX(1.056);">Список индикаторов на GBPJPY,M1</span>
<div class="abs" style="left:32.200px;top:26.200px;width:160px;height:96.800px;background:#f5f2f2;border:1px solid;border-color:#7c7cb6 #fff #fff #7c7cb6;box-shadow:inset .6px .6px 0 #b4b4dc"></div>
<svg class="abs" style="left:32px;top:26px" width="150" height="60" viewBox="32 26 150 60" fill="none"><defs><linearGradient id="gy" x1="0" y1="0" x2="0" y2="1"><stop offset="0" stop-color="#f8e88c"/><stop offset="1" stop-color="#e6b41e"/></linearGradient></defs><path d="M41 37.600v15.800" stroke="#8c8cc6" stroke-width=".8" stroke-dasharray="2.200 1.200"/><path d="M44.600 34.300h3.600M44.600 57h3.600" stroke="#9a9ad0" stroke-width=".8" stroke-dasharray="1.400 1"/><path d="M54.500 39.500v6h6.500M54.500 62v6h6.500" stroke="#7c7cc0" stroke-width=".8" stroke-dasharray="2 1"/>
<rect x="38.200" y="31.4" width="5.800" height="5.800" fill="#fbfbff" stroke="#8e8ec6" stroke-width=".9"/><path d="M39.400 34.3h3.400" stroke="#111" stroke-width="1"/>
<rect x="49.500" y="29.5" width="9" height="8" rx=".8" fill="#fff" stroke="#2c5be0" stroke-width="1"/><rect x="49.500" y="29.5" width="9" height="1.900" fill="#2c5be0"/><path d="M51 36.7l1.600-3.400 1.500 2.600 2.300-4" stroke="#3a68e4" stroke-width=".9"/>
<rect x="38.200" y="54.1" width="5.800" height="5.800" fill="#fbfbff" stroke="#8e8ec6" stroke-width=".9"/><path d="M39.400 57.0h3.400" stroke="#111" stroke-width="1"/>
<rect x="49.500" y="52.2" width="9" height="8" rx=".8" fill="#fff" stroke="#2c5be0" stroke-width="1"/><rect x="49.500" y="52.2" width="9" height="1.900" fill="#2c5be0"/><path d="M51 59.4l1.600-3.400 1.500 2.600 2.300-4" stroke="#3a68e4" stroke-width=".9"/>
<rect x="63.200" y="40.5" width="8.600" height="8.600" rx="1.300" fill="url(#gy)" stroke="#d0a21a" stroke-width=".7"/><path d="M68.600 42.0c-1.500-.7-2 .3-2.300 1.800l-.8 3.800c-.2.700-.6 1-1.200.7M65 44.2h3" stroke="#5c4400" stroke-width=".7"/><path d="M70.200 45.1l2.300 2.300-2.300 2.300-2.300-2.300z" fill="#fbe98a" stroke="#a67c00" stroke-width=".55"/>
<rect x="63.200" y="63.1" width="8.600" height="8.600" rx="1.300" fill="url(#gy)" stroke="#d0a21a" stroke-width=".7"/><path d="M68.600 64.6c-1.500-.7-2 .3-2.300 1.800l-.8 3.800c-.2.700-.6 1-1.200.7M65 66.8h3" stroke="#5c4400" stroke-width=".7"/><path d="M70.200 67.7l2.300 2.300-2.300 2.300-2.300-2.300z" fill="#fbe98a" stroke="#a67c00" stroke-width=".55"/>
</svg>
<div class="abs" style="left:75px;top:62.300px;width:95.500px;height:10.400px;background:#dfdff0"></div>
<span class="t" id="t6" style="left:63.0px;top:30.3px;font-size:7px;color:#2a2a2a;">Главный график</span>
<span class="t" id="t7" style="left:76.2px;top:41.4px;font-size:7px;color:#2a2a2a;transform:scaleX(0.915);">SSA of Price SigNZ MTF TT</span>
<span class="t" id="t8" style="left:63.0px;top:53.0px;font-size:7px;color:#2a2a2a;transform:scaleX(1.023);">Окно индикатора 2</span>
<span class="t" id="t9" style="left:76.2px;top:64.0px;font-size:7px;color:#2a2a2a;transform:scaleX(0.911);">SSA of Price SigNZ MTF TT SW</span>
<div class="abs" style="left:183px;top:6.200px;width:393px;height:265px;background:#e3e3f1;border:1.300px solid;border-color:#f8f8ff #7c7cb0 #7c7cb0 #f8f8ff;box-shadow:inset -1px -1px 0 #b0b0d6"></div>
<div class="abs" style="left:185.800px;top:9px;width:387.800px;height:11.700px;background:linear-gradient(90deg,#0000da 0,#0a00dc 30%,#6a00c8 55%,#c400c8 88%,#d800d0 100%)"></div>
<span class="t" id="t10" style="left:187.2px;top:11.4px;font-size:7.8px;color:#fff;font-weight:bold;transform:scaleX(1.062);">Custom Indicator - SSA of Price SigNZ MTF TT SW</span>
<div class="abs" style="left:549.5px;top:10.300px;width:10.800px;height:9.200px;background:#e6e6f2;border:1px solid;border-color:#fff #50507a #50507a #fff"></div>
<div class="abs" style="left:562.3px;top:10.300px;width:10.800px;height:9.200px;background:#e6e6f2;border:1px solid;border-color:#fff #50507a #50507a #fff"></div>
<span class="t" id="t11" style="left:552.7px;top:11.2px;font-size:7.5px;color:#000;font-weight:bold;transform:scaleX(0.980);">?</span>
<svg class="abs" style="left:564.300px;top:11.800px" width="7" height="6" viewBox="0 0 7 6"><path d="M1 .6L5.800 5.400M5.800 .6L1 5.400" stroke="#000" stroke-width="1.500"/></svg>
<div class="abs" style="left:190.300px;top:39.600px;width:378.400px;height:203.600px;background:#e3e3f1;border:1px solid;border-color:#fafaff #6a6aa4 #6a6aa4 #fafaff;box-shadow:1px 1px 0 #e9e9f6, inset -1px -1px 0 #a4a4d0"></div>
<div class="abs" style="left:270.700px;top:26.800px;width:75.400px;height:14px;background:#e3e3f1;border:1px solid;border-color:#fafaff #6a6aa4 transparent #fafaff;border-bottom:0;border-radius:1.500px 1.500px 0 0"></div>
<div class="abs" style="left:191.5px;top:28.800px;width:49.0px;height:1px;background:#f2f2fc"></div>
<div class="abs" style="left:241.8px;top:28.800px;width:28.7px;height:1px;background:#f2f2fc"></div>
<div class="abs" style="left:344.8px;top:28.800px;width:50.2px;height:1px;background:#f2f2fc"></div>
<div class="abs" style="left:396.3px;top:28.800px;width:26.0px;height:1px;background:#f2f2fc"></div>
<div class="abs" style="left:423.5px;top:28.800px;width:30.5px;height:1px;background:#f2f2fc"></div>
<div class="abs" style="left:455.2px;top:28.800px;width:50.0px;height:1px;background:#f2f2fc"></div>
<div class="abs" style="left:240.6px;top:29.300px;width:1.100px;height:10px;background:#68689c"></div>
<div class="abs" style="left:395.2px;top:29.300px;width:1.100px;height:10px;background:#68689c"></div>
<div class="abs" style="left:422.4px;top:29.300px;width:1.100px;height:10px;background:#68689c"></div>
<div class="abs" style="left:454.1px;top:29.300px;width:1.100px;height:10px;background:#68689c"></div>
<div class="abs" style="left:505.3px;top:29.300px;width:1.100px;height:10px;background:#68689c"></div>
<span class="t" id="t12" style="left:194.4px;top:30.6px;font-size:7px;color:#2c2c3c;transform:scaleX(0.995);">О программе</span>
<span class="t" id="t13" style="left:244.9px;top:30.6px;font-size:7px;color:#2c2c3c;transform:scaleX(0.964);">Общие</span>
<span class="t" id="t14" style="left:275.4px;top:28.8px;font-size:7px;color:#1c1c28;transform:scaleX(0.987);">Входные параметры</span>
<span class="t" id="t15" style="left:348.7px;top:30.6px;font-size:7px;color:#2c2c3c;transform:scaleX(1.012);">Зависимости</span>
<span class="t" id="t16" style="left:399.6px;top:30.6px;font-size:7px;color:#2c2c3c;transform:scaleX(0.985);">Цвета</span>
<span class="t" id="t17" style="left:427.2px;top:30.6px;font-size:7px;color:#2c2c3c;">Уровни</span>
<span class="t" id="t18" style="left:458.2px;top:30.6px;font-size:7px;color:#2c2c3c;transform:scaleX(0.979);">Отображение</span>
<div class="abs" style="left:197.0px;top:45.6px;width:291.8px;height:189.0px;background:#f5f2f2;border:1.200px solid;border-color:#6e6eb2 #fbfbff #fbfbff #6e6eb2;overflow:hidden">
<div class="abs" style="left:0;top:0;width:280.800px;height:10.300px;background:#e6e6f4;border-bottom:1px solid #7474b8;border-top:.600px solid #f8f8ff"></div>
<div class="abs" style="left:138.800px;top:.500px;width:1px;height:9.500px;background:#7a7abc"></div>
<div class="abs" style="left:139.800px;top:.500px;width:.800px;height:9.500px;background:#fafaff"></div>
<div class="row a" style="top:10.20px"></div>
<div class="row b" style="top:22.92px"></div>
<div class="row a" style="top:35.64px"></div>
<div class="row b" style="top:48.36px"></div>
<div class="row a" style="top:61.08px"></div>
<div class="row b" style="top:73.80px"></div>
<div class="row a" style="top:86.52px"></div>
<div class="row b" style="top:99.24px"></div>
<div class="row a" style="top:111.96px"></div>
<div class="row b" style="top:124.68px"></div>
<div class="row a" style="top:137.40px"></div>
<div class="row b" style="top:150.12px"></div>
<div class="row a" style="top:162.84px"></div>
<div class="row b" style="top:175.56px"></div>
<div class="abs" style="left:280.800px;top:0;width:9.600px;height:190px;background:#ededf7"></div>
<div class="abs" style="left:280.800px;top:0;width:9.400px;height:10px;background:#e3e3f1;border:.800px solid;border-color:#fbfbff #55557a #55557a #fbfbff"></div>
<div class="abs" style="left:280.800px;top:10px;width:9.400px;height:137.600px;background:#e3e3f1;border:.800px solid;border-color:#fbfbff #55557a #55557a #fbfbff"></div>
<div class="abs" style="left:280.800px;top:177.500px;width:9.400px;height:9.600px;background:#e3e3f1;border:.800px solid;border-color:#fbfbff #55557a #55557a #fbfbff"></div>
<svg class="abs" style="left:280.800px;top:0" width="10" height="188" viewBox="0 0 10 188"><path d="M2.800 6.200h4L4.800 3.600zM2.800 181.200h4L4.800 183.800z" fill="#111"/></svg>
</div>
<svg class="abs" style="left:198px;top:56px" width="12" height="180" viewBox="198 56 12 180" fill="none"><defs><linearGradient id="gi" x1="0" y1="0" x2="0" y2="1"><stop offset="0" stop-color="#bfe0fa"/><stop offset="1" stop-color="#5da3e4"/></linearGradient><linearGradient id="gg" x1="0" y1="0" x2="0" y2="1"><stop offset="0" stop-color="#8be28f"/><stop offset="1" stop-color="#3cc24a"/></linearGradient></defs>
<path d="M199.300 58.8h6.500l2.400 2.200v7.300h-8.900z" fill="url(#gi)" stroke="#5a98da" stroke-width=".7"/>
<path d="M200.400 64.1h1.200M203.600 62.0c-1.800-.4-1.800 1.300 0 1.500 1.200.6.700 1.700-.8 1.300M206.400 62.0v3.800" stroke="#122a78" stroke-width=".95"/>
<path d="M199.300 71.5h6.500l2.400 2.200v7.300h-8.900z" fill="url(#gi)" stroke="#5a98da" stroke-width=".7"/>
<path d="M200.400 76.8h1.200M203.600 74.7c-1.800-.4-1.800 1.300 0 1.500 1.200.6.700 1.700-.8 1.300M206.400 74.7v3.800" stroke="#122a78" stroke-width=".95"/>
<path d="M199.300 84.2h6.500l2.400 2.200v7.300h-8.900z" fill="url(#gi)" stroke="#5a98da" stroke-width=".7"/>
<path d="M200.600 89.2h2.600M204.200 89.2h2.600" stroke="#122a78" stroke-width="2.600"/>
<path d="M199.300 97.0h6.500l2.400 2.200v7.300h-8.900z" fill="url(#gi)" stroke="#5a98da" stroke-width=".7"/>
<path d="M200.400 102.3h1.200M203.600 100.2c-1.800-.4-1.800 1.300 0 1.500 1.200.6.700 1.700-.8 1.300M206.400 100.2v3.800" stroke="#122a78" stroke-width=".95"/>
<path d="M199.300 109.7h6.500l2.400 2.200v7.300h-8.900z" fill="url(#gi)" stroke="#5a98da" stroke-width=".7"/>
<path d="M200.400 115.0h1.200M203.600 112.9c-1.800-.4-1.800 1.300 0 1.500 1.200.6.700 1.700-.8 1.300M206.400 112.9v3.800" stroke="#122a78" stroke-width=".95"/>
<path d="M199.300 122.4h6.500l2.400 2.200v7.300h-8.900z" fill="url(#gi)" stroke="#5a98da" stroke-width=".7"/>
<path d="M200.600 127.4h2.600M204.200 127.4h2.600" stroke="#122a78" stroke-width="2.600"/>
<path d="M199.300 135.1h6.500l2.400 2.200v7.300h-8.900z" fill="url(#gg)" stroke="#3db048" stroke-width=".7"/><path d="M200.600 142.0l2.300-2.800 1.600 1.600 2.200-2.200" stroke="#0d5c14" stroke-width=".9"/>
<path d="M199.300 147.8h6.500l2.400 2.200v7.300h-8.900z" fill="url(#gi)" stroke="#5a98da" stroke-width=".7"/>
<path d="M200.400 153.1h1.200M203.600 151.0c-1.800-.4-1.800 1.300 0 1.500 1.200.6.700 1.700-.8 1.300M206.400 151.0v3.800" stroke="#122a78" stroke-width=".95"/>
<path d="M199.300 160.6h6.500l2.400 2.200v7.300h-8.900z" fill="#93e2e6" stroke="#5bbcc6" stroke-width=".7"/><path d="M201.600 162.9v4.600M203.600 162.9l2.200 4M205.800 162.9l-1.600 2.400" stroke="#2a8a96" stroke-width=".8"/>
<path d="M199.300 173.3h6.500l2.400 2.200v7.300h-8.900z" fill="url(#gi)" stroke="#5a98da" stroke-width=".7"/>
<path d="M200.600 178.3h2.600M204.200 178.3h2.600" stroke="#122a78" stroke-width="2.600"/>
<path d="M199.300 186.0h6.500l2.400 2.200v7.300h-8.900z" fill="url(#gg)" stroke="#3db048" stroke-width=".7"/><path d="M200.600 192.9l2.300-2.800 1.600 1.600 2.200-2.200" stroke="#0d5c14" stroke-width=".9"/>
<path d="M199.300 198.7h6.500l2.400 2.200v7.300h-8.900z" fill="url(#gi)" stroke="#5a98da" stroke-width=".7"/>
<path d="M200.400 204.0h1.200M203.600 201.9c-1.800-.4-1.800 1.300 0 1.500 1.200.6.700 1.700-.8 1.300M206.400 201.9v3.800" stroke="#122a78" stroke-width=".95"/>
<path d="M199.300 211.4h6.500l2.400 2.200v7.300h-8.900z" fill="url(#gg)" stroke="#3db048" stroke-width=".7"/><path d="M200.600 218.3l2.300-2.800 1.600 1.600 2.200-2.200" stroke="#0d5c14" stroke-width=".9"/>
<path d="M199.300 224.2h6.500l2.400 2.200v7.300h-8.900z" fill="url(#gg)" stroke="#3db048" stroke-width=".7"/><path d="M200.600 231.1l2.300-2.800 1.600 1.600 2.200-2.200" stroke="#0d5c14" stroke-width=".9"/>
</svg>
<span class="t" id="t19" style="left:202.2px;top:48.9px;font-size:7px;color:#1c1c1c;transform:scaleX(0.979);">Переменная</span>
<span class="t" id="t20" style="left:342.6px;top:48.9px;font-size:7px;color:#1c1c1c;transform:scaleX(0.947);">Значение</span>
<span class="t" id="t21" style="left:211.8px;top:60.1px;font-size:7px;color:#000;transform:scaleX(0.895);">History</span>
<span class="t" id="t22" style="left:340.2px;top:60.1px;font-size:7px;color:#000;transform:scaleX(0.967);">555</span>
<span class="t" id="t23" style="left:211.8px;top:72.8px;font-size:7px;color:#000;transform:scaleX(0.903);">TimeFrame</span>
<span class="t" id="t24" style="left:340.2px;top:72.8px;font-size:7px;color:#000;transform:scaleX(0.918);">current</span>
<span class="t" id="t25" style="left:211.8px;top:85.5px;font-size:7px;color:#000;transform:scaleX(0.934);">Interpolate</span>
<span class="t" id="t26" style="left:340.2px;top:85.5px;font-size:7px;color:#000;transform:scaleX(0.956);">Quadratic Interpolation</span>
<span class="t" id="t27" style="left:211.8px;top:98.3px;font-size:7px;color:#000;transform:scaleX(0.924);">Lag</span>
<span class="t" id="t28" style="left:340.2px;top:98.3px;font-size:7px;color:#000;transform:scaleX(0.962);">25</span>
<span class="t" id="t29" style="left:211.8px;top:111.0px;font-size:7px;color:#000;transform:scaleX(0.916);">NumberOfComps</span>
<span class="t" id="t30" style="left:340.2px;top:111.0px;font-size:7px;color:#000;transform:scaleX(0.922);">2</span>
<span class="t" id="t31" style="left:211.8px;top:123.7px;font-size:7px;color:#000;transform:scaleX(0.928);">SSAPrice</span>
<span class="t" id="t32" style="left:340.2px;top:123.7px;font-size:7px;color:#000;transform:scaleX(0.925);">Close price</span>
<span class="t" id="t33" style="left:211.8px;top:136.4px;font-size:7px;color:#000;transform:scaleX(0.905);">SSAColor</span>
<span class="t" id="t34" style="left:340.2px;top:136.4px;font-size:7px;color:#000;transform:scaleX(0.912);">true</span>
<span class="t" id="t35" style="left:211.8px;top:149.1px;font-size:7px;color:#000;transform:scaleX(0.914);">Signal</span>
<span class="t" id="t36" style="left:340.2px;top:149.1px;font-size:7px;color:#000;transform:scaleX(0.962);">25</span>
<span class="t" id="t37" style="left:211.8px;top:161.9px;font-size:7px;color:#000;transform:scaleX(0.901);">FlatSize</span>
<span class="t" id="t38" style="left:340.2px;top:161.9px;font-size:7px;color:#000;transform:scaleX(1.027);">0.0</span>
<span class="t" id="t39" style="left:211.8px;top:174.6px;font-size:7px;color:#000;transform:scaleX(0.933);">SigMode</span>
<span class="t" id="t40" style="left:340.2px;top:174.6px;font-size:7px;color:#000;transform:scaleX(0.949);">Linear weighted</span>
<span class="t" id="t41" style="left:211.8px;top:187.3px;font-size:7px;color:#000;transform:scaleX(0.938);">ShowHisto</span>
<span class="t" id="t42" style="left:340.2px;top:187.3px;font-size:7px;color:#000;transform:scaleX(0.912);">true</span>
<span class="t" id="t43" style="left:211.8px;top:200.0px;font-size:7px;color:#000;transform:scaleX(0.958);">SIGNALBAR</span>
<span class="t" id="t44" style="left:340.2px;top:200.0px;font-size:7px;color:#000;transform:scaleX(0.922);">0</span>
<span class="t" id="t45" style="left:211.8px;top:212.7px;font-size:7px;color:#000;transform:scaleX(0.927);">AlertsMessage</span>
<span class="t" id="t46" style="left:340.2px;top:212.7px;font-size:7px;color:#000;transform:scaleX(0.912);">true</span>
<span class="t" id="t47" style="left:211.8px;top:225.5px;font-size:7px;color:#000;transform:scaleX(0.928);">AlertsSound</span>
<span class="t" id="t48" style="left:340.2px;top:225.5px;font-size:7px;color:#000;transform:scaleX(0.912);">true</span>
<svg class="abs" style="left:215px;top:165px" width="150" height="8" viewBox="215 165 150 8"><path d="M219.200 168.900L358.400 170" stroke="#e6172b" stroke-width="2.100" stroke-linecap="round"/></svg>
<div class="abs" style="left:494.6px;top:200.7px;width:66.0px;height:13.8px;background:#e3e3f1;border:1px solid;border-color:#fafaff #50507a #50507a #fafaff;box-shadow:inset -1px -1px 0 #9a9ac4;"></div>
<span class="t" id="t49" style="left:511.4px;top:204.3px;font-size:7px;color:#1c1c1c;transform:scaleX(1.017);">Загрузить</span>
<div class="abs" style="left:494.6px;top:221.5px;width:66.0px;height:13.8px;background:#e3e3f1;border:1px solid;border-color:#fafaff #50507a #50507a #fafaff;box-shadow:inset -1px -1px 0 #9a9ac4;"></div>
<span class="t" id="t50" style="left:510.9px;top:225.1px;font-size:7px;color:#1c1c1c;transform:scaleX(0.963);">Сохранить</span>
<div class="abs" style="left:419.0px;top:250.9px;width:46.0px;height:12.7px;background:#e3e3f1;border:1px solid;border-color:#fafaff #50507a #50507a #fafaff;box-shadow:0 0 0 1px #111, inset -1px -1px 0 #9a9ac4;"></div>
<span class="t" id="t51" style="left:436.8px;top:253.9px;font-size:7px;color:#1c1c1c;transform:scaleX(1.037);">OK</span>
<div class="abs" style="left:470.3px;top:250.0px;width:46.9px;height:14.2px;background:#e3e3f1;border:1px solid;border-color:#fafaff #50507a #50507a #fafaff;box-shadow:inset -1px -1px 0 #9a9ac4;"></div>
<span class="t" id="t52" style="left:481.5px;top:253.8px;font-size:7px;color:#1c1c1c;transform:scaleX(0.975);">Отмена</span>
<div class="abs" style="left:521.7px;top:250.0px;width:46.9px;height:14.2px;background:#e3e3f1;border:1px solid;border-color:#fafaff #50507a #50507a #fafaff;box-shadow:inset -1px -1px 0 #9a9ac4;"></div>
<span class="t" id="t53" style="left:534.9px;top:253.8px;font-size:7px;color:#1c1c1c;transform:scaleX(1.007);">Сброс</span>
<svg class="abs" style="left:566px;top:261px" width="9" height="9" viewBox="0 0 9 9"><path d="M8.500 2L2 8.500M8.500 4.500L4.500 8.500M8.500 7L7 8.500" stroke="#8484b4" stroke-width=".9"/><path d="M8.500 3L3 8.500M8.500 5.500L5.500 8.500" stroke="#fff" stroke-width=".6"/></svg>
</body></html>
